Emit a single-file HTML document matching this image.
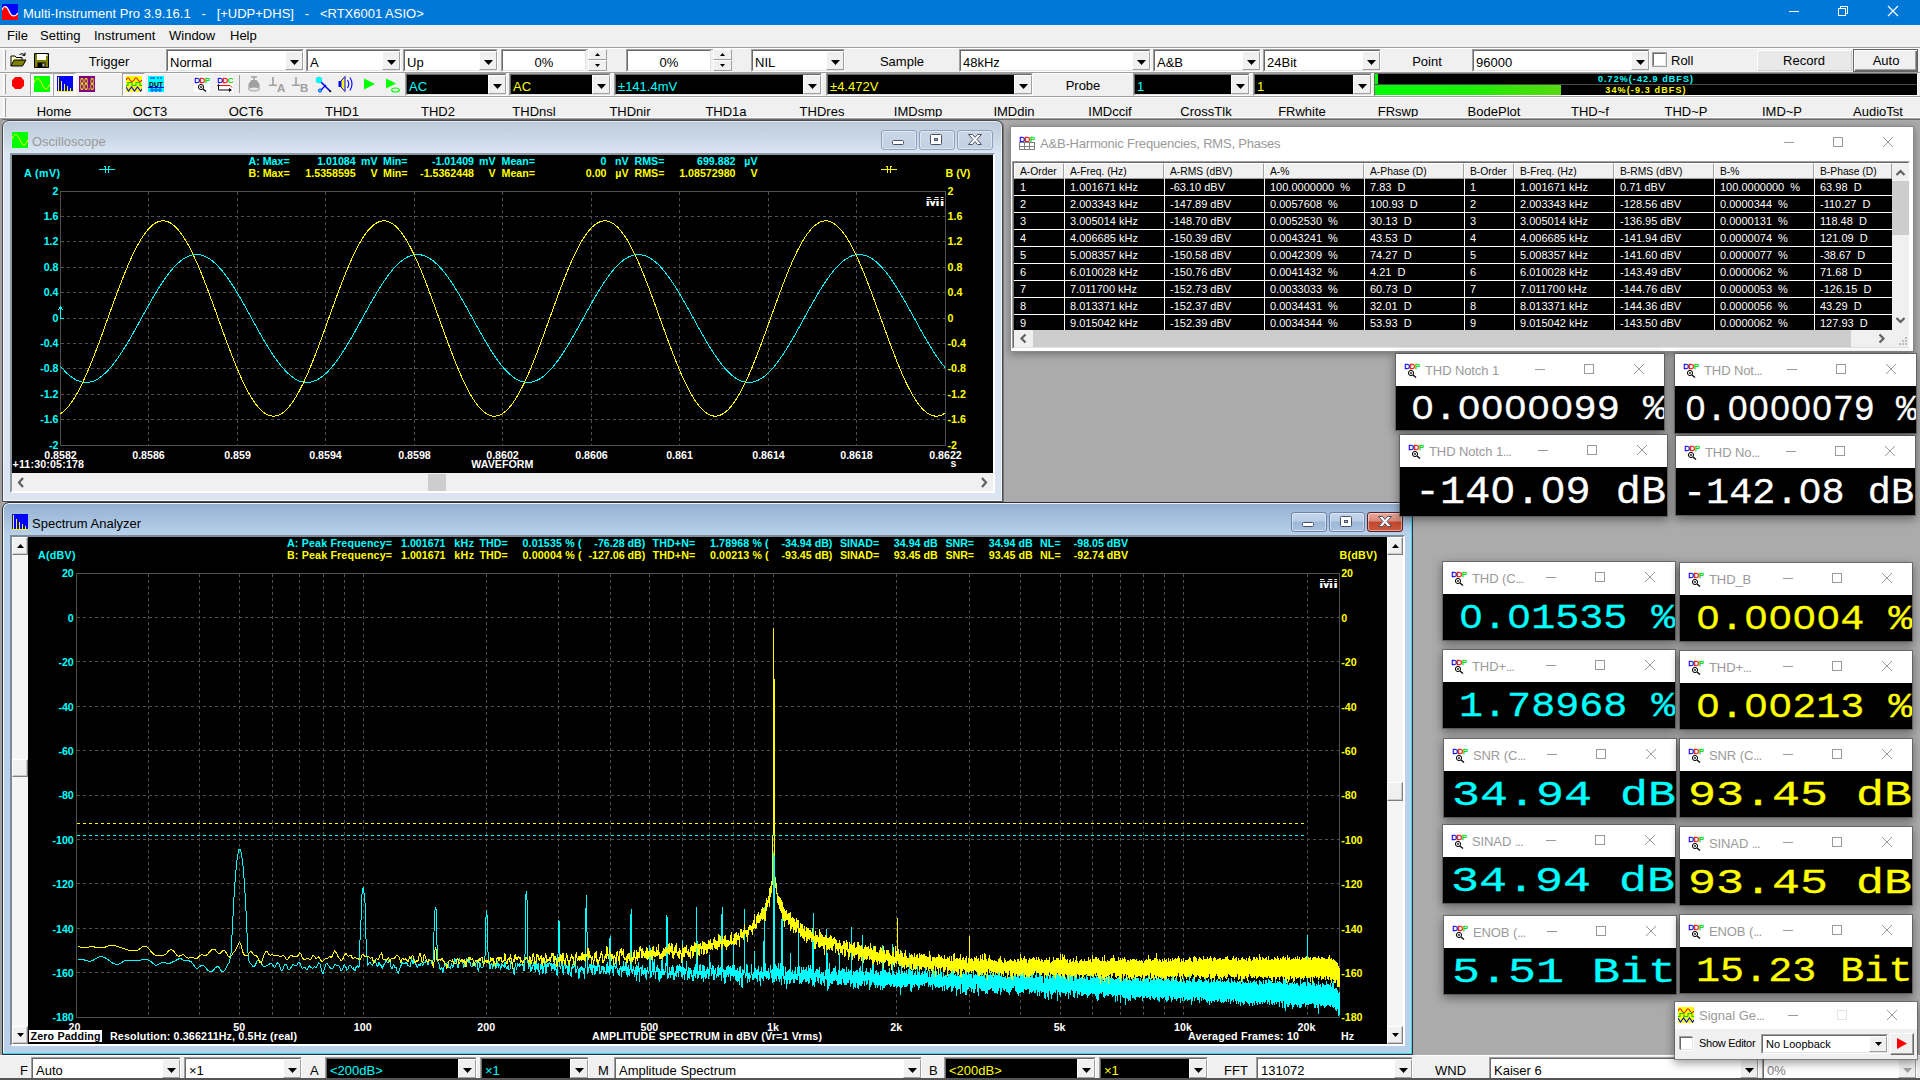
<!DOCTYPE html>
<html><head><meta charset="utf-8"><title>Multi-Instrument Pro</title><style>
html,body{margin:0;padding:0}
body{width:1920px;height:1080px;overflow:hidden;position:relative;background:#ababab;font-family:"Liberation Sans",sans-serif;font-size:13px}
.a{position:absolute}
.t{position:absolute;white-space:pre;line-height:16px}
.cb{box-sizing:border-box;border:1px solid;border-color:#a0a0a0 #fff #fff #a0a0a0}
.cbi{position:absolute;left:0;top:0;right:0;bottom:0;box-sizing:border-box;border:1px solid;border-color:#696969 #e3e3e3 #e3e3e3 #696969;background:#fff}
.sp .cbi{right:20px}
.cbt{position:absolute;top:4px;line-height:16px;white-space:pre;font-size:13px}
.cbb{position:absolute;right:-1px;top:0;bottom:0;width:18px;background:#f0f0f0;box-sizing:border-box;border:1px solid;border-color:#fff #a0a0a0 #a0a0a0 #fff}
</style></head><body>
<div class="a " style="left:0px;top:0px;width:1920px;height:25px;background:#0078d7"></div><svg class="a" style="left:2px;top:4px" width="16" height="16" viewBox="0 0 16 16"><rect width="16" height="16" fill="#00f"/><path d="M0 6C2 0.500,5 2,7 7S12 14,16 9V16H0z" fill="#f00"/><path d="M0 6C2 0.500,5 2,7 7S12 14,16 9" stroke="#fff" stroke-width="1.200" fill="none"/></svg><span class="t " style="left:23px;top:6px;font-size:13px;color:#fff;">Multi-Instrument Pro 3.9.16.1   -   [+UDP+DHS]   -   &lt;RTX6001 ASIO&gt;</span><svg class="a" style="left:1780px;top:0" width="140" height="25" viewBox="0 0 140 25" shape-rendering="crispEdges"><path d="M8.500 11.500h10" stroke="#fff" fill="none"/><path d="M58.5 8.5h7v7h-7z M60.5 8.5v-2h7v7h-2" stroke="#fff" fill="none"/><path d="M108 6l10 10M118 6l-10 10" stroke="#fff" fill="none" stroke-width="1.200" shape-rendering="auto"/></svg><div class="a " style="left:0px;top:25px;width:1920px;height:23px;background:#f0f0f0"></div><span class="t " style="left:7px;top:28px;font-size:13px;color:#000;">File</span><span class="t " style="left:40px;top:28px;font-size:13px;color:#000;">Setting</span><span class="t " style="left:94px;top:28px;font-size:13px;color:#000;">Instrument</span><span class="t " style="left:169px;top:28px;font-size:13px;color:#000;">Window</span><span class="t " style="left:230px;top:28px;font-size:13px;color:#000;">Help</span><div class="a " style="left:0px;top:47px;width:1920px;height:71px;background:#f0f0f0"></div><div class="a " style="left:0px;top:47px;width:1920px;height:1px;background:#a0a0a0"></div><div class="a " style="left:0px;top:48px;width:1920px;height:1px;background:#fff"></div><div class="a " style="left:0px;top:72px;width:1920px;height:1px;background:#a0a0a0"></div><div class="a " style="left:0px;top:73px;width:1920px;height:1px;background:#fff"></div><div class="a " style="left:0px;top:96px;width:1920px;height:1px;background:#a0a0a0"></div><div class="a " style="left:0px;top:97px;width:1920px;height:1px;background:#fff"></div><div class="a " style="left:3px;top:50px;width:2px;height:20px;border-left:1px solid #fff;border-right:1px solid #a0a0a0;box-sizing:border-box;width:3px"></div><div class="a " style="left:3px;top:74px;width:2px;height:20px;border-left:1px solid #fff;border-right:1px solid #a0a0a0;box-sizing:border-box;width:3px"></div><div class="a " style="left:3px;top:98px;width:2px;height:20px;border-left:1px solid #fff;border-right:1px solid #a0a0a0;box-sizing:border-box;width:3px"></div><svg class="a" style="left:10px;top:52px" width="17" height="15" viewBox="0 0 17 15"><path d="M1 14V4h4l1 1.500h6V8" fill="#ffffc0" stroke="#000" stroke-width="1"/><path d="M1 14l3-6h12l-3.500 6z" fill="#808000" stroke="#000" stroke-width="1"/><path d="M9.500 2.500q3-2 5.500 .5M15 0.500v2.800h-2.800" stroke="#000" fill="none" stroke-width="1"/></svg><svg class="a" style="left:34px;top:53px" width="15" height="15" viewBox="0 0 15 15"><path d="M.5 .5h14v14h-14z" fill="#808000" stroke="#000"/><rect x="3" y="1" width="9" height="6" fill="#fff"/><rect x="3.500" y="9.500" width="8" height="5" fill="#000"/><rect x="8.500" y="10.500" width="2" height="3" fill="#c0c0c0"/><rect x="12" y="1.500" width="1.500" height="1.500" fill="#fff"/></svg><span class="t" style="left:9px;width:200px;text-align:center;top:54px;font-size:13px;color:#000">Trigger</span><div class="a cb" style="left:166px;top:49px;width:138px;height:23px;"><div class="cbi" style="background:#fff"><span class="cbt" style="color:#000;font-size:13px;left:2px">Normal</span><div class="cbb"><svg class="a" style="right:3px;top:50%;margin-top:-1px" width="9" height="5" viewBox="0 0 9 5"><path d="M0 0h9l-4.5 5z" fill="#000"/></svg></div></div></div><div class="a cb" style="left:306px;top:49px;width:95px;height:23px;"><div class="cbi" style="background:#fff"><span class="cbt" style="color:#000;font-size:13px;left:2px">A</span><div class="cbb"><svg class="a" style="right:3px;top:50%;margin-top:-1px" width="9" height="5" viewBox="0 0 9 5"><path d="M0 0h9l-4.5 5z" fill="#000"/></svg></div></div></div><div class="a cb" style="left:403px;top:49px;width:95px;height:23px;"><div class="cbi" style="background:#fff"><span class="cbt" style="color:#000;font-size:13px;left:2px">Up</span><div class="cbb"><svg class="a" style="right:3px;top:50%;margin-top:-1px" width="9" height="5" viewBox="0 0 9 5"><path d="M0 0h9l-4.5 5z" fill="#000"/></svg></div></div></div><div class="a cb sp" style="left:501px;top:49px;width:106px;height:23px;"><div class="cbi" style="right:20px"><span class="cbt" style="left:0;right:0;text-align:center">0%</span></div></div><div class="a " style="left:588px;top:49px;width:19px;height:11px;background:#f0f0f0;border:1px solid;border-color:#fff #a0a0a0 #a0a0a0 #fff;box-sizing:border-box"><svg class="a" style="left:6px;top:3px" width="5" height="3" viewBox="0 0 5 3"><path d="M0 3h5L2.500 0z" fill="#000"/></svg></div><div class="a " style="left:588px;top:60px;width:19px;height:11px;background:#f0f0f0;border:1px solid;border-color:#fff #a0a0a0 #a0a0a0 #fff;box-sizing:border-box"><svg class="a" style="left:6px;top:3px" width="5" height="3" viewBox="0 0 5 3"><path d="M0 0h5L2.500 3z" fill="#000"/></svg></div><div class="a cb sp" style="left:626px;top:49px;width:106px;height:23px;"><div class="cbi" style="right:20px"><span class="cbt" style="left:0;right:0;text-align:center">0%</span></div></div><div class="a " style="left:713px;top:49px;width:19px;height:11px;background:#f0f0f0;border:1px solid;border-color:#fff #a0a0a0 #a0a0a0 #fff;box-sizing:border-box"><svg class="a" style="left:6px;top:3px" width="5" height="3" viewBox="0 0 5 3"><path d="M0 3h5L2.500 0z" fill="#000"/></svg></div><div class="a " style="left:713px;top:60px;width:19px;height:11px;background:#f0f0f0;border:1px solid;border-color:#fff #a0a0a0 #a0a0a0 #fff;box-sizing:border-box"><svg class="a" style="left:6px;top:3px" width="5" height="3" viewBox="0 0 5 3"><path d="M0 0h5L2.500 3z" fill="#000"/></svg></div><div class="a cb" style="left:751px;top:49px;width:94px;height:23px;"><div class="cbi" style="background:#fff"><span class="cbt" style="color:#000;font-size:13px;left:2px">NIL</span><div class="cbb"><svg class="a" style="right:3px;top:50%;margin-top:-1px" width="9" height="5" viewBox="0 0 9 5"><path d="M0 0h9l-4.5 5z" fill="#000"/></svg></div></div></div><span class="t" style="left:802px;width:200px;text-align:center;top:54px;font-size:13px;color:#000">Sample</span><div class="a cb" style="left:959px;top:49px;width:192px;height:23px;"><div class="cbi" style="background:#fff"><span class="cbt" style="color:#000;font-size:13px;left:2px">48kHz</span><div class="cbb"><svg class="a" style="right:3px;top:50%;margin-top:-1px" width="9" height="5" viewBox="0 0 9 5"><path d="M0 0h9l-4.5 5z" fill="#000"/></svg></div></div></div><div class="a cb" style="left:1153px;top:49px;width:108px;height:23px;"><div class="cbi" style="background:#fff"><span class="cbt" style="color:#000;font-size:13px;left:2px">A&amp;B</span><div class="cbb"><svg class="a" style="right:3px;top:50%;margin-top:-1px" width="9" height="5" viewBox="0 0 9 5"><path d="M0 0h9l-4.5 5z" fill="#000"/></svg></div></div></div><div class="a cb" style="left:1263px;top:49px;width:118px;height:23px;"><div class="cbi" style="background:#fff"><span class="cbt" style="color:#000;font-size:13px;left:2px">24Bit</span><div class="cbb"><svg class="a" style="right:3px;top:50%;margin-top:-1px" width="9" height="5" viewBox="0 0 9 5"><path d="M0 0h9l-4.5 5z" fill="#000"/></svg></div></div></div><span class="t" style="left:1327px;width:200px;text-align:center;top:54px;font-size:13px;color:#000">Point</span><div class="a cb" style="left:1472px;top:49px;width:178px;height:23px;"><div class="cbi" style="background:#fff"><span class="cbt" style="color:#000;font-size:13px;left:2px">96000</span><div class="cbb"><svg class="a" style="right:3px;top:50%;margin-top:-1px" width="9" height="5" viewBox="0 0 9 5"><path d="M0 0h9l-4.5 5z" fill="#000"/></svg></div></div></div><div class="a " style="left:1653px;top:53px;width:13px;height:13px;background:#fff;border:1px solid;border-color:#696969 #e3e3e3 #e3e3e3 #696969;box-sizing:border-box;outline:1px solid #a0a0a0;outline-offset:0"></div><span class="t " style="left:1671px;top:53px;font-size:13px;color:#000;">Roll</span><div class="a " style="left:1757px;top:50px;width:95px;height:21px;background:#e9e9e9;border:1px solid;border-color:#fff #d0d0d0 #d0d0d0 #fff;box-sizing:border-box"></div><span class="t" style="left:1704px;width:200px;text-align:center;top:53px;font-size:13px;color:#000">Record</span><div class="a " style="left:1853px;top:49px;width:65px;height:23px;background:#f0f0f0;border:1px solid #646464;box-sizing:border-box;box-shadow:inset 1px 1px 0 #fff,inset -1px -1px 0 #696969,inset -2px -2px 0 #a0a0a0"></div><span class="t" style="left:1786px;width:200px;text-align:center;top:53px;font-size:13px;color:#000">Auto</span><svg class="a" style="left:11px;top:76px" width="14" height="14" viewBox="0 0 14 14"><path d="M4.2 1h5.6L13 4.2v5.6L9.8 13H4.2L1 9.8V4.2z" fill="#f00"/></svg><div class="a " style="left:30px;top:73px;width:23px;height:23px;background:#f8f8f8;border:1px solid;border-color:#a0a0a0 #fff #fff #a0a0a0;box-sizing:border-box"></div><div class="a " style="left:122px;top:73px;width:23px;height:23px;background:#f8f8f8;border:1px solid;border-color:#a0a0a0 #fff #fff #a0a0a0;box-sizing:border-box"></div><div class="a " style="left:53px;top:73px;width:23px;height:23px;background:#f8f8f8;border:1px solid;border-color:#a0a0a0 #fff #fff #a0a0a0;box-sizing:border-box"></div><svg class="a" style="left:34px;top:76px" width="16" height="16" viewBox="0 0 16 16" shape-rendering="crispEdges"><rect width="16" height="16" fill="#0f0"/><path d="M0 7 C2 1,5 1,8 8 S13 14,16 8" stroke="#ff0" fill="none" stroke-width="1" shape-rendering="auto"/></svg><svg class="a" style="left:57px;top:76px" width="16" height="16" viewBox="0 0 16 16" shape-rendering="crispEdges"><rect width="16" height="16" fill="#00f"/><path d="M1.5 1v14M4.5 5v10M7.5 8v7M10.5 10v5M13.5 12v3M0 15.5h16" stroke="#ff0" fill="none"/></svg><svg class="a" style="left:79px;top:76px" width="16" height="16" viewBox="0 0 16 16"><rect width="16" height="16" fill="#800080"/><text x="8" y="14" font-size="16" font-family="Liberation Sans,sans-serif" fill="#ff0" text-anchor="middle" textLength="14.500" lengthAdjust="spacingAndGlyphs">88.8</text></svg><svg class="a" style="left:126px;top:76px" width="16" height="16" viewBox="0 0 16 16"><rect width="16" height="16" fill="#ff0"/><path d="M0 4q2-4.500 4 0q2 3 4 0q2-4.500 4 0q2 3 4 0" stroke="#f00" fill="none" stroke-width="1.100"/><path d="M0 9.500h2v-3h4v3h4v-3h4v3h2" stroke="#0c0" fill="none" stroke-width="1.100"/><path d="M0 11l2.500 4l3-4l3 4l3-4l3 4l1.500-2" stroke="#00f" fill="none" stroke-width="1.100"/></svg><svg class="a" style="left:148px;top:76px" width="16" height="16" viewBox="0 0 16 16"><rect width="16" height="16" fill="#0ff"/><text x="8" y="10.5" font-size="8" font-weight="bold" font-family="Liberation Sans,sans-serif" fill="#000" text-anchor="middle" textLength="14" lengthAdjust="spacingAndGlyphs">DUT</text><path d="M2 2h5M9 2h2M12 2h2M0 11.5h16" stroke="#00f" fill="none"/><circle cx="4" cy="14" r="1.3" fill="none" stroke="#00f" stroke-width=".8"/><circle cx="8" cy="14" r="1.3" fill="none" stroke="#00f" stroke-width=".8"/><circle cx="12" cy="14" r="1.3" fill="none" stroke="#00f" stroke-width=".8"/></svg><svg class="a" style="left:194px;top:76px" width="16" height="16" viewBox="0 0 16 16"><rect width="16" height="16" fill="#fff"/><text x="0.200" y="6.800" font-size="8" font-family="Liberation Sans,sans-serif" stroke-width=".35" fill="#00f" stroke="#00f">D</text><text x="5.400" y="6.800" font-size="8" font-family="Liberation Sans,sans-serif" stroke-width=".35" fill="#f00" stroke="#f00">D</text><text x="10.700" y="6.800" font-size="8" font-family="Liberation Sans,sans-serif" stroke-width=".35" fill="#0d0" stroke="#0d0">P</text><circle cx="7" cy="11" r="2.600" fill="none" stroke="#000" stroke-width="1"/><path d="M5.800 11h2.400M7 9.800v2.400" stroke="#000" stroke-width=".8"/><path d="M9 13l3 2.500" stroke="#000" stroke-width="1.300"/></svg><svg class="a" style="left:217px;top:76px" width="16" height="16" viewBox="0 0 16 16"><rect width="16" height="16" fill="#fff"/><text x="0.200" y="6.800" font-size="8" font-family="Liberation Sans,sans-serif" stroke-width=".35" fill="#00f" stroke="#00f">D</text><text x="5.400" y="6.800" font-size="8" font-family="Liberation Sans,sans-serif" stroke-width=".35" fill="#f00" stroke="#f00">D</text><text x="10.700" y="6.800" font-size="8" font-family="Liberation Sans,sans-serif" stroke-width=".35" fill="#0d0" stroke="#0d0">C</text><path d="M2 9.5h11l2 2" stroke="#f00" fill="none"/><path d="M1.5 9v5h12" stroke="#000" fill="none"/><path d="M12 12l3 2l-3 2zM0 10l1.5-2l1.5 2z" fill="#000"/></svg><div class="a " style="left:239px;top:75px;width:1px;height:18px;background:#a0a0a0"></div><svg class="a" style="left:247px;top:76px" width="14" height="16" viewBox="0 0 14 16"><path d="M4 1h6M7 1v3" stroke="#a0a0a0" stroke-width="1.4" fill="none"/><path d="M4.5 4h5l3 4v4.5h-11V8z" fill="#a0a0a0"/><ellipse cx="7" cy="13" rx="5.5" ry="2" fill="#e8e8e8" stroke="#a0a0a0"/></svg><svg class="a" style="left:268px;top:76px" width="18" height="17" viewBox="0 0 18 17"><path d="M5 1v8M1 9.2h8" stroke="#a0a0a0" stroke-width="1.6" fill="none"/><text x="9" y="16" font-size="11.5" font-weight="bold" font-family="Liberation Sans,sans-serif" fill="#a0a0a0">A</text></svg><svg class="a" style="left:291px;top:76px" width="18" height="17" viewBox="0 0 18 17"><path d="M5 1v8M1 9.2h8" stroke="#a0a0a0" stroke-width="1.6" fill="none"/><text x="9" y="16" font-size="11.5" font-weight="bold" font-family="Liberation Sans,sans-serif" fill="#a0a0a0">B</text></svg><svg class="a" style="left:315px;top:76px" width="17" height="17" viewBox="0 0 17 17"><path d="M5 5l10 10" stroke="#00f" stroke-width="1.6" fill="none"/><path d="M5 15l6-6" stroke="#00f" stroke-width="1.2" fill="none"/><circle cx="4" cy="4" r="3" fill="#0ff" stroke="#0cc" stroke-width=".5"/><circle cx="5" cy="14.5" r="1.6" fill="#0ff" stroke="#00f" stroke-width=".8"/><circle cx="15.3" cy="15.3" r="1" fill="#000"/></svg><svg class="a" style="left:337px;top:75px" width="18" height="18" viewBox="0 0 18 18"><path d="M1.5 6h2.5v6H1.5z" fill="#00f"/><path d="M4 6l4-4.5v15L4 12z" fill="#ff0" stroke="#00f" stroke-width="1"/><path d="M10.5 5q2.5 4 0 8M13 2.5q4 6.500 0 13" stroke="#00f" stroke-width="1.1" fill="none"/></svg><svg class="a" style="left:363px;top:78px" width="13" height="12" viewBox="0 0 13 12"><path d="M1 0.500L12 6L1 11.500z" fill="#0f0"/></svg><svg class="a" style="left:385px;top:78px" width="16" height="16" viewBox="0 0 16 16"><path d="M1 0.500L11 5.500L1 10.500z" fill="#0f0"/><ellipse cx="10.5" cy="12" rx="3.8" ry="2" fill="none" stroke="#0f0" stroke-width="1.2"/></svg><div class="a cb" style="left:405px;top:73px;width:102px;height:23px;"><div class="cbi" style="background:#000"><span class="cbt" style="color:#0ff;font-size:13px;left:2px">AC</span><div class="cbb"><svg class="a" style="right:3px;top:50%;margin-top:-1px" width="9" height="5" viewBox="0 0 9 5"><path d="M0 0h9l-4.5 5z" fill="#000"/></svg></div></div></div><div class="a cb" style="left:509px;top:73px;width:102px;height:23px;"><div class="cbi" style="background:#000"><span class="cbt" style="color:#ff0;font-size:13px;left:2px">AC</span><div class="cbb"><svg class="a" style="right:3px;top:50%;margin-top:-1px" width="9" height="5" viewBox="0 0 9 5"><path d="M0 0h9l-4.5 5z" fill="#000"/></svg></div></div></div><div class="a cb" style="left:614px;top:73px;width:208px;height:23px;"><div class="cbi" style="background:#000"><span class="cbt" style="color:#0ff;font-size:13px;left:2px">±141.4mV</span><div class="cbb"><svg class="a" style="right:3px;top:50%;margin-top:-1px" width="9" height="5" viewBox="0 0 9 5"><path d="M0 0h9l-4.5 5z" fill="#000"/></svg></div></div></div><div class="a cb" style="left:826px;top:73px;width:207px;height:23px;"><div class="cbi" style="background:#000"><span class="cbt" style="color:#ff0;font-size:13px;left:2px">±4.472V</span><div class="cbb"><svg class="a" style="right:3px;top:50%;margin-top:-1px" width="9" height="5" viewBox="0 0 9 5"><path d="M0 0h9l-4.5 5z" fill="#000"/></svg></div></div></div><span class="t" style="left:983px;width:200px;text-align:center;top:78px;font-size:13px;color:#000">Probe</span><div class="a cb" style="left:1133px;top:73px;width:117px;height:23px;"><div class="cbi" style="background:#000"><span class="cbt" style="color:#0ff;font-size:13px;left:2px">1</span><div class="cbb"><svg class="a" style="right:3px;top:50%;margin-top:-1px" width="9" height="5" viewBox="0 0 9 5"><path d="M0 0h9l-4.5 5z" fill="#000"/></svg></div></div></div><div class="a cb" style="left:1253px;top:73px;width:119px;height:23px;"><div class="cbi" style="background:#000"><span class="cbt" style="color:#ff0;font-size:13px;left:2px">1</span><div class="cbb"><svg class="a" style="right:3px;top:50%;margin-top:-1px" width="9" height="5" viewBox="0 0 9 5"><path d="M0 0h9l-4.5 5z" fill="#000"/></svg></div></div></div><div class="a " style="left:1374px;top:73px;width:544px;height:23px;background:#000;border:1px solid;border-color:#696969 #fff #fff #696969;box-sizing:border-box"></div><div class="a " style="left:1375px;top:84px;width:542px;height:1px;background:#4a4a4a"></div><div class="a " style="left:1375px;top:74px;width:3px;height:10px;background:#0f0"></div><div class="a " style="left:1375px;top:85px;width:186px;height:10px;background:linear-gradient(90deg,#0f0 0%,#18f000 50%,#58d810 100%)"></div><span class="t" style="left:1546px;width:200px;text-align:center;top:74px;font-size:9px;letter-spacing:1.06px;font-weight:bold;color:#0ff;line-height:11px">0.72%(-42.9 dBFS)</span><span class="t" style="left:1546px;width:200px;text-align:center;top:85px;font-size:9px;letter-spacing:1.14px;font-weight:bold;color:#ff0;line-height:11px">34%(-9.3 dBFS)</span><span class="t" style="left:-46px;width:200px;text-align:center;top:104px;font-size:13px;color:#000">Home</span><span class="t" style="left:50px;width:200px;text-align:center;top:104px;font-size:13px;color:#000">OCT3</span><span class="t" style="left:146px;width:200px;text-align:center;top:104px;font-size:13px;color:#000">OCT6</span><span class="t" style="left:242px;width:200px;text-align:center;top:104px;font-size:13px;color:#000">THD1</span><span class="t" style="left:338px;width:200px;text-align:center;top:104px;font-size:13px;color:#000">THD2</span><span class="t" style="left:434px;width:200px;text-align:center;top:104px;font-size:13px;color:#000">THDnsl</span><span class="t" style="left:530px;width:200px;text-align:center;top:104px;font-size:13px;color:#000">THDnir</span><span class="t" style="left:626px;width:200px;text-align:center;top:104px;font-size:13px;color:#000">THD1a</span><span class="t" style="left:722px;width:200px;text-align:center;top:104px;font-size:13px;color:#000">THDres</span><span class="t" style="left:818px;width:200px;text-align:center;top:104px;font-size:13px;color:#000">IMDsmp</span><span class="t" style="left:914px;width:200px;text-align:center;top:104px;font-size:13px;color:#000">IMDdin</span><span class="t" style="left:1010px;width:200px;text-align:center;top:104px;font-size:13px;color:#000">IMDccif</span><span class="t" style="left:1106px;width:200px;text-align:center;top:104px;font-size:13px;color:#000">CrossTlk</span><span class="t" style="left:1202px;width:200px;text-align:center;top:104px;font-size:13px;color:#000">FRwhite</span><span class="t" style="left:1298px;width:200px;text-align:center;top:104px;font-size:13px;color:#000">FRswp</span><span class="t" style="left:1394px;width:200px;text-align:center;top:104px;font-size:13px;color:#000">BodePlot</span><span class="t" style="left:1490px;width:200px;text-align:center;top:104px;font-size:13px;color:#000">THD~f</span><span class="t" style="left:1586px;width:200px;text-align:center;top:104px;font-size:13px;color:#000">THD~P</span><span class="t" style="left:1682px;width:200px;text-align:center;top:104px;font-size:13px;color:#000">IMD~P</span><span class="t" style="left:1778px;width:200px;text-align:center;top:104px;font-size:13px;color:#000">AudioTst</span><div class="a " style="left:0px;top:117px;width:1920px;height:1px;background:#fff"></div><div class="a " style="left:0px;top:118px;width:1920px;height:1px;background:#a0a0a0"></div><div class="a " style="left:0px;top:119px;width:1920px;height:1px;background:#696969"></div><div class="a " style="left:0px;top:119px;width:2px;height:937px;background:#a0a0a0"></div><div class="a " style="left:0px;top:1055px;width:1920px;height:25px;background:#f0f0f0"></div><div class="a " style="left:0px;top:1055px;width:1920px;height:1px;background:#fff"></div><span class="t " style="left:20px;top:1063px;font-size:13px;color:#000;">F</span><div class="a cb" style="left:31px;top:1057px;width:150px;height:23px;"><div class="cbi" style="background:#fff"><span class="cbt" style="color:#000;font-size:13px;left:3px">Auto</span><div class="cbb"><svg class="a" style="right:3px;top:50%;margin-top:-1px" width="9" height="5" viewBox="0 0 9 5"><path d="M0 0h9l-4.5 5z" fill="#000"/></svg></div></div></div><div class="a cb" style="left:184px;top:1057px;width:118px;height:23px;"><div class="cbi" style="background:#fff"><span class="cbt" style="color:#000;font-size:13px;left:3px">×1</span><div class="cbb"><svg class="a" style="right:3px;top:50%;margin-top:-1px" width="9" height="5" viewBox="0 0 9 5"><path d="M0 0h9l-4.5 5z" fill="#000"/></svg></div></div></div><span class="t " style="left:310px;top:1063px;font-size:13px;color:#000;">A</span><div class="a cb" style="left:325px;top:1057px;width:152px;height:23px;"><div class="cbi" style="background:#000"><span class="cbt" style="color:#0ff;font-size:13px;left:3px">&lt;200dB&gt;</span><div class="cbb"><svg class="a" style="right:3px;top:50%;margin-top:-1px" width="9" height="5" viewBox="0 0 9 5"><path d="M0 0h9l-4.5 5z" fill="#000"/></svg></div></div></div><div class="a cb" style="left:480px;top:1057px;width:109px;height:23px;"><div class="cbi" style="background:#000"><span class="cbt" style="color:#0ff;font-size:13px;left:3px">×1</span><div class="cbb"><svg class="a" style="right:3px;top:50%;margin-top:-1px" width="9" height="5" viewBox="0 0 9 5"><path d="M0 0h9l-4.5 5z" fill="#000"/></svg></div></div></div><span class="t " style="left:598px;top:1063px;font-size:13px;color:#000;">M</span><div class="a cb" style="left:614px;top:1057px;width:308px;height:23px;"><div class="cbi" style="background:#fff"><span class="cbt" style="color:#000;font-size:13px;left:3px">Amplitude Spectrum</span><div class="cbb"><svg class="a" style="right:3px;top:50%;margin-top:-1px" width="9" height="5" viewBox="0 0 9 5"><path d="M0 0h9l-4.5 5z" fill="#000"/></svg></div></div></div><span class="t " style="left:929px;top:1063px;font-size:13px;color:#000;">B</span><div class="a cb" style="left:944px;top:1057px;width:152px;height:23px;"><div class="cbi" style="background:#000"><span class="cbt" style="color:#ff0;font-size:13px;left:3px">&lt;200dB&gt;</span><div class="cbb"><svg class="a" style="right:3px;top:50%;margin-top:-1px" width="9" height="5" viewBox="0 0 9 5"><path d="M0 0h9l-4.5 5z" fill="#000"/></svg></div></div></div><div class="a cb" style="left:1099px;top:1057px;width:109px;height:23px;"><div class="cbi" style="background:#000"><span class="cbt" style="color:#ff0;font-size:13px;left:3px">×1</span><div class="cbb"><svg class="a" style="right:3px;top:50%;margin-top:-1px" width="9" height="5" viewBox="0 0 9 5"><path d="M0 0h9l-4.5 5z" fill="#000"/></svg></div></div></div><span class="t " style="left:1224px;top:1063px;font-size:13px;color:#000;">FFT</span><div class="a cb" style="left:1256px;top:1057px;width:157px;height:23px;"><div class="cbi" style="background:#fff"><span class="cbt" style="color:#000;font-size:13px;left:3px">131072</span><div class="cbb"><svg class="a" style="right:3px;top:50%;margin-top:-1px" width="9" height="5" viewBox="0 0 9 5"><path d="M0 0h9l-4.5 5z" fill="#000"/></svg></div></div></div><span class="t " style="left:1435px;top:1063px;font-size:13px;color:#000;">WND</span><div class="a cb" style="left:1489px;top:1057px;width:270px;height:23px;"><div class="cbi" style="background:#fff"><span class="cbt" style="color:#000;font-size:13px;left:3px">Kaiser 6</span><div class="cbb"><svg class="a" style="right:3px;top:50%;margin-top:-1px" width="9" height="5" viewBox="0 0 9 5"><path d="M0 0h9l-4.5 5z" fill="#000"/></svg></div></div></div><div class="a cb" style="left:1762px;top:1057px;width:155px;height:23px;"><div class="cbi" style="background:#fff"><span class="cbt" style="color:#808080;font-size:13px;left:3px">0%</span><div class="cbb"><svg class="a" style="right:3px;top:50%;margin-top:-1px" width="9" height="5" viewBox="0 0 9 5"><path d="M0 0h9l-4.5 5z" fill="#a0a0a0"/></svg></div></div></div>
<div class="a " style="left:2px;top:120px;width:1001px;height:382px;box-sizing:border-box;border:1px solid #4a4a4a;border-radius:7px 7px 0 0;background:linear-gradient(#bccbdb 1px,#c3d1e0 9px,#ccd9e7 19px,#d7e3f0 29px,#dae6f2 32px,#dae5f1 100%);box-shadow:inset 0 0 0 1px rgba(255,255,255,.6),1px 0 0 #777"></div><svg class="a" style="left:12px;top:132px" width="16" height="16" viewBox="0 0 16 16"><rect width="16" height="16" fill="#0f0"/><path d="M0 7 C2 1,5 1,8 8 S13 14,16 8" stroke="#ff0" fill="none" stroke-width="1"/></svg><span class="t " style="left:32px;top:134px;font-size:13px;color:#9a9a9a;">Oscilloscope</span><div class="a " style="left:881px;top:130px;width:36px;height:20px;background:linear-gradient(#c9d6e6,#c2d1e3);border:1px solid #8e9fc0;border-radius:3px;box-sizing:border-box;box-shadow:inset 0 0 0 1px rgba(255,255,255,.45)"></div><div class="a " style="left:919px;top:130px;width:36px;height:20px;background:linear-gradient(#c9d6e6,#c2d1e3);border:1px solid #8e9fc0;border-radius:3px;box-sizing:border-box;box-shadow:inset 0 0 0 1px rgba(255,255,255,.45)"></div><div class="a " style="left:957px;top:130px;width:36px;height:20px;background:linear-gradient(#c9d6e6,#c2d1e3);border:1px solid #8e9fc0;border-radius:3px;box-sizing:border-box;box-shadow:inset 0 0 0 1px rgba(255,255,255,.45)"></div><svg class="a" style="left:881px;top:130px" width="112" height="20" viewBox="0 0 112 20"><rect x="11.500" y="10.500" width="11" height="4" rx="1" fill="#fff" stroke="#4a5266" stroke-width="1"/><rect x="49.500" y="4.500" width="11" height="10" rx="1" fill="#fff" stroke="#4a5266" stroke-width="1"/><rect x="53.500" y="8.500" width="3" height="2" fill="#a9bbd6" stroke="#4a5266" stroke-width="1"/><path d="M87.500 4.500h4l2.500 3l2.500-3h4l-4.500 5l4.500 5h-4l-2.500-3l-2.500 3h-4l4.500-5z" fill="#fff" stroke="#4a5266" stroke-width="1" stroke-linejoin="round"/></svg><div class="a " style="left:10px;top:153px;width:985px;height:340px;box-sizing:border-box;border:2px solid;border-color:#8f99a6 #fff #fff #8f99a6;background:#000"></div><div class="a " style="left:12px;top:473px;width:981px;height:18px;background:#f0f0f0"></div><div class="a " style="left:428px;top:474px;width:18px;height:17px;background:#cdcdcd"></div><svg class="a" style="left:12px;top:473px" width="981" height="18" viewBox="0 0 981 18"><path d="M11 5l-4 4.500l4 4.500M970 5l4 4.500l-4 4.500" stroke="#606060" stroke-width="2.200" fill="none"/></svg><svg class="a" style="left:12px;top:155px" width="981" height="318" viewBox="12 155 981 318" font-family="Liberation Sans,sans-serif" font-weight="bold" font-size="10.67"><g shape-rendering="crispEdges" stroke="#505050" fill="none"><rect x="60.5" y="191.5" width="885" height="254"/><path d="M148.5 192V445M237.5 192V445M325.5 192V445M414.5 192V445M502.5 192V445M591.5 192V445M679.5 192V445M768.5 192V445M856.5 192V445M61 216.5H945M61 241.5H945M61 267.5H945M61 292.5H945M61 318.5H945M61 343.5H945M61 368.5H945M61 394.5H945M61 419.5H945" stroke-dasharray="3 3"/></g><polyline points="60,365.7 63,369.2 66,372.4 69,375.1 72,377.5 75,379.4 78,380.8 81,381.8 84,382.4 87,382.5 90,382.1 93,381.3 96,380.0 99,378.2 102,376.0 105,373.4 108,370.4 111,367.0 114,363.3 117,359.3 120,354.9 123,350.3 126,345.4 129,340.4 132,335.2 135,329.9 138,324.5 141,319.0 144,313.5 147,308.1 150,302.8 153,297.5 156,292.5 159,287.6 162,282.9 165,278.5 168,274.4 171,270.6 174,267.2 177,264.1 180,261.4 183,259.2 186,257.3 189,256.0 192,255.0 195,254.6 198,254.6 201,255.0 204,256.0 207,257.3 210,259.2 213,261.4 216,264.1 219,267.2 222,270.6 225,274.4 228,278.5 231,282.9 234,287.6 237,292.5 240,297.5 243,302.8 246,308.1 249,313.5 252,319.0 255,324.5 258,329.9 261,335.2 264,340.4 267,345.4 270,350.3 273,354.9 276,359.3 279,363.3 282,367.0 285,370.4 288,373.4 291,376.0 294,378.2 297,380.0 300,381.3 303,382.1 306,382.5 309,382.4 312,381.8 315,380.8 318,379.4 321,377.5 324,375.1 327,372.4 330,369.2 333,365.7 336,361.9 339,357.7 342,353.2 345,348.5 348,343.6 351,338.5 354,333.2 357,327.9 360,322.5 363,317.0 366,311.6 369,306.2 372,300.8 375,295.7 378,290.7 381,285.8 384,281.3 387,277.0 390,273.0 393,269.3 396,266.0 399,263.1 402,260.5 405,258.4 408,256.8 411,255.6 414,254.8 417,254.5 420,254.7 423,255.3 426,256.4 429,258.0 432,259.9 435,262.4 438,265.2 441,268.4 444,272.0 447,275.9 450,280.1 453,284.6 456,289.4 459,294.3 462,299.5 465,304.7 468,310.1 471,315.5 474,321.0 477,326.4 480,331.8 483,337.1 486,342.3 489,347.2 492,352.0 495,356.5 498,360.8 501,364.7 504,368.3 507,371.6 510,374.4 513,376.9 516,378.9 519,380.5 522,381.6 525,382.3 528,382.5 531,382.2 534,381.5 537,380.3 540,378.7 543,376.6 546,374.2 549,371.3 552,368.0 555,364.3 558,360.4 561,356.1 564,351.5 567,346.8 570,341.8 573,336.6 576,331.3 579,325.9 582,320.5 585,315.0 588,309.6 591,304.2 594,298.9 597,293.8 600,288.9 603,284.1 606,279.7 609,275.5 612,271.6 615,268.0 618,264.9 621,262.1 624,259.7 627,257.8 630,256.3 633,255.2 636,254.6 639,254.5 642,254.9 645,255.7 648,256.9 651,258.6 654,260.8 657,263.3 660,266.3 663,269.7 666,273.4 669,277.4 672,281.7 675,286.3 678,291.1 681,296.2 684,301.4 687,306.7 690,312.1 693,317.5 696,323.0 699,328.4 702,333.8 705,339.0 708,344.1 711,349.0 714,353.7 717,358.1 720,362.3 723,366.1 726,369.6 729,372.7 732,375.4 735,377.7 738,379.5 741,381.0 744,381.9 747,382.4 750,382.5 753,382.0 756,381.1 759,379.8 762,378.0 765,375.8 768,373.1 771,370.1 774,366.7 777,362.9 780,358.8 783,354.5 786,349.8 789,344.9 792,339.9 795,334.7 798,329.3 801,323.9 804,318.5 807,313.0 810,307.6 813,302.3 816,297.0 819,292.0 822,287.1 825,282.5 828,278.1 831,274.0 834,270.2 837,266.8 840,263.8 843,261.2 846,259.0 849,257.2 852,255.8 855,255.0 858,254.5 861,254.6 864,255.1 867,256.1 870,257.5 873,259.4 876,261.7 879,264.4 882,267.5 885,271.0 888,274.8 891,278.9 894,283.4 897,288.1 900,293.0 903,298.1 906,303.3 909,308.7 912,314.1 915,319.5 918,325.0 921,330.4 924,335.7 927,340.9 930,345.9 933,350.8 936,355.4 939,359.7 942,363.7 945,367.4 945,367.4" stroke="#0ff" fill="none" stroke-width="1" shape-rendering="crispEdges"/><polyline points="60,414.0 63,411.9 66,409.1 69,405.7 72,401.6 75,396.9 78,391.7 81,385.9 84,379.6 87,372.9 90,365.8 93,358.4 96,350.6 99,342.6 102,334.5 105,326.2 108,317.9 111,309.6 114,301.3 117,293.2 120,285.2 123,277.5 126,270.1 129,263.0 132,256.4 135,250.2 138,244.5 141,239.3 144,234.7 147,230.7 150,227.4 153,224.7 156,222.7 159,221.4 162,220.8 165,221.0 168,221.8 171,223.3 174,225.5 177,228.4 180,232.0 183,236.2 186,241.0 189,246.3 192,252.2 195,258.6 198,265.3 201,272.5 204,280.0 207,287.8 210,295.9 213,304.0 216,312.3 219,320.7 222,329.0 225,337.2 228,345.3 231,353.2 234,360.9 237,368.2 240,375.2 243,381.8 246,387.9 249,393.5 252,398.6 255,403.1 258,406.9 261,410.1 264,412.7 267,414.6 270,415.7 273,416.2 276,415.9 279,415.0 282,413.3 285,411.0 288,408.0 291,404.3 294,400.0 297,395.1 300,389.6 303,383.7 306,377.2 309,370.4 312,363.1 315,355.6 318,347.7 321,339.7 324,331.5 327,323.2 330,314.8 333,306.5 336,298.3 339,290.2 342,282.4 345,274.7 348,267.5 351,260.5 354,254.1 357,248.0 360,242.5 363,237.6 366,233.2 369,229.4 372,226.3 375,223.9 378,222.2 381,221.1 384,220.8 387,221.2 390,222.3 393,224.1 396,226.5 399,229.7 402,233.5 405,237.9 408,242.9 411,248.4 414,254.5 417,261.0 420,267.9 423,275.2 426,282.9 429,290.8 432,298.8 435,307.1 438,315.4 441,323.7 444,332.0 447,340.2 450,348.2 453,356.1 456,363.6 459,370.8 462,377.7 465,384.1 468,390.0 471,395.4 474,400.3 477,404.5 480,408.2 483,411.2 486,413.5 489,415.1 492,416.0 495,416.2 498,415.7 501,414.5 504,412.5 507,409.9 510,406.7 513,402.8 516,398.3 519,393.2 522,387.5 525,381.4 528,374.8 531,367.8 534,360.4 537,352.7 540,344.8 543,336.7 546,328.4 549,320.1 552,311.8 555,303.5 558,295.3 561,287.3 564,279.5 567,272.0 570,264.9 573,258.1 576,251.8 579,245.9 582,240.6 585,235.9 588,231.7 591,228.2 594,225.4 597,223.2 600,221.7 603,220.9 606,220.9 609,221.5 612,222.8 615,224.9 618,227.6 621,231.0 624,235.0 627,239.6 630,244.8 633,250.6 636,256.8 639,263.5 642,270.6 645,278.0 648,285.7 651,293.7 654,301.8 657,310.1 660,318.4 663,326.8 666,335.0 669,343.2 672,351.1 675,358.9 678,366.3 681,373.4 684,380.1 687,386.3 690,392.1 693,397.3 696,401.9 699,405.9 702,409.3 705,412.1 708,414.1 711,415.5 714,416.1 717,416.1 720,415.3 723,413.8 726,411.7 729,408.8 732,405.3 735,401.2 738,396.4 741,391.1 744,385.3 747,379.0 750,372.2 753,365.1 756,357.6 759,349.8 762,341.8 765,333.7 768,325.4 771,317.0 774,308.7 777,300.5 780,292.4 783,284.4 786,276.7 789,269.4 792,262.4 795,255.7 798,249.6 801,243.9 804,238.8 807,234.3 810,230.4 813,227.1 816,224.5 819,222.6 822,221.3 825,220.8 828,221.0 831,221.9 834,223.5 837,225.8 840,228.8 843,232.4 846,236.6 849,241.5 852,246.9 855,252.8 858,259.2 861,266.0 864,273.3 867,280.8 870,288.6 873,296.7 876,304.9 879,313.2 882,321.5 885,329.8 888,338.0 891,346.1 894,354.0 897,361.6 900,368.9 903,375.9 906,382.4 909,388.5 912,394.0 915,399.0 918,403.5 921,407.3 924,410.4 927,412.9 930,414.7 933,415.8 936,416.2 939,415.9 942,414.9 945,413.1 945,413.1" stroke="#ff0" fill="none" stroke-width="1" shape-rendering="crispEdges"/><text x="58.5" y="195.3" fill="#0ff" text-anchor="end" >2</text><text x="947.5" y="195.3" fill="#ff0" text-anchor="start" >2</text><text x="58.5" y="220.3" fill="#0ff" text-anchor="end" >1.6</text><text x="947.5" y="220.3" fill="#ff0" text-anchor="start" >1.6</text><text x="58.5" y="245.3" fill="#0ff" text-anchor="end" >1.2</text><text x="947.5" y="245.3" fill="#ff0" text-anchor="start" >1.2</text><text x="58.5" y="271.3" fill="#0ff" text-anchor="end" >0.8</text><text x="947.5" y="271.3" fill="#ff0" text-anchor="start" >0.8</text><text x="58.5" y="296.3" fill="#0ff" text-anchor="end" >0.4</text><text x="947.5" y="296.3" fill="#ff0" text-anchor="start" >0.4</text><text x="58.5" y="322.3" fill="#0ff" text-anchor="end" >0</text><text x="947.5" y="322.3" fill="#ff0" text-anchor="start" >0</text><text x="58.5" y="347.3" fill="#0ff" text-anchor="end" >-0.4</text><text x="947.5" y="347.3" fill="#ff0" text-anchor="start" >-0.4</text><text x="58.5" y="372.3" fill="#0ff" text-anchor="end" >-0.8</text><text x="947.5" y="372.3" fill="#ff0" text-anchor="start" >-0.8</text><text x="58.5" y="398.3" fill="#0ff" text-anchor="end" >-1.2</text><text x="947.5" y="398.3" fill="#ff0" text-anchor="start" >-1.2</text><text x="58.5" y="423.3" fill="#0ff" text-anchor="end" >-1.6</text><text x="947.5" y="423.3" fill="#ff0" text-anchor="start" >-1.6</text><text x="58.5" y="449.3" fill="#0ff" text-anchor="end" >-2</text><text x="947.5" y="449.3" fill="#ff0" text-anchor="start" >-2</text><text x="60.5" y="458.5" fill="#fff" text-anchor="middle" >0.8582</text><text x="148.5" y="458.5" fill="#fff" text-anchor="middle" >0.8586</text><text x="237.5" y="458.5" fill="#fff" text-anchor="middle" >0.859</text><text x="325.5" y="458.5" fill="#fff" text-anchor="middle" >0.8594</text><text x="414.5" y="458.5" fill="#fff" text-anchor="middle" >0.8598</text><text x="502.5" y="458.5" fill="#fff" text-anchor="middle" >0.8602</text><text x="591.5" y="458.5" fill="#fff" text-anchor="middle" >0.8606</text><text x="679.5" y="458.5" fill="#fff" text-anchor="middle" >0.861</text><text x="768.5" y="458.5" fill="#fff" text-anchor="middle" >0.8614</text><text x="856.5" y="458.5" fill="#fff" text-anchor="middle" >0.8618</text><text x="945.5" y="458.5" fill="#fff" text-anchor="middle" >0.8622</text><text x="12.5" y="468" fill="#fff" text-anchor="start" textLength="71.500">+11:30:05:178</text><text x="502.3" y="468" fill="#fff" text-anchor="middle" >WAVEFORM</text><text x="953.5" y="467" fill="#fff" text-anchor="middle" >s</text><text x="24" y="177" fill="#0ff" text-anchor="start" textLength="36">A (mV)</text><text x="945.5" y="177" fill="#ff0" text-anchor="start" >B (V)</text><text x="248.5" y="165" fill="#0ff" text-anchor="start" >A: Max=</text><text x="355.7" y="165" fill="#0ff" text-anchor="end" >1.01084</text><text x="377.5" y="165" fill="#0ff" text-anchor="end" >mV</text><text x="383" y="165" fill="#0ff" text-anchor="start" >Min=</text><text x="474" y="165" fill="#0ff" text-anchor="end" >-1.01409</text><text x="495.5" y="165" fill="#0ff" text-anchor="end" >mV</text><text x="501.5" y="165" fill="#0ff" text-anchor="start" >Mean=</text><text x="606.5" y="165" fill="#0ff" text-anchor="end" >0</text><text x="628.5" y="165" fill="#0ff" text-anchor="end" >nV</text><text x="634.5" y="165" fill="#0ff" text-anchor="start" >RMS=</text><text x="735.5" y="165" fill="#0ff" text-anchor="end" >699.882</text><text x="757.5" y="165" fill="#0ff" text-anchor="end" >µV</text><text x="248.5" y="177" fill="#ff0" text-anchor="start" >B: Max=</text><text x="355.7" y="177" fill="#ff0" text-anchor="end" >1.5358595</text><text x="377.5" y="177" fill="#ff0" text-anchor="end" >V</text><text x="383" y="177" fill="#ff0" text-anchor="start" >Min=</text><text x="474" y="177" fill="#ff0" text-anchor="end" >-1.5362448</text><text x="495.5" y="177" fill="#ff0" text-anchor="end" >V</text><text x="501.5" y="177" fill="#ff0" text-anchor="start" >Mean=</text><text x="606.5" y="177" fill="#ff0" text-anchor="end" >0.00</text><text x="628.5" y="177" fill="#ff0" text-anchor="end" >µV</text><text x="634.5" y="177" fill="#ff0" text-anchor="start" >RMS=</text><text x="735.5" y="177" fill="#ff0" text-anchor="end" >1.08572980</text><text x="757.5" y="177" fill="#ff0" text-anchor="end" >V</text><path d="M99 169.500H115M105.5 167V173M108.5 167V173M104.5 166l1 1M109.5 166l-1 1" stroke="#0ff" fill="none" shape-rendering="crispEdges"/><path d="M881 169.500H897M887.5 167V173M890.5 167V173M886.5 166l1 1M891.5 166l-1 1" stroke="#ff0" fill="none" shape-rendering="crispEdges"/><path d="M60.500 318V307M58 310l2.500-3l2.500 3M60 318.500h4" stroke="#0ff" fill="none" shape-rendering="crispEdges"/><text x="935" y="206" fill="#fff" text-anchor="middle" font-size="15" textLength="19" lengthAdjust="spacingAndGlyphs">MI</text><path d="M925 196.500h20M925 198.500h20M925 200.500h20" stroke="#000" shape-rendering="crispEdges"/></svg>
<div class="a " style="left:2px;top:502px;width:1411px;height:553px;box-sizing:border-box;border:1px solid #2a2f38;border-radius:7px 7px 0 0;background:linear-gradient(#93b0d0 1px,#9db8d7 7px,#a3bedb 14px,#adc7e3 22px,#b5ceea 29px,#b9d2ec 32px,#b9d1ea 100%);box-shadow:inset -1px -1px 0 #2fdcf2,inset 0 0 0 1px rgba(255,255,255,.85)"></div><svg class="a" style="left:12px;top:514px" width="16" height="16" viewBox="0 0 16 16" shape-rendering="crispEdges"><rect width="16" height="16" fill="#00f"/><path d="M1.500 1v14M4.500 5v10M7.500 8v7M10.500 10v5M13.500 12v3M0 15.500h16" stroke="#ff0" fill="none"/></svg><span class="t " style="left:32px;top:516px;font-size:13px;color:#000;">Spectrum Analyzer</span><div class="a " style="left:1291px;top:512px;width:36px;height:20px;background:linear-gradient(#c5d7ec 0%,#b9cde6 45%,#9db8d8 50%,#a9c2e0 100%);border:1px solid #6f83a8;border-radius:3px;box-sizing:border-box;box-shadow:inset 0 0 0 1px rgba(255,255,255,.45)"></div><div class="a " style="left:1329px;top:512px;width:36px;height:20px;background:linear-gradient(#c5d7ec 0%,#b9cde6 45%,#9db8d8 50%,#a9c2e0 100%);border:1px solid #6f83a8;border-radius:3px;box-sizing:border-box;box-shadow:inset 0 0 0 1px rgba(255,255,255,.45)"></div><div class="a " style="left:1367px;top:512px;width:36px;height:20px;background:linear-gradient(#e9a99b 0%,#d9897a 45%,#c4452c 50%,#c95a3e 100%);border:1px solid #5a1e28;border-radius:3px;box-sizing:border-box;box-shadow:inset 0 0 0 1px rgba(255,255,255,.45)"></div><svg class="a" style="left:1291px;top:512px" width="112" height="20" viewBox="0 0 112 20"><rect x="11.500" y="10.500" width="11" height="4" rx="1" fill="#fff" stroke="#4a5266" stroke-width="1"/><rect x="49.500" y="4.500" width="11" height="10" rx="1" fill="#fff" stroke="#4a5266" stroke-width="1"/><rect x="53.500" y="8.500" width="3" height="2" fill="#a9bbd6" stroke="#4a5266" stroke-width="1"/><path d="M87.500 4.500h4l2.500 3l2.500-3h4l-4.500 5l4.500 5h-4l-2.500-3l-2.500 3h-4l4.500-5z" fill="#fff" stroke="#4a5266" stroke-width="1" stroke-linejoin="round"/></svg><div class="a " style="left:10px;top:535px;width:1395px;height:511px;box-sizing:border-box;border:2px solid;border-color:#7f8a99 #fff #fff #7f8a99;background:#000"></div><div class="a " style="left:12px;top:537px;width:16px;height:507px;background:#f5f5f5"></div><div class="a " style="left:12px;top:537px;width:16px;height:18px;background:#f0f0f0;border:1px solid;border-color:#fff #808080 #808080 #fff;box-sizing:border-box;box-shadow:inset -1px -1px 0 #c8c8c8"><svg class="a" style="left:4px;top:6px" width="7" height="4" viewBox="0 0 7 4"><path d="M0 4h7L3.500 0z" fill="#000"/></svg></div><div class="a " style="left:12px;top:1026px;width:16px;height:18px;background:#f0f0f0;border:1px solid;border-color:#fff #808080 #808080 #fff;box-sizing:border-box;box-shadow:inset -1px -1px 0 #c8c8c8"><svg class="a" style="left:4px;top:6px" width="7" height="4" viewBox="0 0 7 4"><path d="M0 0h7L3.500 4z" fill="#000"/></svg></div><div class="a " style="left:12px;top:759px;width:16px;height:18px;background:#f0f0f0;border:1px solid;border-color:#fff #808080 #808080 #fff;box-sizing:border-box;box-shadow:inset -1px -1px 0 #c8c8c8"></div><div class="a " style="left:1387px;top:537px;width:16px;height:507px;background:#f5f5f5"></div><div class="a " style="left:1387px;top:537px;width:16px;height:18px;background:#f0f0f0;border:1px solid;border-color:#fff #808080 #808080 #fff;box-sizing:border-box;box-shadow:inset -1px -1px 0 #c8c8c8"><svg class="a" style="left:4px;top:6px" width="7" height="4" viewBox="0 0 7 4"><path d="M0 4h7L3.500 0z" fill="#000"/></svg></div><div class="a " style="left:1387px;top:1026px;width:16px;height:18px;background:#f0f0f0;border:1px solid;border-color:#fff #808080 #808080 #fff;box-sizing:border-box;box-shadow:inset -1px -1px 0 #c8c8c8"><svg class="a" style="left:4px;top:6px" width="7" height="4" viewBox="0 0 7 4"><path d="M0 0h7L3.500 4z" fill="#000"/></svg></div><div class="a " style="left:1387px;top:782px;width:16px;height:19px;background:#f0f0f0;border:1px solid;border-color:#fff #808080 #808080 #fff;box-sizing:border-box;box-shadow:inset -1px -1px 0 #c8c8c8"></div><svg class="a" style="left:28px;top:537px" width="1359" height="507" viewBox="28 537 1359 507" font-family="Liberation Sans,sans-serif" font-weight="bold" font-size="10.67"><g shape-rendering="crispEdges" stroke="#505050" fill="none"><rect x="76.5" y="573.5" width="1263" height="444"/><path d="M148.5 574V1017M199.5 574V1017M239.5 574V1017M272.5 574V1017M299.5 574V1017M323.5 574V1017M344.5 574V1017M363.5 574V1017M486.5 574V1017M558.5 574V1017M610.5 574V1017M649.5 574V1017M682.5 574V1017M709.5 574V1017M733.5 574V1017M754.5 574V1017M773.5 574V1017M896.5 574V1017M969.5 574V1017M1020.5 574V1017M1060.5 574V1017M1092.5 574V1017M1120.5 574V1017M1143.5 574V1017M1164.5 574V1017M1183.5 574V1017M1307.5 574V1017M77 617.5H1339M77 661.5H1339M77 706.5H1339M77 750.5H1339M77 795.5H1339M77 839.5H1339M77 883.5H1339M77 928.5H1339M77 972.5H1339" stroke-dasharray="3 3"/></g><path d="M77 823.5H1307" stroke="#ff0" stroke-dasharray="3 3" shape-rendering="crispEdges"/><path d="M77 835.5H1307" stroke="#0ff" stroke-dasharray="3 3" shape-rendering="crispEdges"/><path d="M77.8 959.3L81 959.1L84.1 959.9L87.2 960.9L90.3 961.2L93.3 960.1L96.2 958.3L99.1 957L101.9 956.7L104.8 957.5L107.5 959.2L110.2 961.2L112.9 963.2L115.6 964.4L118.2 964.4L120.7 963.2L123.2 961.5L125.7 960.4L128.2 960.4L130.6 960.6L133 960.5L135.4 960.2L137.7 960.1L140 960.1L142.3 959.9L144.5 959.5L146.7 959.6L148.9 960.2L151.1 961.6L153.2 963.7L155.3 965.1L157.4 965L159.4 963.9L161.5 962.9L163.5 962.6L165.5 962.8L167.5 963.4L169.4 963.5L171.3 962.7L173.2 961.7L175.1 960.8L177 959.8L178.8 958.8L180.7 958.5L182.5 959.5L184.3 960.6L186 960.9L187.8 960.9L189.5 961L191.2 961.9L192.9 964L194.6 966.5L196.3 968.3L198 968.2L199.6 966.7L201.2 965.3L202.8 965.1L204.4 966.2L206 968.2L207.6 970.1L209.1 971.3L210.7 971.6L212.2 971.3L213.7 970L215.2 968L216.7 966.7L218.2 966.8L219.7 968.4L221.1 970.6L222.6 971.9L224 971.2L225.4 969.1L226.8 966.4L228.2 963.9L229.6 961.9L231 953.6L232.4 927.8L233.7 902L235.1 881.1L236.4 865.4L237.7 854.9L239 849.5L240.3 849.3L241.6 854.4L242.9 864.5L244.2 879.9L245.5 900.4L246.7 926L248 953L249.2 962.4L250.4 963.2L251.7 964.6L252.9 966.3L254.1 966.8L255.3 965.2L256.5 962.3L257.7 960.1L258.8 959.9L260 961.3L261.2 963.1L262.3 965L263.5 966.5L264.6 967L265.7 966.4L266.9 965.5L268 964.8L269.1 964.3L270.2 963.5L271.3 963.3L272.4 964.4L273.5 966.3L274.5 967.4L275.6 966.2L276.7 963.9L277.7 962.6L278.8 963.5L279.8 966.4L280.9 969.6L281.9 970.8L282.9 969.2L283.9 966.3L285 964.2L286 964.3L287 966.3L288 968.8L289 969.8L289.9 969.1L290.9 967.7L291.9 966L292.9 964.8L293.8 964.7L294.8 965.5L295.8 966.1L296.7 965.3L297.7 963.4L298.6 962.1L299.5 962.4L300.5 964.5L301.4 967.1L302.3 968.4L303.2 968.1L304.1 967.4L305.5 967.7V968.9L306.8 969.6L307.7 968.6L308.6 966.9L309.5 966.1L310.4 966.7L311.3 967.8L312.5 968.4L313.9 967.1L314.7 966.9L315.6 967.4L316.4 967.3L317.3 965.6L318.5 963.5V962.6L319.8 963.5L320.6 966.3L321.4 970.2L322.3 973.4L323.5 973.9V971.6L324.7 968.2L325.5 965.3L326.3 963.7L327.5 963.6V964.6L328.7 965.9L329.5 967.1L330.3 967.9L331.5 968.7L332.6 968.6L333.4 967L334.5 965.2V964.4L335.7 964.9L336.5 965.6L337.5 965.6L338.7 965.4L339.5 967L340.5 969.2V970.8L341.7 970.9L342.4 969.5L343.5 967.2V965.3L344.6 964.9L345.3 966.2L346.5 968.5V970.2L347.5 970L348.5 968.2V966.4L349.6 965.3L350.3 965.3L351.5 966.6V967.9L352.4 968.1L353.5 967.8V968.6L354.5 970.1L355.5 970.3V968.6L356.5 966.4L357.5 965.6V966.4L358.5 967.4L359.5 965.7V951.4L360.5 929.6L361.5 911.3V898L362.5 889.9L363.5 887V889.2L364.5 896.6L365.5 909.2V926.9L366.4 948.5L367.5 964.1V965.3L368.5 964.2V963.3L369.6 962.9L370.5 963V963.5L371.4 964.4L372.5 965.1L373.5 963.6V961.9L374.5 960.8L375.5 960.9V962L376.5 963.6V965.3L377.6 966.2L378.5 964.8V962.7L379.5 962.3V963.8L380.5 965.2L381.5 966V967.4L382.5 968.6V967.7L383.5 965.3L384.5 963.7L385.5 962.3V960.8L386.5 960.5V961.7L387.5 962.5L388.5 962V960.9L389.5 960.5V961.3L390.5 963.3V965.7L391.5 967.9L392.5 968.7V967.4L393.5 965.2V964.4L394.5 965.7V967.5L395.5 967.8V967.2L396.5 967.7V969.8L397.5 972.2L398.5 973.1V972L399.5 970V968.5L400.5 967.4V966.2L401.5 964.6V962.9L402.5 962.4V963.3L403.5 963.8L404.5 963.6L405.5 963.4V962.6L406.5 962.4V962.9L407.5 963.9V965L408.5 965.7L409.5 966.4L410.5 966V963.9L411.5 960.8V959L412.5 960.5V963.4L413.5 963.4V961.1L414.5 960.1V961.6L415.5 964V964.7L416.5 964.8V965.9L417.5 967.2L418.5 965.4V964.6L419.5 965L420.5 965V963.9L421.5 963.3L422.5 964.4V965.1L423.5 964.4V962.5L424.5 962.9L425.5 962.8V961.2L426.5 960V960.8L427.5 962.6V964.1L428.5 964.8V961.6L429.5 959.8L430.5 960.3L431.5 960.8V962.5L432.5 964.7V965.4V963.7L433.5 955.8V939.4L434.5 923.9V913.1L435.5 907.4V906.9L436.5 911.6V936L437.5 953V961.6L438.5 962.1V962.9L439.5 965.2V969L440.5 969.1L441.5 967.9L442.5 969V972.5L443.5 971.3V968.4L444.5 966.1V965.2L445.5 965.3V964.7L446.5 963.9V963.1L447.5 962.7L448.5 963V966.9L449.5 967.9L450.5 968.4V966.9L451.5 964.8V964.2L452.5 965.4V967.3L453.5 966.9V965.1L454.5 962V958.5L455.5 959.7V961.2L456.5 962V963.1L457.5 964.8V967L458.5 967V960.5L459.5 958.9V960.3L460.5 961.3L461.5 961.4V960.6L462.5 961V962.8L463.5 965.1V967L464.5 966.5V963.1L465.5 964.3V966V964.7L466.5 961.5V958.7L467.5 959.3V961.2L468.5 963.1V960.8L469.5 959.4V961.2L470.5 963.6V965.9L471.5 966.3L472.5 966.1V964.1L473.5 965V965.9V964.9L474.5 963.5V965L475.5 966.4V963.8L476.5 961.9V960.9L477.5 961.5V968L478.5 971.3V972.3V970.1L479.5 966V962.8L480.5 963.7V966.8L481.5 967.3L482.5 967.5V968.3L483.5 966.1V961.4L484.5 961.9V963.7V961.8L485.5 950.9V921.7L486.5 913.3V910.1V911.9L487.5 918.9V946L488.5 957.9V962.7L489.5 964.3V968.3L490.5 968.4V965.6L491.5 963.6V962.6V963.2L492.5 965.4V967.7L493.5 965.9V961.9L494.5 962.7V964.6L495.5 966.3V968.1L496.5 966.9V962.8L497.5 961.5V965.2L498.5 966.7V963.8L499.5 964.8V965.8L500.5 966.7V969.2L501.5 967.5V963.7L502.5 964.3V965.9L503.5 965.3V966.1L504.5 967.4V962.3L505.5 962.3V966.1L506.5 967.4V968.2L507.5 968.6V967.1L508.5 966V969.8L509.5 969.3L510.5 968.6V961.7L511.5 962.1V962.9L512.5 963V967.8L513.5 968.8V972.5L514.5 974.6V969L515.5 964.7V962.9V964.9L516.5 968.3V970.3V968.4L517.5 965.5V963.4V963.9L518.5 964.5V965.9L519.5 966.3V964L520.5 965.2L521.5 964.3V964.9L522.5 965.5V962.8L523.5 964.8V970.6L524.5 970V962.9L525.5 945.8V897.5L526.5 891.4V890.6V894.9L527.5 904.4V958.7L528.5 967.3V969.2V968L529.5 966V962.4L530.5 964.3V971.5L531.5 970.6V967.7L532.5 968.1V966.3L533.5 964.9V962.3V963.1L534.5 964.4V968.4L535.5 971.8V964.8L536.5 962.3V967.6L537.5 969.3V964.5L538.5 963.3V970.9L539.5 973.3V972V975V972L540.5 968V963.8V965L541.5 967.3V968.8V964.6L542.5 966.3V973.3L543.5 972V966.8L544.5 966.6V960.5L545.5 962.2V973.3L546.5 972V964.4L547.5 963.3V966.6L548.5 965.9V964L549.5 963V962.3V963.4L550.5 965.2V965.9V963.8L551.5 964V971V969.1L552.5 967.7V964.5L553.5 963.4V968.3L554.5 970V963.1L555.5 965V969.6L556.5 969.9V974.8L557.5 975.6V961.5L558.5 946V920.5L559.5 922V965L560.5 968.4V969.4V967L561.5 965.1V964L562.5 963.3V972L563.5 973.6V967.9L564.5 965V962.3V962.9L565.5 963.4V968.4L566.5 966.9V964.7V965.7L567.5 967.3V972.5L568.5 974.3V965L569.5 962.7V971.2L570.5 972.3V975.6L571.5 976.2V969.2L572.5 966V964.2V968.6L573.5 967.7V966.5L574.5 966.6V961.4V962.1L575.5 965.8V973.4V971.4L576.5 970.2V969.1V971.6V969.1L577.5 969V965.9V967.4L578.5 971.1V978.3L579.5 976.7V969L580.5 968V970.7L581.5 969V965.7V967.9L582.5 970.2V970.8V967.5L583.5 969.4V973.7L584.5 973.8V970.5V978.5V970.5L585.5 965.4V913.6L586.5 902.1V894.5V921.9L587.5 941V972.9L588.5 971.3V967.7L589.5 967.8V964.4L590.5 964.6V969.7L591.5 967.3V971.3V961.8V971.3L592.5 974.6V975.4V965.8L593.5 967.4V968.1V964.5L594.5 965.7V974.9V967.7L595.5 965.8V974.3V972.6L596.5 968.9V966.2V969.1L597.5 970V965.3L598.5 962.2V961.6V966.6V965.9L599.5 965.8V973.4L600.5 973.1V970.8V973.1L601.5 969.9V971.2V966.2V970.8L602.5 969.1V969.9V966.6L603.5 966.1V974V971.4L604.5 968.1V966.9V970.8L605.5 972.2V973.7V973.1L606.5 971.5V974.3V965.1L607.5 962.2V972V971.1L608.5 971.6V973.4V966.3L609.5 970.3V974.8V939.7L610.5 935.9V969.8L611.5 968.7V965V966L612.5 966.1V971.6L613.5 975.1V975.9V962.5V965.5L614.5 966.7V963V965L615.5 968V969.2V966.1V967.2L616.5 967.8V958.9V967.3L617.5 968.3V972.5L618.5 973.7V975V970.5L619.5 969.5V968.5V976.1V968.5L620.5 968.9V970.4V965.7V966.4L621.5 968V977V969.1L622.5 965.8V972.3V968.7L623.5 963.8V960.5V970.7V969.1L624.5 968.8V970.2V965.8V970.2L625.5 970.4V961.9V962.4L626.5 964.4V974.8V969.6L627.5 968.1V977.4V971.4L628.5 967.1V964.9V973.7L629.5 975.9V969.1V971.9L630.5 968.7V917.1L631.5 910.3V908.8V969.6L632.5 973.8V968.8V970.3L633.5 970.1V965.9V969.5L634.5 970.2V969.6V976.8L635.5 972.9V966.8V967.6L636.5 966.1V980.5V976.3L637.5 973.3V967.3L638.5 965.6V967.7V962.3V967.7L639.5 976.6V982.3V968.2L640.5 968V967.4V969V968.4L641.5 967.3V976V973.8L642.5 973.6V964.6V971.2L643.5 972.3V970.4V974.6L644.5 973.5V967.5V972.5L645.5 970.1V968V976.8L646.5 978.7V980.4V969.5V970.1L647.5 970.3V970.9V967.1V970.9L648.5 973V973.7V971.9L649.5 969.4V944.5V945.5L650.5 951.2V978V975.8L651.5 976.6V971.2V972.8L652.5 971.5V958.6V962.9L653.5 962.9V974.5V968.6L654.5 965.8V971.5V959V971.5L655.5 972.2V971.4V978.9V973.3L656.5 970.3V966.5V968.4L657.5 967.3V965.3V972.2V966.8L658.5 968.9V980.3V971.7L659.5 969.4V982.2V977.5L660.5 977.8V979V970.6V977L661.5 975.1V977.8V961.2L662.5 959.4V974.6L663.5 973.9V974.8V968.5V971.5L664.5 971.3V970.5V974.5V973.6L665.5 970.8V963.2V964.1L666.5 965.4V915.4L667.5 918.7V978.6V973.3L668.5 973.8V978.4V975.9L669.5 973.2V966.7V969.6L670.5 971.8V978V973.3L671.5 974V966.8V973.6L672.5 974.3V964.5V970.6L673.5 972.1V966.5V979.6L674.5 979.1V973.5L675.5 974.1V976.1V971.8L676.5 970.7V967.2V977.2V967.2L677.5 966.1V973.2V968.3L678.5 968V966.5V977.2V966.5L679.5 966.1V963.6V970.6V964.8L680.5 967.2V972.1V970.9L681.5 968.1V966.8V977.4V974.7L682.5 966.2V977.8V940V973.9L683.5 968.3V966.5V974.9V971.2L684.5 968.3V967.5V980.2V974.9L685.5 972.5V968.7V970.7L686.5 969.8V961.2V969.9L687.5 971.6V980V979L688.5 976.1V966.6V971L689.5 971.7V968.1V978.5V968.1L690.5 968.7V973.8V970.1L691.5 971.2V977.1V973.9L692.5 976.2V975.6V980.8L693.5 980.3V969.9V972.3L694.5 971.1V966.7V975.9L695.5 976.5V977.7V963.6V970.9L696.5 973.8V907.4V931.6L697.5 949.4V979.2V978.5L698.5 976.9V977.4V971V972.3L699.5 974V965.5L700.5 964.7V974.6L701.5 975.5V978.9V971.3V977.6L702.5 974.8V976.8V965.4V976L703.5 979.4V982.1V964.8V967.1L704.5 966.2V976.7V973.1L705.5 972V971.3V979.4V974.7L706.5 974.2V977.6V969.1V970.4L707.5 970.4V973.5V967.1V969.4L708.5 969.7V978.6V976.1L709.5 975.3V954.8V959.1L710.5 964.2V963.7V967.8L711.5 969.1V976.1V973.1L712.5 973.7V974.3V964.7V966.2L713.5 966.1V979.7V976L714.5 975.5V972.2V980.2V972.2L715.5 968.5V973.4V972.8L716.5 974.9V977.9V976L717.5 975.1V967.4V972.7L718.5 970.5V964.9V976.6V972.3L719.5 970.5V967.7V975.2V971.8L720.5 968.5V967.4V974.7V968.3L721.5 970.6V981.3V917.7L722.5 910V907.4V971.1L723.5 969.5V968.8V978.4V969.6L724.5 970.1V984.2V980.2L725.5 981.9V971.1L726.5 972.3V967.6V977.2V967.6L727.5 966.9V974.6V971L728.5 971V976.6V964.6V969.4L729.5 967.2V972.9L730.5 971.2V966V981.3V978.4L731.5 971.6V968.2V975.6L732.5 975.3V964.7V968.9L733.5 973.5V977.3V945.3V968.2L734.5 967.4V965.3V975.4L735.5 977V980.4V969.7V974.8L736.5 975.1V971.8V981.1V971.8L737.5 969.2V968V981.8V970.3L738.5 973.2V972.1V981V972.1L739.5 971.1V967.3V985V979.8L740.5 975.4V966V973.4L741.5 975.1V972.9V985.7L742.5 987V969.8L743.5 970.3V975V972.5L744.5 968.1V972.6V908.7V972.3L745.5 973.8V973V978.1V974.8L746.5 974.4V976.1V964.5L747.5 965.8V983V975.3L748.5 976.2V978.9V973.2L749.5 974V972.5V982.4V979.7L750.5 975.9V974.6V977.9V975.7L751.5 973.9V964.2V972.1L752.5 978.5V980.3V973.9V977.1L753.5 976.2V980.3V971.6V975.3L754.5 974.9V977.5V950.5V977.5L755.5 977.9V968.2V974L756.5 975.3V978.5V969.8V975L757.5 977.2V982.2V968.7V969.7L758.5 973.4V974.9V966.2V971.2L759.5 974.6V972V980.9V979.4L760.5 982V985.8V970.9V974.3L761.5 968.4V966.5V978.2V971.7L762.5 972.4V978.7V972.9L763.5 971.1V981V949.8L764.5 931.8V906.5V975.8V965.5L765.5 962.8V977V974.5L766.5 977.5V978.7V971.4V976.3L767.5 975.1V978V970.6V974.8L768.5 974.6V979.8V967.9V975.4L769.5 974.9V972.9V979.2V975.5L770.5 970.9V973.3V965.3V972.6L771.5 973V970.1V977.9V971.8L772.5 970.3V969.4V982.9L773.5 980.4V853.4V912.2L774.5 939V982.1V978.9L775.5 978.1V963.6V974.2L776.5 972.1V966V980.7V967.2L777.5 969.8V967.6V975.9V969.6L778.5 972.8V978.8V963.2V966.4L779.5 971.6V969.7V981.7V972L780.5 975.7V978.1V963.1V977.4L781.5 980.4V985.3V920.4L782.5 916.8V976.3V974.7L783.5 973.3V978.6V966.4V978.6L784.5 977.8V976.4V984.4V980.6L785.5 976.7V980.1V966.7V970.8L786.5 973.2V988.6V976.2L787.5 977.8V984.1V970.6V974.8L788.5 973.2V970.4V979.5L789.5 981V984.3V968.5V972L790.5 973.5V982.5V953.2V975.7L791.5 973.2V972.2V980.1V977.2L792.5 976.2V978.5V970V976.9L793.5 977.2V974.2V982.9L794.5 982.8V971.2V976.5L795.5 976.1V979V967.1V976.4L796.5 978.1V979.7V974.5L797.5 975.7V980.4V967.1V974.7L798.5 971V975.7V931.1V966.8L799.5 966.8V983.5V975.6L800.5 973.8V982.6V978.5L801.5 975.8V984.1V966.5V982L802.5 980.7V969.9V976.3L803.5 976.7V980.1V966.6V969.8L804.5 973.8V970.1V979V970.1L805.5 969.6V982.2V971.5L806.5 971.9V966.6V981.2L807.5 980.7V972.4V973L808.5 968.9V964.6V983.8V974L809.5 974V968.4V982.8V975L810.5 969.2V964.9V978.1V968.7L811.5 970.3V979.6V977.9L812.5 977.3V985.7V941.7L813.5 927.2V913.4V983.1L814.5 986.1V986.6V973.4L815.5 973.7V970.6V981.5V971.3L816.5 971.9V969.1V977.3V970.8L817.5 969.8V980.3L818.5 979.8V982.8V970.2V971.4L819.5 968.3V967.4V978.2V974.2L820.5 974.9V983.5V979.4L821.5 981.6V985.4V972.3L822.5 973.4V979.4L823.5 982.9V972V977.6L824.5 977V986.2V979.7L825.5 977.5V978.3V970V975.9L826.5 974.9V980.2V929V945.7L827.5 960.4V990.4L828.5 988.3V969.3L829.5 970.5V963.4V985.7V974.2L830.5 974.2V983.1V982L831.5 984.4V972.8L832.5 971.9V983.5V974.2L833.5 974.4V968.4V980.5V977L834.5 978.6V980.6V970.2L835.5 966V980.1L836.5 978.1V979.8V971.9V979.3L837.5 982.2V985.1V975.2L838.5 975.1V970.1V985.4V979.5L839.5 978.9V984V952.5V974L840.5 972.3V971.2V982.3L841.5 984.9V970.5L842.5 973.8V979.3V967.7V978.1L843.5 979.9V982.5V969V978.2L844.5 979.2V984.5V968.5V978.8L845.5 976.7V972.1V984.1L846.5 984.5V966.8V975.9L847.5 976.7V972.1V982.8V979L848.5 980V983.4V968.6V974.2L849.5 974.8V971V980.3V971.2L850.5 971.9V970.1V986.5V984.7L851.5 983.7V927V974.9L852.5 976.1V983.4V976.9L853.5 974.8V970.8V988.5V970.8L854.5 973V985.6L855.5 987.3V971.4V978.7L856.5 977.5V983.4V970.2L857.5 970.2V987.6V978.7L858.5 981.5V989.1V972.3V978.7L859.5 973.7V968.3V985V974.3L860.5 973.1V966.3V985.6V983.3L861.5 982.4V986.4V970.9V974.8L862.5 980.2V983.8V935.2V972.1L863.5 972.7V980.9V978.5L864.5 983.4V985.7V974.5V982.2L865.5 979.7V971V976.8L866.5 975.3V968.1V985.1V973.8L867.5 975V972.4V984V979.1L868.5 979.8V971.9V977.8L869.5 975.9V972.6V989.7V978.3L870.5 977.6V985.7V968.2V985.7L871.5 984.3V970.1V980.5L872.5 980.7V982.3V952.8L873.5 947.2V946.3V983.4V979.9L874.5 979.6V984.5V974.2V978L875.5 979V971V988.1V972.3L876.5 972.4V969.6V984.5V973.8L877.5 976.5V973.4V987.6V976L878.5 975.3V972.2V985.9V975L879.5 975.1V984.7V977.9L880.5 977.7V971V990.2V971L881.5 971V985.8V983.4L882.5 980.8V989.5V945.3L883.5 949.1V987.1L884.5 987.4V970.1V976.5L885.5 975.6V970.3V986.3V979.6L886.5 976.5V972.3V985V974.5L887.5 973.6V984.6V975.6L888.5 971.9V984.4V983.7L889.5 981.2V984.5V968.2V982.3L890.5 983.1V986.5V973.4V984.4L891.5 981.8V985.6V975.4V979L892.5 978.8V984.3V944.1V971.6L893.5 971.9V987.3V976.4L894.5 973.9V986.7V983.5L895.5 983.3V986.3V974.6V983.1L896.5 980.1V987.5V972V976.1L897.5 978.6V973.4V987V975.6L898.5 976.5V985.6V967V977.9L899.5 979.8V987.3V969.9V972.2L900.5 975.4V994.7V986.4L901.5 984.7V987.7V950.6V979.8L902.5 976.6V971.3V987.3V981.1L903.5 978.1V973.4V985V973.8L904.5 975.7V970.9V986.6V974.2L905.5 978.4V972.8V986.5V978.2L906.5 977.9V970.3V987V983.2L907.5 982.3V985.6V975.7L908.5 973.5V969.4V984.1V981.7L909.5 982.8V983.5V952.6V972.1L910.5 971.7V970V989.4L911.5 992.3V971.1V985.4L912.5 986.7V969.4V980.4L913.5 980.4V983.3V975.4V982L914.5 987V973.1V982.1L915.5 982V983.8V970.5V977.2L916.5 979.1V974.6V985V984.3L917.5 985.4V954.6V976.8L918.5 977.3V971.6V989.6V981.2L919.5 977V968.8V987.8V981.7L920.5 983.7V985.4V974.8V977.7L921.5 980.4V985.2V974.4L922.5 971.5V986V979L923.5 978.5V974.1V984.2L924.5 982.3V986.4V971.1V983.7L925.5 982.5V957.2V976.4L926.5 977.9V973.1V983.2V981.8L927.5 980.8V982.2V970.8V979.5L928.5 978.8V976.9V986.6V983.1L929.5 983.5V984.7V969.8V978.3L930.5 982V977.1V987V981.9L931.5 983.7V974.3V979.9L932.5 983.7V990.4V958.9L933.5 960.1V983.8L934.5 982.8V986.1V971.2V983.7L935.5 981.5V987.8V969.8V986.4L936.5 985.8V986.7V971V980.8L937.5 981.5V987.4V974.5V981L938.5 982.6V987.8V975V976.1L939.5 977.7V973.8V988.4V980.6L940.5 980.8V986.6V960.6V979.7L941.5 975.2V972.3V986.8V982.5L942.5 979.3V976.6V991.4V980.4L943.5 980V986.1V973.4V976.7L944.5 976.7V991.1V976.4L945.5 976.4V975V985.1V980.2L946.5 981.4V975.2V989.2V978.1L947.5 978.4V976.6V990V976.6L948.5 980.4V973.5V988.1V981.8L949.5 980.5V986.8V973.9V978.4L950.5 975.9V972.6V986.2V973.6L951.5 973.8V970.7V992.1V970.7L952.5 969.5V990.5L953.5 986.2V960V982.7L954.5 977.6V975V985.3V984.5L955.5 986.6V988.1V973.6V986.1L956.5 989.5V995.6V976.2V990.7L957.5 988.7V989.3V972.6V982.2L958.5 982.3V975.7V989V976.6L959.5 976.1V974.8V988.5V976.4L960.5 978.4V975.9V994.1V986.4L961.5 981.5V983.4V970.7V977L962.5 975.6V973.6V992.9V974.3L963.5 974.7V971.5V991.9V976.2L964.5 975.9V973.8V992.4V980.3L965.5 978.4V971.9V995.3V981.1L966.5 978.4V963.2V994.7V983.1L967.5 981.9V974.5V989.5V981.9L968.5 982.9V989.4V973.3V987.1L969.5 986.2V973.5V980.5L970.5 980.5V974.1V987.6V978.7L971.5 981V973.9V991.6V981.1L972.5 982.2V977.9V989.2V984.5L973.5 980V969.3V992.6V989.7L974.5 991.5V974.7V987.2L975.5 985.4V988.8V974.4V977.8L976.5 975.2V984.1V976.3L977.5 979.5V992V964.4V983.6L978.5 981.3V973.5V995.6V978.8L979.5 973.7V973.1V988.1V987.1L980.5 988.4V976.1V978.7L981.5 977.7V971.4V991.4V985.4L982.5 985.2V991.2V976.2V978.6L983.5 980.3V975V991.3V981L984.5 982.7V991.4V971.3V986.3L985.5 984.1V977.8V994.2V982.4L986.5 983.5V992.6V973.5V980.4L987.5 979.4V970.2V993.6V982.1L988.5 980.2V974.9V990.2V984.9L989.5 988.5V989.7V975.3V984.4L990.5 983.6V989.4V972.1V985.9L991.5 985.4V987.8V975V983L992.5 982.2V991V973.2V985.7L993.5 985.4V990.6V977.1V981.3L994.5 978.6V974.7V993V981.9L995.5 983.1V974.3V993V986.9L996.5 986.7V993.1V974.7V981L997.5 980.6V974.9V994V978.5L998.5 983.1V991.1V971V980.8L999.5 983.1V988.2V974V983L1000.5 985.2V976.3V995.1V980.3L1001.5 979.4V972.8V991.7V982.3L1002.5 983.9V988V977V980.1L1003.5 981.2V978V990.3V978L1004.5 978.4V976.7V991.1V980.8L1005.5 979.1V975.6V989V979.8L1006.5 980V978.3V992.3V986.3L1007.5 988.5V992.2V971.7V979.2L1008.5 978.8V977.1V992.6V978.8L1009.5 977.6V994.7V983.4L1010.5 985V991.7V974.4V980.9L1011.5 979.3V977.2V990.2V987.4L1012.5 985.5V988.2V976.7V986.8L1013.5 984.2V988.1V975.6V981.5L1014.5 983.1V986.4V972.4V973.7L1015.5 976.6V990.6V980.7L1016.5 980.8V977V991.7V986.1L1017.5 986V993.5V974.3L1018.5 974.3V996.1V981.1L1019.5 982.6V977.9V992.5V988.3L1020.5 992.1V992.9V972V983L1021.5 983V991.5V974.2L1022.5 973.9V991.8L1023.5 988.5V992.9V971V987.9L1024.5 983.4V988.8V977.5L1025.5 977.5V976.6V990.3V981.6L1026.5 981.2V976.9V989.9V985.3L1027.5 983.3V989.4V975.4V984.7L1028.5 986.1V989.3V973.5V984.5L1029.5 985.7V993.8V976.8V981.2L1030.5 978.2V976.5V991.6V983.2L1031.5 981.6V974.6V992.6V977.3L1032.5 975.6V973.7V991.9V983.5L1033.5 984.6V990.7V978.1V980.9L1034.5 980.9V978.3V992.9V987.3L1035.5 986.5V993.4V975V983.2L1036.5 983V990.1V971.5V984L1037.5 983.1V977.5V996.4V978.1L1038.5 979.5V976.5V992.4V981.4L1039.5 981V974.4V995.9V981.2L1040.5 982.4V975V990.7V979.4L1041.5 980.7V975.5V993.2V981.3L1042.5 983.2V976.2V992V987.7L1043.5 988.2V992.2V982.5V986.6L1044.5 982.6V972.4V997.7L1045.5 998.1V977.8V986.8L1046.5 989V993.3V972.6L1047.5 974.5V996.8V985.2L1048.5 985.9V978.8V999.6V982.5L1049.5 985.3V990.6V975.3V981.8L1050.5 980.1V974.8V994.1V980.2L1051.5 982.8V978.4V999.2V983.5L1052.5 985.2V994.7V975.7V979.2L1053.5 979.6V975V992.5V984.6L1054.5 985.2V990.8V976.1V990.8L1055.5 991.9V974.8V984.6L1056.5 988.4V989.9V970.9V983.3L1057.5 980V974.4V1001V975.6L1058.5 973.3V991.9V985.5L1059.5 986V994.7V976V981.1L1060.5 984.9V977.6V997.4V986.2L1061.5 988.7V992.4V975.8V986.9L1062.5 986.4V993.2V974.4V981.7L1063.5 982.2V976V992.8V989.4L1064.5 990.5V993.1V971.9V983.8L1065.5 984.8V977.4V996.4V988.2L1066.5 987.8V993.8V979.4V986.7L1067.5 987.3V992.4V977.3V984.6L1068.5 983.5V979.8V998.9V981.2L1069.5 985.2V993V974.5V981.1L1070.5 981.8V976.7V995.4V980.7L1071.5 982.9V990.1V975.2V981.3L1072.5 982.2V975.3V991.2V982.8L1073.5 984.1V981.4V996.8V986L1074.5 984.2V975.2V998.2V982.1L1075.5 981.9V975.2V993.2V977.5L1076.5 978.3V973.1V991.3V982.5L1077.5 985.4V979.1V998.4V989.4L1078.5 985.8V979V993.6V985.3L1079.5 986.5V994.6V975V982L1080.5 985.9V992.3V978.3L1081.5 977.5V995.5V994.9L1082.5 993.5V995.6V972.6V978.9L1083.5 982.5V977.9V994.6V981.4L1084.5 981.1V977.1V993.6V987.3L1085.5 989.4V994V979.8V981L1086.5 977V974.8V995V985L1087.5 984.8V977.3V997.7V983.2L1088.5 984.3V980.1V995.6V987.5L1089.5 988.5V994.8V980.2V987.2L1090.5 984.4V994V974.4V987.9L1091.5 986.1V993.1V977.8V983.3L1092.5 982.5V979.2V993.9V979.2L1093.5 977.4V993.7V981.9L1094.5 985.2V977.1V994V990.4L1095.5 990V996V978.3V994.7L1096.5 994.1V998.7V974.9V990.1L1097.5 991.5V1001.3V976.6V1001.3L1098.5 999.4V975.9V994L1099.5 993.7V975.9V987L1100.5 987.8V993.3V976.3V977.1L1101.5 981.4V975.5V993.8V978.8L1102.5 981.5V976.5V992.3V990.4L1103.5 988.7V980.6V997V989.8L1104.5 990.1V997.7V978V984.5L1105.5 981.4V977.7V996.2V982.7L1106.5 985.4V994.5V974.5V983.5L1107.5 981.7V976.6V995.7V983.1L1108.5 981.6V976.6V996.3V989L1109.5 990.8V993.9V976.3V983.3L1110.5 987.8V993.5V977.5V984.9L1111.5 984.4V978V994.9V985.9L1112.5 987.4V977.9V997.3V984.6L1113.5 987.8V996.1V979.1V987.4L1114.5 988V994.7V980.3V987.6L1115.5 987.2V978.5V1002.4V981.5L1116.5 983.4V980V995.8V980L1117.5 979.4V978V1001.2V987.9L1118.5 988.2V995.2V976.7V980.8L1119.5 981.5V979.2V995.3V986.6L1120.5 985.6V979V1003.3V986.4L1121.5 986.4V995V976.8V980.1L1122.5 981.7V996.5V991.9L1123.5 991.5V997.6V977.5V983.5L1124.5 982.2V979V998.1V986.8L1125.5 988.1V977.6V1004.8V990.8L1126.5 990.1V998.3V977V990L1127.5 988.4V998.7V977V989.4L1128.5 988.1V980.1V1001.3V988.4L1129.5 990.9V1000.4V978.1V987.7L1130.5 987.6V979.8V1001.3V984.9L1131.5 983.4V981V995V981L1132.5 983.7V979.4V998V992.2L1133.5 991.1V997.9V979.2V982.3L1134.5 983.9V976.9V998.8V984.5L1135.5 984.5V977.3V999.9V983.2L1136.5 985.3V978.3V997V990.3L1137.5 989.6V997.2V978V983.9L1138.5 984.2V978V996.9V986.9L1139.5 987.1V981V997.5V986.9L1140.5 988.5V997.4V978.3V987.3L1141.5 988.8V996.4V980.8V985.4L1142.5 985V979.3V1000.6V983.3L1143.5 982.8V981.4V997L1144.5 996.8V997.9V977.1V993L1145.5 994.8V996.1V978.9V989.3L1146.5 988.6V997.9V977.5V993.5L1147.5 991.8V998V977.8V984.1L1148.5 983.6V976.1V997.4V985.2L1149.5 985.4V981.9V998.7L1150.5 999.1V978.2V997.4L1151.5 991.2V996.4V979.9V995.4L1152.5 995.2V997.8V980.1L1153.5 980.3V979.6V999V989.6L1154.5 986.8V976.7V1000.3V984.9L1155.5 988.2V979.7V998V987.1L1156.5 988.4V996.9V976V994.5L1157.5 993.7V999.5V977.6V989.5L1158.5 990.2V1000.8V977.9V993.4L1159.5 991V1001.8V979.3V992.7L1160.5 991.3V997.2V978.7V987.8L1161.5 988.3V998V977.3V995.8L1162.5 989.9V998.8V980V990.3L1163.5 989.9V997.7V981.4V991.2L1164.5 990V996.5V977.2L1165.5 977.4V974.2V999.7V991.2L1166.5 990.2V1001.9V976.4V992.1L1167.5 991.7V1001.3V979V985.7L1168.5 984.5V978.3V999.7V990.8L1169.5 988.8V996.4V979.8V985.8L1170.5 985.2V981.3V998.4V991.9L1171.5 993.7V1001.9V978.4V985.7L1172.5 986.6V975.8V1000.4V991.2L1173.5 989V996.9V975.1V989.4L1174.5 988.7V979.6V999.1V990.5L1175.5 992.3V998.8V977.8V985.4L1176.5 987.7V978V1001.3V987.7L1177.5 985.3V980.9V999.1V989.5L1178.5 987.8V982.2V998V992.1L1179.5 994V998.4V980.8V995.5L1180.5 998.6V1002.7V976.5V991.7L1181.5 990.7V997.9V979.2V988.9L1182.5 987.3V981.6V1000.5V993.5L1183.5 995.2V996.6V978.2V993L1184.5 993.5V1000.7V981V995.9L1185.5 999V1000.4V982.8V995.6L1186.5 997.9V999V979.5V993.1L1187.5 993.3V1000.5V980.3V992.1L1188.5 994.8V999.6V981.1V990.1L1189.5 985.7V974.5V1000V994.8L1190.5 995.1V999.1V981.4V994.3L1191.5 993.2V981.5V1005.1V994.6L1192.5 996.4V1000.6V979.2V987.1L1193.5 989.3V997V977.4V986.4L1194.5 987.4V978.3V1001.1V990.5L1195.5 993.9V997.8V982.2V989.4L1196.5 989.2V982.4V997.4V987.9L1197.5 987.3V980.9V999.7V995L1198.5 989.3V978.7V1000.1V992.2L1199.5 990.3V978.7V1003.3V996.7L1200.5 996.6V997.4V980.3V994.7L1201.5 994.3V1000.6V979.8V991.1L1202.5 990.3V998.1V981.5V995.5L1203.5 993V999.5V982.3V993.8L1204.5 996V999V980.9V990.7L1205.5 989.2V1000.3V977.8V991.7L1206.5 989.9V980.2V1002V996.1L1207.5 995V1003.1V981.1V987.3L1208.5 988.6V979.4V1001V986.9L1209.5 987.7V982.8V1004.7V988.5L1210.5 992.2V1000V981.6V1000L1211.5 1001.3V1002.6V979.2V987.6L1212.5 990.7V982V1001.1V983.6L1213.5 985.9V980V1001.4V990.2L1214.5 990.3V980.4V1002.1V989.8L1215.5 988.6V981.8V1000.4V994.5L1216.5 994.3V1000.2V979.9V987L1217.5 986.4V979.2V1001.5V997.4L1218.5 1000V1000.7V981.4V991.2L1219.5 988.5V980.6V999.4V988L1220.5 992.2V1002.3V978.2V988L1221.5 992.3V1002.5V981.9V989L1222.5 989.4V981.4V1001.6V988.1L1223.5 990.3V982V1002.7V985.8L1224.5 986.8V980.6V1002.3V995.3L1225.5 994.3V1001V981.5V988.6L1226.5 986.9V980.8V1002.1V997.6L1227.5 992.6V998.8V980.3V990.3L1228.5 995.2V1001.8V978.2V997.6L1229.5 995.6V998.8V981.8V992L1230.5 990.9V982.9V1004.4V983.2L1231.5 985.5V978.2V1000.9V984.6L1232.5 985V981.3V1000V987.1L1233.5 987.5V982.5V1001.9V983.2L1234.5 984.3V979.7V999.1V985.5L1235.5 986V981.9V1001.3V996.4L1236.5 994.6V1004.1V983.2V986.8L1237.5 986V981V1001.3V986.5L1238.5 989.7V981.7V1004V985.9L1239.5 985.7V981.4V1001.5V988.6L1240.5 987.6V981V1006.2V992.6L1241.5 993.6V1002.3V983.5V988.7L1242.5 987.3V979.1V1002.5V992.8L1243.5 990.7V981.7V1004.6V986.4L1244.5 989.7V983.1V1004V988.6L1245.5 987.6V981.5V1001V995L1246.5 993.5V1002.4V983.3V992.4L1247.5 992.5V983.4V1002.7V991.9L1248.5 993.2V1003.5V980.3V983.6L1249.5 988V982.7V1006.3V996.8L1250.5 996V1002.6V981.2V994.9L1251.5 996.2V1003.2V982.6V991.2L1252.5 989.3V982.2V1006.2V995.2L1253.5 994.7V1002.5V980.7V996.3L1254.5 992.9V1004.6V979.6V998.2L1255.5 996.7V1001V981.9V983L1256.5 981.1V1002.5V985.7L1257.5 989.3V984.2V1005.1V991.1L1258.5 988.9V985.3V1001.5V995L1259.5 993.5V1003.6V979.6V993.8L1260.5 994.9V1003.5V981.1V1001.7L1261.5 997.3V1002.3V982.3V999.9L1262.5 997.4V1004V983.9V991.7L1263.5 991.8V1001.5V980.3V1000.2L1264.5 1000.9V1003.1V984.4V993.5L1265.5 992.2V1001.6V980.1V999.1L1266.5 997.9V1000.2V979.7V997.6L1267.5 994.7V1003.9V983.1V988.1L1268.5 989.4V978.5V1001.5L1269.5 1001.5V1005.4V980V991.5L1270.5 991.8V999.8V980.5V996L1271.5 992.5V981.4V1004.3V985.9L1272.5 990V983.3V1004.5V997.8L1273.5 994.2V1002.5V982.7V998.1L1274.5 998.1V1005.3V982.7V990.8L1275.5 991.9V1002V977.8V990.6L1276.5 994.9V1004.3V983V991.1L1277.5 990.1V981.3V1002V990.7L1278.5 990V982.3V1002V990.7L1279.5 989.1V981.2V1007V991.3L1280.5 990.7V981.5V1001V989.7L1281.5 986.8V982.9V1002.9V989.9L1282.5 992.7V983.8V1007.8V993.1L1283.5 993.1V1001.2V980.2V990.9L1284.5 989.4V979V1008.4V995.8L1285.5 993.9V980.2V1010.8V992L1286.5 990.3V983.6V1003.9V985.9L1287.5 984.7V980.6V1007.3V992.7L1288.5 990.9V984.9V1006.6V991.9L1289.5 991.9V983.3V1005.1V993.2L1290.5 994.6V1002.9V983.4V999.8L1291.5 995.3V1004.9V983.2V990.6L1292.5 989.9V982.3V1008.8V995L1293.5 993V983.7V1006.8V991.8L1294.5 990.1V981.7V1005.1V991.9L1295.5 992.9V983.6V1004V1001.1L1296.5 998.6V1005V983.1V989.3L1297.5 989.5V982.5V1007.2V995.8L1298.5 993.1V985.4V1004.8V997.2L1299.5 995.4V985.5V1007.6V995.7L1300.5 991.1V979.2V1007.6V991.6L1301.5 993.5V984V1006.5V995.5L1302.5 995.5V1004.2V982.5V994.2L1303.5 995.8V1003.9V981.7V995L1304.5 992.2V982V1002.9V992.4L1305.5 992.8V982V1006.7V997.8L1306.5 996.2V1004.7V985.5V993.3L1307.5 996V1004.6V934.5V991.4L1308.5 993.8V1004.7V981.8V991.6L1309.5 992.2V982.8V1004.2V994.6L1310.5 997V1004.2V983.4V993.8L1311.5 994V985.1V1004.2V997.3L1312.5 996.2V1002.7V983.3V999.8L1313.5 998.7V1003.5V981.3V986.3L1314.5 989.1V982.5V1008.4V996.6L1315.5 997.2V1007.8V985.9V989.9L1316.5 989.4V983.8V1005.3V985L1317.5 985.8V1008V993L1318.5 993.3V980.7V1013.8V994.7L1319.5 995.2V1004.3V984.7V995.1L1320.5 993.1V984.1V1005.8V994L1321.5 993.1V986.8V1006.4V1000.2L1322.5 999.6V1005.3V982.8V995.6L1323.5 996.5V1005.7V983.6V996.3L1324.5 998.7V1007.8V985.1V995.3L1325.5 994.8V985V1006.8V990.6L1326.5 987.4V981.2V1005.8V988.6L1327.5 990.2V983.8V1005.3V989.4L1328.5 991.5V984V1004.7V996.9L1329.5 996V1006.2V985V991.6L1330.5 993.5V983.2V1007.1V991L1331.5 993.1V986.6V1005.4V994.2L1332.5 994.1V982.9V1007V999.2L1333.5 999.2V1008.3V980.8V1001.7L1334.5 1000.8V1006.9V988.6V990L1335.5 991.7V987.8V1010.3V996.3L1336.5 997.8V988.2V1010.8V997.6L1337.5 993.3V990V1008.8V997L1338.5 997.7V992.6V1016V1008.2L1339.5 1006.8V1015.3V992.4V1004.7" stroke="#0ff" fill="none" stroke-width="1" shape-rendering="crispEdges"/><path d="M77.8 946.1L81 947.3L84.1 947.7L87.2 947.3L90.3 946.8L93.3 946.8L96.2 947.3L99.1 947.9L101.9 948L104.8 947.3L107.5 946.1L110.2 945.4L112.9 945.4L115.6 945.9L118.2 946.7L120.7 947.6L123.2 948.5L125.7 949.3L128.2 950L130.6 950.5L133 950.5L135.4 950.7L137.7 950.2L140 948.6L142.3 946.8L144.5 946.1L146.7 946.9L148.9 948.7L151.1 951.6L153.2 953.8L155.3 955L157.4 955.7L159.4 955.9L161.5 955.8L163.5 955.4L165.5 954.3L167.5 952.2L169.4 950.3L171.3 949.7L173.2 950.6L175.1 952.9L177 955.3L178.8 956.3L180.7 955.5L182.5 954.6L184.3 955.1L186 956.9L187.8 958.1L189.5 958L191.2 957.4L192.9 957.5L194.6 958.4L196.3 958.8L198 957.6L199.6 955.8L201.2 954.8L202.8 955L204.4 955.5L206 955.3L207.6 954.2L209.1 952.6L210.7 950.9L212.2 949.5L213.7 949L215.2 949.8L216.7 951.7L218.2 953.4L219.7 953.7L221.1 952.4L222.6 950.9L224 950.3L225.4 951.4L226.8 953.7L228.2 956L229.6 957L231 956.2L232.4 954.3L233.7 952.3L235.1 950.7L236.4 948.6L237.7 945.3L239 942.7L240.3 943.2L241.6 947L242.9 952.2L244.2 955L245.5 955.7L246.7 955.8L248 954.8L249.2 953L250.4 951.7L251.7 952L252.9 953.7L254.1 955.3L255.3 955.7L256.5 955.9L257.7 957.3L258.8 960L260 962.6L261.2 963.1L262.3 960.7L263.5 956.8L264.6 953.4L265.7 951.6L266.9 951.5L268 952.9L269.1 954.6L270.2 955.3L271.3 954.9L272.4 954.7L273.5 955.3L274.5 955.8L275.6 955.7L276.7 955.1L277.7 955.1L278.8 956.1L279.8 956.9L280.9 956.8L281.9 955.9L282.9 955.3L283.9 955.6L285 957.3L286 959.3L287 960.1L288 959.3L289 957.6L289.9 956L290.9 955.3L291.9 955.6L292.9 956.3L293.8 956.5L294.8 956.5L295.8 956.6L296.7 956.8L297.7 956L298.6 954.3L299.5 952.9L300.5 953.2L301.4 955L302.3 957.3L303.2 958.9L304.1 959.4L305.5 959.4L306.8 958.3L307.7 958L308.6 958.6L309.5 959.7L310.4 959.9L311.3 958.4L312.5 956.4V955.4L313.9 955.6L314.7 956.7L315.6 958L316.4 958.5L317.3 957.8L318.5 957L319.8 958.2L320.6 959.9L321.4 961L322.3 961.3L323.5 960.9V960.4L324.7 959.6L325.5 958.7L326.3 958.2L327.5 958.2L328.7 957.3L329.5 956.5L330.3 956.8L331.5 957.7L332.6 955.1L333.4 952.5L334.5 951.1L335.7 952.1L336.5 953.2L337.5 954.6V956.1L338.7 957.3L339.5 958.4L340.5 959.8V960.7L341.7 960.4L342.4 959.1L343.5 957.9V956.7L344.6 955.3L345.3 954L346.5 953.5V954.1L347.5 955.3L348.5 956.3L349.6 955.7L350.3 955L351.5 955.3V956.7L352.4 958.3L353.5 958.8L354.5 957.6L355.5 957.2V957.7L356.5 958.5L357.5 958.8L358.5 959L359.5 959.9L360.5 959.3L361.5 957.2V955.5L362.5 954.6L363.5 954.6V955.3L364.5 956L365.5 956.3L366.4 956.1L367.5 956.1L368.5 956.5L369.6 957.6L370.5 958.2L371.4 957.5L372.5 957.7V959.2L373.5 961.6V962.9L374.5 962.1L375.5 960.4V959.2L376.5 958.6L377.6 959.5L378.5 959.8V959L379.5 957.3V955.9L380.5 954.5L381.5 953.2L382.5 955.6V958.3L383.5 959.3L384.5 959.2L385.5 959.3L386.5 960L387.5 959L388.5 958.1L389.5 959.7V961.4L390.5 961.7V960.1L391.5 958.5L392.5 958.3V958.8L393.5 958.8L394.5 958L395.5 957.5V956.7L396.5 955.7V955.2L397.5 955.7L398.5 956.5L399.5 957.4V959L400.5 961.1V962L401.5 961.1V959.4L402.5 958.2L403.5 958.7V959.2L404.5 959.4L405.5 959L406.5 960.2V960.7L407.5 961L408.5 961.2V960.1L409.5 958.2V956.8L410.5 957.3V958.4L411.5 957.9V956.2L412.5 955.3L413.5 956.8V958.7L414.5 961V962.3L415.5 962.2V961.6L416.5 961L417.5 960.6V961.2L418.5 960.5V957.6L419.5 954.6V953.3L420.5 953.7V955.5L421.5 958.1V960.9L422.5 962.3V961.6L423.5 960.1V956.4L424.5 954.8L425.5 956.5V958.2L426.5 959.8V961.2L427.5 961.9L428.5 961V960L429.5 960.1L430.5 960.8L431.5 961.3L432.5 961.6V965.5L433.5 967.2V965.2L434.5 959.2V952.6L435.5 948.3V947.6L436.5 950.2V958.4L437.5 960.5L438.5 960.3V959.6L439.5 959.1L440.5 960L441.5 959.1V958.2L442.5 958.8V960.9L443.5 960.4L444.5 962.5V964.4L445.5 963.4L446.5 964.6V968.3L447.5 967.4V964.9L448.5 963V961.5L449.5 960.8L450.5 960.8L451.5 961.6L452.5 961V960.3L453.5 961.9V963.2L454.5 963.6L455.5 963.5L456.5 962V960.3L457.5 958.6V958.1L458.5 960V963.9L459.5 963.8V962.9L460.5 961.7V960.3L461.5 959.6V961L462.5 961.8V959.6L463.5 960.1V962.2L464.5 963.1V960.3L465.5 961.6V966.3L466.5 966V961.3L467.5 959.8L468.5 960.6V957.1L469.5 957.1V958.3L470.5 958V959.1L471.5 959.3L472.5 958.5V957.6V958.3L473.5 961.2V965.8L474.5 965V962.6L475.5 961.1V960.2L476.5 960.9L477.5 960.4V961.4L478.5 962.6V959.4L479.5 958.3V960.2L480.5 960.6V958.9L481.5 957.5L482.5 957.9V961.5L483.5 964.4V966.3V965.4L484.5 962.7V958.7L485.5 960.6V961.9L486.5 962.2V960.5L487.5 960.5V962L488.5 960.9V960L489.5 961.4V963.6L490.5 960.9V957.7L491.5 958.5V960.1L492.5 960.5V958.7L493.5 958.1V964.5L494.5 962.7V961.1V962.1L495.5 965V967V965.7L496.5 962.1V958.7L497.5 958.3V957.2L498.5 957.3V960.9L499.5 960.2V957.4L500.5 957.9V958.5L501.5 957.6V961L502.5 961.6V962.6L503.5 961.8V961.1L504.5 960V954L505.5 954.6V960.2L506.5 961.4V963.7L507.5 963.1V959.9L508.5 959.4V957.7L509.5 960.4V959.3V962V959.3L510.5 955.2V953.6V957.7L511.5 959.4V962.4L512.5 965.7V964.1V968.8V964.1L513.5 960.1V958.6V959.5L514.5 961.3V955.1L515.5 954.6V958.7L516.5 959V956.7V957.5L517.5 959.4V960V957.9L518.5 957.9V956.8L519.5 957.2V958.9V958.2L520.5 957.9V962.3L521.5 960.8V959.7V960.3L522.5 961.6V964.6V964L523.5 962.1V960.8L524.5 959.8V958.9V959.9L525.5 959.3V957.4L526.5 957.1V958.5L527.5 958.5V957.5V958.7L528.5 961.4V965.4V963.7L529.5 960.5V955.6L530.5 958.3V963.3L531.5 963.6V961L532.5 960.7V954.1L533.5 953.6V956.4L534.5 957.2V962.9L535.5 961.7V961.2V963.5L536.5 960.8V954.7L537.5 954.1V956L538.5 955.8V959.2L539.5 959.7V958.9V960.6V958.9L540.5 956.4V958.2L541.5 956.9V955.4V963.5L542.5 965V958.3L543.5 957.4V961.5L544.5 963.3V959.6L545.5 956.2V952.8V954.1L546.5 956.6V963.2V962.6L547.5 961.8V959.7L548.5 959.6V961.1V960.2L549.5 958.2V956.6V959.9L550.5 961.2V958L551.5 957.4V953.2L552.5 953.6V955.3L553.5 953.9V959.5L554.5 963.9V965.2V956.1L555.5 956.2V959.7L556.5 958.9V966.6L557.5 965.5V961.8L558.5 961.2V957.4L559.5 957.4V961.2L560.5 960.7V954.7L561.5 955.1V962.1L562.5 963V954L563.5 953.7V960L564.5 960.3V963.8L565.5 964V958.9L566.5 956.8V953V954.2L567.5 956.2V960.9L568.5 960.4V963.5L569.5 965V959.5V960.3L570.5 960.1V957.1V958.1L571.5 955.8V954V957.9L572.5 958.4V956.5L573.5 957.5V964.6L574.5 965.4L575.5 962.1V954.6L576.5 953.3V957.3L577.5 959.4V960.5V959.1L578.5 958.3V958.9V956.3V958.9L579.5 960.8V956.8L580.5 956.8V960.3V959.5L581.5 959V960.9V953.6L582.5 952.7V959.3L583.5 959.8V954.4L584.5 954.4V960.7L585.5 961.4V954.9L586.5 955.2V954.2V956.9V954.2L587.5 954.8V955.8V948.6L588.5 949V960.4V959.9L589.5 955.3V956.8V951.2V956.8L590.5 956.8V954.6V956.6L591.5 959.6V957.6V964.2V957.6L592.5 957.6V958.7V956.4V958.7L593.5 961.9V963.8V961.4L594.5 960.6V952.7V953.5L595.5 956.1V957.5V952.6L596.5 951.6V961.4L597.5 960.5V959V964V962.9L598.5 960.3V959.6V963.8V962.1L599.5 959.2V957.1V958.7L600.5 957.2V952.5V954.8L601.5 954.3V951V953.4L602.5 954.3V963V961.5L603.5 962.7V961V961.8L604.5 959.2V959.9V957.7L605.5 955.2V953.9V957L606.5 959.4V946.6L607.5 948.1V955.8L608.5 956.3V954.9V959.3V954.9L609.5 952.6V949.1V951.8L610.5 952.4V957L611.5 954.4V960.5V959.8L612.5 958V954.1V956.2L613.5 958.1V957.5V964.7V957.5L614.5 955.3V957.1L615.5 957.8V964.2V962L616.5 961V953.2L617.5 951V955L618.5 956.8V959.9L619.5 960.7V964.5V951.4L620.5 952.6V950L621.5 949V954.8L622.5 953.8V951.9L623.5 951.5V948.5V957.4L624.5 957.8V956.5V960.1V959.4L625.5 959.5V958.4L626.5 957.1V956.4V962.7L627.5 962.5V955.6L628.5 953.7V953V959.1V955.2L629.5 955.1V953.4V959.9L630.5 961.8V964.1V959L631.5 958.5V960V951V960L632.5 962V957.7L633.5 958.8V953.2L634.5 951.2V950V956.6L635.5 958.6V957.8V964.3V957.8L636.5 955.5V957.4V949.5V957.4L637.5 961.2V952.8L638.5 952.2V957.9V955.4L639.5 958V947.8L640.5 949V950.6V945.7V947L641.5 950.5V958.2V956.7L642.5 952.7V948.2V958.3V955.8L643.5 953V951.6V955.9V952.3L644.5 953.6V957.3L645.5 957.4V951.2L646.5 951.5V946.8V958.2L647.5 960.3V948.2V949.3L648.5 952.6V957.8L649.5 956.6V951.1V952.1L650.5 954.9V956.5V950.6L651.5 950.5V959.5L652.5 959.7V947.5L653.5 946.5V956V954.3L654.5 951.7V950.6V955.5L655.5 953.7V952.4V956.3L656.5 955.6V946.7V953.3L657.5 955.5V951.8L658.5 948.9V944.1V955.1V954.1L659.5 952.2V951.6V958.7L660.5 958.8V953.6V957.6L661.5 958.4V959.3V952.9V955.2L662.5 952.7V951.7V958.9V951.7L663.5 951.4V947.8V956.2L664.5 955.9V949V949.7L665.5 948.1V955.7V950.4L666.5 951.8V947.6L667.5 948.6V952.8L668.5 950.9V954V945.5L669.5 943.8V954.8V951.8L670.5 947.9V945.5V952.3V946.8L671.5 950.3V952.7V943.4L672.5 944.6V956L673.5 959.3V951.1V953.3L674.5 955.3V947.5L675.5 946.7V945.6V952.6V945.6L676.5 944.2V951.1L677.5 953.9V953.1V955.5V953.2L678.5 953.8V956.8V950.5V956.8L679.5 958.3V948.2V949.4L680.5 950.6V949.9V953L681.5 953.8V962.5V960.6L682.5 955.7V959.9V945.1V958L683.5 954.4V956.1V948.4V956.1L684.5 956.8V946.9V952.5L685.5 952.9V947.8L686.5 945.6V951.8L687.5 954.8V950.5V953.6L688.5 954.7V956V949V956L689.5 955.3V956.7V952.2V955.3L690.5 955.8V958.9V947.9L691.5 945.8V945V950.6V946.1L692.5 946.3V958.1V956.8L693.5 954.2V947.1L694.5 945.4V941.9V951L695.5 951.6V944.1L696.5 943.3V948.2V947.2L697.5 946.7V944.7V959.3V953.4L698.5 949.1V953.7V944.1V953.7L699.5 955.6V945.4L700.5 943.6V948.8V944.6L701.5 947.7V946.4V953.6V949.1L702.5 947.9V948.5V941.3V943.9L703.5 944.3V942.1V954.1L704.5 953.9V954.4V942.3L705.5 944.7V949.9V946.7L706.5 946.8V943.7V953.5L707.5 952.5V944.1V949.7L708.5 948.3V949.4V940.2V946.2L709.5 943V942.1V949.4V942.1L710.5 943.6V939.4V949.7V944.5L711.5 946.9V948V943.1V948L712.5 949.2V942.8V946L713.5 944.3V945.1V938.6V944.3L714.5 944.5V948.3V937.1V940.1L715.5 941.2V939.8V948.9V943.5L716.5 945.6V948.8V941.4L717.5 941.4V949.8V944.7L718.5 944V946.8V933.7V934.6L719.5 935.4V947.1V944.3L720.5 939.6V936.3V944.1V940.9L721.5 943.4V941.1V950.2V946.3L722.5 946.4V936V936.8L723.5 940.4V939.6V943.6L724.5 944.2V945.5V936.8L725.5 937.3V934.6V947.1L726.5 945.1V950.2V939.6V944.3L727.5 941.3V939.8V947.4V944L728.5 945.4V940.4V942.1L729.5 941.2V944.9V941.1L730.5 941.2V943.6V935.6L731.5 936.6V931.7V944.9V941.4L732.5 942.3V940.8V943.9V943.2L733.5 944.3V938.2V942.7L734.5 944.1V934.3L735.5 934.7V932.9V942.5L736.5 944.5V932.3V933L737.5 936.5V935.6V939.9V936.6L738.5 935.9V932.7V940.3V935.6L739.5 936.1V946.7V937.7L740.5 933.9V936.8V928.5V934.6L741.5 933.6V929.3V938.4V932.7L742.5 934.5V931.8V938.4V935.1L743.5 937.6V939.9V929.6V934.7L744.5 931.5V934.6V924V934.2L745.5 933.6V930.1V931.4L746.5 931.1V937.3V930.9L747.5 930.2V941.5V931.9L748.5 929.5V927.3V934.5V929.1L749.5 929.1V925V927L750.5 928.1V930.2V924.7V926.7L751.5 929.6V932.3V925.5V930.9L752.5 928.1V922.9V934.8V929.6L753.5 928.1V929.3V919.6V925.2L754.5 923.4V927.6V913.5V925.6L755.5 927.4V928.8V924.2L756.5 924.3V928.2V916.4V919.8L757.5 918V914V922.5V918.9L758.5 915V911.9V923.2V921.4L759.5 921.6V923.2V915L760.5 917.4V921.1V913.4V919.3L761.5 917.6V918.5V909.4V910.2L762.5 911.4V906.5V920.3V913.4L763.5 912.8V907.9V918.6L764.5 917.3V920.5V909.2V920.5L765.5 920.4V903.4V907.5L766.5 905.9V910.5V898.4V901.1L767.5 902.3V899.8V906.5V903L768.5 901V903V895.8V899.6L769.5 905.1V907V888V891.1L770.5 890.5V886.1V896.7V888.5L771.5 888.4V893.1V882.2L772.5 880.8V885.1V854.2L773.5 817.3V627.5V668.8L774.5 688V883.3V878.1L775.5 877.8V887.5L776.5 887.2V883.1V893.9V890.9L777.5 895V894.2V902.2L778.5 903.3V904.7V895.9V899.5L779.5 898.7V897.3V908.8V900.7L780.5 901.8V897.6V911V908L781.5 909.6V912.5V901.1L782.5 902.6V919.1L783.5 914.5V920.7V907.4V910.7L784.5 909.8V926.9V915.2L785.5 914.1V911.2V920.7V916.1L786.5 913.6V909.7V919L787.5 919.4V915L788.5 913.9V925L789.5 922.8V914L790.5 913.5V912.1V931.3V928.4L791.5 928.4V928.9V917.9V919.1L792.5 918.3V926.6V917.9L793.5 918.6V933.3V927.7L794.5 927.8V930.3V918.8V929.6L795.5 926.6V922.4V932.6L796.5 931.5V917.6V921L797.5 924.2V920.4V928.3V920.7L798.5 920.6V933.4V932.4L799.5 932.2V928.1L800.5 927.6V922.6V937.1V924.4L801.5 927.8V924.2V935.8V934.3L802.5 933V938.3V923.9V930.3L803.5 930.1V929.2V939.4V938.6L804.5 938.1V940.7V925.7V934.5L805.5 936.6V932.3L806.5 930.1V927.3V943V941.6L807.5 939.7V928.6L808.5 929.1V928.1V938.5V930.1L809.5 931.1V930.4V939.6V936.3L810.5 934.7V938V929.6V934L811.5 934.4V931.6V941.7V935L812.5 933.6V928.4V939.7V936.3L813.5 937.6V935.3V942.4V935.3L814.5 936.7V949.1V937.9L815.5 938V930.6V948.8V937.1L816.5 940.3V943.5V936L817.5 936.1V934.7V942.2V936.8L818.5 940.3V936.5V947.1V940.2L819.5 942.1V948.1V929.4V941.1L820.5 944.8V946.6V932.3V936L821.5 934.9V945.6V942.5L822.5 942.7V945.7V935.2V937.2L823.5 942.4V936.6V949.1V942.3L824.5 944.5V936.7V954.7V943.1L825.5 944.4V935.1L826.5 937.8V937.2V949.6V943.5L827.5 941.5V937.8V949.5V938.6L828.5 939.8V938V947.9L829.5 949.4V936.9V941.3L830.5 942.8V947.7V935.4V947.7L831.5 948.2V949.9V935.6V941.9L832.5 939.7V939.2V951.4V939.2L833.5 938.8V946.4V941.5L834.5 942.1V943.9V936.8V938.2L835.5 940.8V939.9V953V939.9L836.5 941.2V948.7V947L837.5 947.5V951.1V943V945.2L838.5 945.5V942.6V954.8V949.2L839.5 947.5V949.3V939.9V945.8L840.5 944.1V943.3V952L841.5 952.5V946.3V952.2L842.5 953.3V954.7V945.8L843.5 945V940.7V949.3V946.4L844.5 951.2V957.2V940.6V942.7L845.5 944.4V955.9V952L846.5 947.4V949.8V939.7V948.2L847.5 947.6V951.9V942.3V950.6L848.5 952.1V949V959.5V953.1L849.5 949.5V942.4V956.6V948.2L850.5 948.4V944.3V952.5V949.7L851.5 951.4V952.6V943.3V951.5L852.5 948.4V945.2V959.8V945.4L853.5 946V943.2V956.1V945.3L854.5 948V942.2V957.8V951.3L855.5 951.2V948.4V955.1V952L856.5 952V954.6V946.9V952.2L857.5 951.3V954V941.8V951.8L858.5 952V960.7V942.3V955.9L859.5 957.7V944.6V946.8L860.5 946.6V957V953.6L861.5 953.1V961V944.8V949.9L862.5 948V946.5V957.4V952.3L863.5 953.8V948.8V963.4V949.3L864.5 950.1V946.8V960.3V955.3L865.5 954.1V957.7V945.1V957.7L866.5 959.2V960.4V948.1L867.5 949.1V947.4V959V956.5L868.5 954.6V946.2V952.2L869.5 953.5V948.6V959.7V958.8L870.5 958.3V959.2V942.7V950.3L871.5 951.2V947.6V960.2V959.1L872.5 957.5V950.1V965.2V950.1L873.5 950.1V947.7V963.7V956.3L874.5 952.6V946.3V962.3V953.7L875.5 952.5V946V960.4V958.5L876.5 954.8V952.1V960.9L877.5 959.5V965.1V951.5V957.5L878.5 956.4V952.5V961V958.2L879.5 962.4V964.3V950.1V956.7L880.5 957.7V962.3V947.1V953.3L881.5 958.4V963.1V947.6V959L882.5 958.8V961.5V950.5V951.9L883.5 953.4V946.4V967.7V964.9L884.5 961.9V949.8V957.1L885.5 956.7V953.7V962.3V956.3L886.5 954.7V950.3V960.4V957.6L887.5 957.8V960.5V950.3V952L888.5 950.8V950.2V966V963.5L889.5 964.8V965.7V953.2V957.9L890.5 954.6V964.1V956.1L891.5 956.9V955.5V969.8V957.2L892.5 958.8V963.2V952.6L893.5 955.2V947.3V965V956.6L894.5 957.5V956.8V966.5V957.3L895.5 956.5V963.4V945.7V960.4L896.5 961V964.3V950.6V956.3L897.5 954.2V961V917.7V953.8L898.5 953.3V949.4V963.9V961.6L899.5 962V965.8V953.5V954.2L900.5 954.5V949.5V965.6V953.5L901.5 953.5V965.1V957.4L902.5 961.7V968.4V952.9V959.8L903.5 961.3V956.6V966.8V965.4L904.5 966.8V969V952.7V959.1L905.5 957.5V964.9V950.2V964.3L906.5 965.9V967.7V955.7V961.6L907.5 961.3V957.7V967.2V961.1L908.5 960.8V957.7V966.6V964.7L909.5 963.3V964.7V955.9V960.8L910.5 960.4V955.2V968.5V961.2L911.5 963.3V969.9V954.1V959.1L912.5 957V955.2V964.3V958.8L913.5 959.9V956.6V970.2V964.7L914.5 965.5V968.9V952.9V963.1L915.5 962.5V956.6V969.8V960.8L916.5 963.4V969.3V955V959.1L917.5 960.6V965.5V953.9V957.3L918.5 958.8V957.5V966.2V958.3L919.5 958.2V954.3V969.8V954.3L920.5 955.9V968.7V963L921.5 961.4V954.4V970.1V957.5L922.5 959.5V954.5V967.1V960.8L923.5 963.7V966.8V954.5L924.5 954.1V967.6V964.2L925.5 964.1V967.9V957L926.5 957.4V956.4V969.7V960.7L927.5 960.8V956.8V967.2V963.3L928.5 960.4V956.5V971.4V969.8L929.5 968.1V968.7V951.4V968.7L930.5 968.7V954.6V963.4L931.5 964.5V961.4V970.6V962L932.5 961V957.4V974.1V962.1L933.5 961.8V956.6V969.3V967.3L934.5 963.1V966.4V956.6V964.5L935.5 963.1V958.3V977.1V963L936.5 963.5V967.4V957.1V961.9L937.5 960.1V956.9V969.4V964.3L938.5 964.5V974.6V954.3L939.5 956.3V968.2V962.4L940.5 964.2V969.7V956.6V965.6L941.5 963V967.7V955.9V960L942.5 960.9V958.4V967.4V961.3L943.5 960.2V959V971.7V965.2L944.5 963.3V971.8V954.6V961.1L945.5 962.1V958.5V969.7V963.2L946.5 963.1V966.9V958.5V963.6L947.5 962.1V956.5V975.6V967.3L948.5 965.2V970.9V958.2V963.3L949.5 964.3V969.7V955.5V966.7L950.5 968.7V971.3V961V969.4L951.5 969.1V973.3V955.5V959.1L952.5 964.4V961V969.5V961.7L953.5 960.4V955.3V972.8V955.3L954.5 953.8V973.2V961.7L955.5 960.3V970.6V964.7L956.5 966.4V972.3V957.6V967.7L957.5 970.9V973.1V957.7V968.5L958.5 968.5V974.5V959.1V964.1L959.5 964.4V968.7V957.5V963.9L960.5 963.3V954V976.9V962.7L961.5 964.7V960V976.6V961.8L962.5 963.6V958.1V970.6V962.4L963.5 961.1V957.1V969.3V961.6L964.5 964.3V960.4V969.9V965.6L965.5 964.2V958V973.9V968.2L966.5 967.9V972.4V955.9V966.6L967.5 966.9V962.5V972.3V964.1L968.5 967V973V958V967.1L969.5 968.1V971.8V936V968.7L970.5 969.2V970.8V958.7V968.7L971.5 969.9V973V957.5V968L972.5 966.8V971.2V959.2L973.5 962.2V960.9V972V966.6L974.5 968V969.9V956.5V958.4L975.5 958.2V970.8V967.3L976.5 969V972.3V956.1V969.9L977.5 970.3V972.5V958.6V965.1L978.5 961.6V958V976.4V973L979.5 967.7V960.9V975.6V963.3L980.5 964.4V954.9V975.2V963.1L981.5 961.1V959.4V972.8V967L982.5 967.8V974.6V954.4V959.7L983.5 962.4V960.2V973.2V966.2L984.5 965V975.4V952.9L985.5 955.2V975V959.5L986.5 960.2V959.1V972V969.4L987.5 973.1V980.2V960.8V965.5L988.5 964.1V969V958.3V960.1L989.5 962V954.9V973.3V966.9L990.5 968.4V970.5V959.1V965.8L991.5 962.2V959.7V972.8V971.3L992.5 970V972.1V959.9V966.5L993.5 964.5V960.9V975.6V965.9L994.5 963.9V959.5V971.9V970.4L995.5 969.1V974.4V961.2V965.2L996.5 965.6V960.6V972.9V966.1L997.5 968.5V974.1V961.9V963.4L998.5 964.4V959.2V972.3V968.7L999.5 970.5V975.3V957.6V960.8L1000.5 964.7V972.9V956.3V967.2L1001.5 968.9V974.3V959.7V974.1L1002.5 973.3V962.1V963.9L1003.5 965.6V962.7V975.6V966.3L1004.5 969.1V971.1V957.8V964.8L1005.5 967.2V972.8V960.1V970.3L1006.5 972.5V961.7V965.2L1007.5 964.4V960.8V978.6V967.7L1008.5 967V960.9V975.1V965.4L1009.5 967V970.6V961L1010.5 960V959V975.5V969.7L1011.5 967.5V959.9V977.1L1012.5 979.8V961.2V970.1L1013.5 969.8V973.3V961.2V969.5L1014.5 972.4V976.1V959.4V965.8L1015.5 965.7V959.7V974.7V968.1L1016.5 972.5V973.7V962.2V964.7L1017.5 965.5V959.3V976.3V971.7L1018.5 969V974.9V958.8V971.2L1019.5 972.7V975.5V961.4V963.2L1020.5 963.7V973.5V953.9V965.3L1021.5 965.5V957.6V975.8V964L1022.5 962V959.5V976.3V965.7L1023.5 965.4V958.2V973.3V961.8L1024.5 963.7V956.4V977.6V960.6L1025.5 960.9V959.4V974.5V966.4L1026.5 966.3V959.3V978.1V976L1027.5 975.8V962.5V966.8L1028.5 964.8V960.4V976.7V964L1029.5 965.2V958.4V977.2V965.7L1030.5 964.1V959.3V975.6V966.6L1031.5 965.9V959.3V975.3V966L1032.5 966.7V973.9V958.4V968L1033.5 971.1V974.8V956.6V968.6L1034.5 971V973.3V958.1V970.8L1035.5 966.9V970.5V959.6V963.7L1036.5 964.4V956.6V972.7V965.4L1037.5 965.4V960V973.4V963.2L1038.5 964.3V957.2V973.2V960.5L1039.5 964.3V959.4V974.1V965.5L1040.5 964.8V960.7V974.8V964.4L1041.5 963.9V958.6V974.9V967.2L1042.5 968.3V973.4V959.7V966.2L1043.5 964.8V961.6V971.8L1044.5 970.2V978.3V960.4V962.5L1045.5 960.5V974.5V962.8L1046.5 965.5V958V975.5V963.8L1047.5 964.3V960.3V975V969L1048.5 969.1V975.6V960.1V969.5L1049.5 969.8V972.2V956.6V965.6L1050.5 968.7V974.7V962.7V965.1L1051.5 968V974.2V961.5V968.7L1052.5 967.4V960.9V975.3V971.4L1053.5 969.2V975.3V957.2V973.2L1054.5 972.5V977.2V960.2V968.8L1055.5 967.6V959.7V979.4V967L1056.5 969.1V975.1V958.2V968.4L1057.5 970.6V973.3V957.9V967.3L1058.5 967.2V974.5V958.3V967.7L1059.5 970.5V975.6V960.1V970.2L1060.5 967.2V977.8V954.4V963.1L1061.5 964.4V960.4V974.2V967.3L1062.5 969.5V975.9V954.1V975.5L1063.5 976.3V957.4V971.8L1064.5 971.8V979.2V955.3V965.4L1065.5 967.9V974V958.7V971.4L1066.5 970.9V975.3V959.8V965.6L1067.5 968V976.9V958.7V970.1L1068.5 969.2V962.5V981.1V968.8L1069.5 971V973.9V960V973.9L1070.5 975.6V959.1V971.4L1071.5 970.4V976.2V961.9V968.7L1072.5 967.9V961V976.4V961.9L1073.5 962.6V958.1V976.4V968.1L1074.5 967.9V962.3V975V967L1075.5 966.5V960.4V978V967.5L1076.5 967.2V977V955.9V967.5L1077.5 966.7V960.7V973.6V967.6L1078.5 966.5V962.6V975.3V964.2L1079.5 965.1V960.9V976.1V970.8L1080.5 971.2V975.1V959.6V965.5L1081.5 965.6V959.3V975.2V966.2L1082.5 966.3V961.3V978.9V971.6L1083.5 968V960.9V976.9V963.5L1084.5 964.3V958.5V975.2V964.7L1085.5 964.6V961.4V975.4V966.1L1086.5 966.6V960.8V974.1V968.1L1087.5 968.8V975.6V960.9V967.2L1088.5 968.3V976.3V957.1V968.7L1089.5 971.8V976.3V960.2V967.4L1090.5 967.6V974.7V959V967.1L1091.5 965.5V961.8V975.5V966.1L1092.5 968V977V955.2V967.8L1093.5 966.4V958.8V976.3V974.5L1094.5 971.5V974.2V959.1V963.1L1095.5 959.8V957.1V975.8V964.4L1096.5 965.4V973.1V957.2V963.6L1097.5 962V958.8V975.5L1098.5 977V957.8V972.1L1099.5 971.1V978.6V959.8V965.5L1100.5 969.1V961.3V984.1V971.3L1101.5 972V974.7V960.5V971.4L1102.5 970.3V978.1V957V970.6L1103.5 970.4V961.4V979.8V973.8L1104.5 970.3V981.7V955.4V965.9L1105.5 964.3V961.2V977.4V970.3L1106.5 969.9V962.1V978.8V973.5L1107.5 972.3V976V959.5V969.5L1108.5 969.2V961.3V983.8V969.1L1109.5 968.1V975.1V960.6V962.1L1110.5 965.5V958.6V974.1V962.7L1111.5 966.9V957.7V977.9V965.1L1112.5 967.6V975.5V958.4V964.5L1113.5 963.9V972.8V954.5V964.9L1114.5 964.7V958.3V973.1V969.9L1115.5 971.6V977.3V960.6V971.1L1116.5 971.7V977.5V961.2V971.5L1117.5 967.7V960.6V976V970.1L1118.5 971.2V976.2V956.5V968.8L1119.5 969.4V978.8V959.6V961.5L1120.5 960.5V958.2V981.9V972.2L1121.5 971.4V977.8V960.1V969.6L1122.5 968.4V974.2V957.5V966.8L1123.5 967.9V958.8V979.2V968.4L1124.5 970.3V975.6V956.5V961.3L1125.5 963.6V959.3V974.3V970.3L1126.5 970.8V962V981.3V966.2L1127.5 963.7V960V974.9V966.8L1128.5 963.6V960V977.6V967.5L1129.5 968.9V960.9V978.5V964.2L1130.5 963.2V959.4V977.4V971.7L1131.5 970.4V979V959.9V972L1132.5 973.4V978.8V958.6V964.2L1133.5 967.8V958.5V977.5V966.1L1134.5 966.9V958.9V975L1135.5 975.1V979.9V959.5V970L1136.5 969.7V976.7V958.7V971.6L1137.5 969.1V961.4V977V965.5L1138.5 967.4V961.1V975.5V970.9L1139.5 974.7V975.7V960.3V970.8L1140.5 970.2V977.2V960.6V962.1L1141.5 963.7V959.6V977.6V969.8L1142.5 971.8V975V961.1V971.5L1143.5 970.9V962.7V980.8V973.5L1144.5 971V978.4V960.9V963.7L1145.5 965.4V960.1V976.2V969L1146.5 968.8V975.9V958.6V972.1L1147.5 972.1V974.8V960.3V966.8L1148.5 969.7V976.2V954.9V963.5L1149.5 962.8V958.7V979.1V969.3L1150.5 969.5V973.3V959V969L1151.5 968.5V961V979.4V964.7L1152.5 963.4V959.8V977.6V965.2L1153.5 962.6V959.6V980.3V964.7L1154.5 965.6V957.8V974.8V968.3L1155.5 970.2V978.1V958.3V966.3L1156.5 964.5V953.3V979.2V963.7L1157.5 967.3V958.8V976.3V971.8L1158.5 968.5V960.8V979V962.8L1159.5 962.8V959.3V976.9V965.9L1160.5 962.2V959.9V977.5V966.5L1161.5 968.1V961.6V977.4V971.1L1162.5 970.7V978.8V959.1V969.6L1163.5 968.6V961.3V977.8V967.8L1164.5 967.9V958.4V978.7V965.4L1165.5 965.3V960V979.7V969.2L1166.5 965.7V958.5V978.8V966.3L1167.5 966.4V961.5V976.3V966.3L1168.5 966.1V958.2V976.5V968.7L1169.5 970V976.7V961.1V965.4L1170.5 965.5V959.4V975.9V967.7L1171.5 967V961V977.4V965.9L1172.5 967.8V975.9V958.2V967.6L1173.5 969.2V959.7V980.9V967.7L1174.5 967.4V959.1V976.7V964L1175.5 960.3V957.7V975.5V967.9L1176.5 965.7V958.5V977.5V973.9L1177.5 972.6V975.9V957.9V961.7L1178.5 957.2V955.9V972.7V962.9L1179.5 961.8V958.4V976.5V966.2L1180.5 965.9V961.7V981.8V966.8L1181.5 965.9V959.4V976.3V968.5L1182.5 967.7V960.5V978.8V965.4L1183.5 965.7V957.9V974.3V963.6L1184.5 965.1V961.6V975.5V968.9L1185.5 972.1V977.2V959.8V965.6L1186.5 964.6V960.1V979.1V969.6L1187.5 967.6V960.1V977.3V968.2L1188.5 968.6V977.1V959.1V966.8L1189.5 969.5V975.3V957V969.2L1190.5 966.4V957.6V978.1V961.2L1191.5 966.9V960.5V976.4V968L1192.5 969.6V974.4V961.7V970.6L1193.5 970.1V974.9V956.7V965.1L1194.5 964.4V956V978.6V967.8L1195.5 968.5V976.5V956.5V966.4L1196.5 971V977.2V957.9V972.1L1197.5 973.7V975.1V960.8V964.7L1198.5 967.4V975.7V958.5V967.7L1199.5 964.3V957.4V978.4V963.6L1200.5 965V957.9V978.5V968.5L1201.5 969.7V975.8V958.5V967.7L1202.5 968.1V976.5V959.5V967.8L1203.5 969.4V976.9V955.9V969.4L1204.5 967.8V959.1V979.2V965.6L1205.5 964.2V958.7V977.7V963.6L1206.5 965.9V958.6V978.1L1207.5 974.7V977.6V957.2V974.3L1208.5 973.8V976.9V958.6V966.1L1209.5 966.6V973.8V957.6V966.6L1210.5 968.4V978.6V956.1V967.5L1211.5 966.3V957.6V978.7V966.9L1212.5 965.9V961.2V978.4V963.7L1213.5 965.2V958.2V978.1V973.3L1214.5 970.4V979.9V957.2V969L1215.5 967.6V975.7V957.9V962.3L1216.5 967V974.1V959.5V964.7L1217.5 963.5V959.1V976V970.5L1218.5 969.4V978.7V958.5V961.9L1219.5 963.6V958V979V962.4L1220.5 963.3V957.5V977V967.9L1221.5 970.3V978.4V959.8V969.9L1222.5 969.7V979.8V958.8V964.2L1223.5 966.3V959.3V976.8V960.8L1224.5 963.9V958.5V976.3V964.4L1225.5 965.3V957.4V978V965L1226.5 963V957V978.8V964.7L1227.5 968.2V976.6V955.7V966.1L1228.5 967.1V973.8V958.5V961.7L1229.5 962.5V960.4V975.4V971.8L1230.5 972V975.6V960.2V964L1231.5 966.7V960.2V977V965.2L1232.5 967.7V977.4V957.6V966.2L1233.5 962.9V956.3V976.9V969.6L1234.5 969.7V979.1V958.7V969.4L1235.5 968V976.9V957.9V962.9L1236.5 964.8V956.7V976.6V963L1237.5 969.4V973.8V960.5V967.3L1238.5 967V957.9V979.5L1239.5 978.9V959.6V962.8L1240.5 965.1V959.5V975.6V964.7L1241.5 966V958.4V981.8V965.6L1242.5 968.1V979.1V956.9V971.3L1243.5 969.1V959.2V979.3V964.5L1244.5 965.2V958.6V978.6V965.2L1245.5 962.6V959.7V975.7V971.1L1246.5 973.5V978.3V957.7V966.5L1247.5 965.2V960.9V981V964L1248.5 962.3V958.3V977.2V968.2L1249.5 969.7V974.4V955.8V970.9L1250.5 972.8V975.7V958.6V965.1L1251.5 968.4V960.9V977.6V963.5L1252.5 962.6V959.7V977.6V965.5L1253.5 965.5V956.5V976.7V965.2L1254.5 966.8V956.6V977.6V967.7L1255.5 966.2V959.2V976.3V966L1256.5 969.8V978.5V957.5L1257.5 958.5V977.8V969.9L1258.5 971.9V977V959.7V972.7L1259.5 969.7V975.7V954.4V970.3L1260.5 967.8V977.4V956.9V965.9L1261.5 964.5V960.2V976.8V965.5L1262.5 964.7V956.8V978V968.6L1263.5 967.7V958.1V978.6V975L1264.5 972.6V977V959.3V972.6L1265.5 971.7V976.6V958.1V970.6L1266.5 970.4V977.8V956.8V965.9L1267.5 967.1V960.3V978.4V963.6L1268.5 967V975.5V956.3V967.7L1269.5 968.1V960V978.2V971.3L1270.5 970.5V978.2V959.5V967.8L1271.5 968.2V959.1V980.1L1272.5 976.1V982.2V959.3V966L1273.5 964V959.8V977V961.4L1274.5 959.7V957.4V977V966.8L1275.5 969.1V979.5V958V966.5L1276.5 964.4V959.3V979.4V969.9L1277.5 970.4V977.2V955.7V970.1L1278.5 971.7V977.1V958.2V965.5L1279.5 963.7V959.6V979.7V966.4L1280.5 966V957.8V977.4V966.5L1281.5 967.6V976V959.2V965.1L1282.5 963.6V957.2V977.2V965.5L1283.5 966.1V956.1V979.6V970.3L1284.5 971.2V976.6V957.8V969L1285.5 972.8V980.1V956.9V964.4L1286.5 965.7V960.3V982.7V973.8L1287.5 974.1V978.6V954.8V965.5L1288.5 964.8V958.1V982.2V968.5L1289.5 968.5V957.2V980V962.8L1290.5 966V960.4V975.7V970.4L1291.5 970V978.8V958.8V967L1292.5 964.4V959.3V978.3V966.1L1293.5 967.4V957.5V981.5V965.3L1294.5 965.2V959.1V981V965.9L1295.5 965.1V956.9V976.9V964.7L1296.5 966.1V959.1V978.5V976.3L1297.5 973.9V978.4V956.4V971.6L1298.5 968.7V977.8V959.1V967.5L1299.5 966.1V956.9V977.4V964.6L1300.5 964.1V959.5V979.4V970.2L1301.5 969.7V979.3V958.9V968.7L1302.5 970.4V977.6V956.8V967.5L1303.5 965.5V957.5V980.1V962L1304.5 962.5V957.8V977.9V963.4L1305.5 964V957.1V975.9V964.5L1306.5 963.8V956.1V977.9V972.4L1307.5 971.9V977.6V958.7V966.1L1308.5 967.1V957.2V978V962.1L1309.5 962.9V957.7V978.3V971.3L1310.5 970.7V981.8V957.4V968.4L1311.5 971V977.2V960V964.4L1312.5 962.5V957.5V982.8V965.9L1313.5 968.5V976.5V956.7V968.3L1314.5 970.5V977.6V957.2V962.3L1315.5 966.1V957.1V975.5V968.8L1316.5 966.9V957.5V978V969.3L1317.5 969.8V977V958.2V966.7L1318.5 967.5V956.3V979.7V967.3L1319.5 967.2V957.7V977.9V965.4L1320.5 965.1V959.3V975.6V968.6L1321.5 967.3V957.1V980.1V973.7L1322.5 971V979.3V956.6V960.7L1323.5 961.7V958.4V979.2V966.3L1324.5 966V957.7V977.3V965.8L1325.5 967.9V958.5V980.4V972.4L1326.5 968.4V975.6V959.3V968.6L1327.5 968.7V978.8V958.5V967.7L1328.5 967.9V957.2V979.5V964.3L1329.5 965.2V955.2V977.4V975.6L1330.5 974.4V979.6V959.4V969L1331.5 966.3V958.2V983.4V969.9L1332.5 970.8V979.4V959.8V967.7L1333.5 967.1V959.3V980.3V977.3L1334.5 974.9V983.2V960V968.8L1335.5 968.7V961V983.4V971.3L1336.5 974.7V980.1V962.4V975.2L1337.5 975.6V986.9V963V972.8L1338.5 972.5V966V987.4V979.2L1339.5 976.4V968.2V987.3V981.4" stroke="#ff0" fill="none" stroke-width="1" shape-rendering="crispEdges"/><path d="M773.500 853V966M774.500 856V966" stroke="#0ff" fill="none" shape-rendering="crispEdges"/><text x="73.8" y="577.3" fill="#0ff" text-anchor="end" >20</text><text x="1341.2" y="577.3" fill="#ff0" text-anchor="start" >20</text><text x="73.8" y="621.7" fill="#0ff" text-anchor="end" >0</text><text x="1341.2" y="621.7" fill="#ff0" text-anchor="start" >0</text><text x="73.8" y="666.1" fill="#0ff" text-anchor="end" >-20</text><text x="1341.2" y="666.1" fill="#ff0" text-anchor="start" >-20</text><text x="73.8" y="710.5" fill="#0ff" text-anchor="end" >-40</text><text x="1341.2" y="710.5" fill="#ff0" text-anchor="start" >-40</text><text x="73.8" y="754.9" fill="#0ff" text-anchor="end" >-60</text><text x="1341.2" y="754.9" fill="#ff0" text-anchor="start" >-60</text><text x="73.8" y="799.3" fill="#0ff" text-anchor="end" >-80</text><text x="1341.2" y="799.3" fill="#ff0" text-anchor="start" >-80</text><text x="73.8" y="843.7" fill="#0ff" text-anchor="end" >-100</text><text x="1341.2" y="843.7" fill="#ff0" text-anchor="start" >-100</text><text x="73.8" y="888.1" fill="#0ff" text-anchor="end" >-120</text><text x="1341.2" y="888.1" fill="#ff0" text-anchor="start" >-120</text><text x="73.8" y="932.5" fill="#0ff" text-anchor="end" >-140</text><text x="1341.2" y="932.5" fill="#ff0" text-anchor="start" >-140</text><text x="73.8" y="976.9" fill="#0ff" text-anchor="end" >-160</text><text x="1341.2" y="976.9" fill="#ff0" text-anchor="start" >-160</text><text x="73.8" y="1021.3" fill="#0ff" text-anchor="end" >-180</text><text x="1341.2" y="1021.3" fill="#ff0" text-anchor="start" >-180</text><text x="74.5" y="1031" fill="#fff" text-anchor="middle" >20</text><text x="239.2" y="1031" fill="#fff" text-anchor="middle" >50</text><text x="362.7" y="1031" fill="#fff" text-anchor="middle" >100</text><text x="486.2" y="1031" fill="#fff" text-anchor="middle" >200</text><text x="649.4" y="1031" fill="#fff" text-anchor="middle" >500</text><text x="772.9" y="1031" fill="#fff" text-anchor="middle" >1k</text><text x="896.3" y="1031" fill="#fff" text-anchor="middle" >2k</text><text x="1059.6" y="1031" fill="#fff" text-anchor="middle" >5k</text><text x="1183.0" y="1031" fill="#fff" text-anchor="middle" >10k</text><text x="1306.5" y="1031" fill="#fff" text-anchor="middle" >20k</text><rect x="29" y="1030" width="73" height="12" fill="#fff"/><text x="30.5" y="1040" fill="#000" text-anchor="start" textLength="70">Zero Padding</text><text x="110" y="1040" fill="#fff" text-anchor="start" textLength="187">Resolution: 0.366211Hz, 0.5Hz (real)</text><text x="592" y="1040" fill="#fff" text-anchor="start" textLength="230">AMPLITUDE SPECTRUM in dBV (Vr=1 Vrms)</text><text x="1188" y="1040" fill="#fff" text-anchor="start" textLength="111">Averaged Frames: 10</text><text x="1341" y="1040" fill="#fff" text-anchor="start" >Hz</text><text x="38" y="559" fill="#0ff" text-anchor="start" textLength="37.500">A(dBV)</text><text x="1339.5" y="559" fill="#ff0" text-anchor="start" textLength="37.500">B(dBV)</text><text x="287" y="547" fill="#0ff" text-anchor="start" textLength="105">A: Peak Frequency=</text><text x="445.5" y="547" fill="#0ff" text-anchor="end" >1.001671</text><text x="454.3" y="547" fill="#0ff" text-anchor="start" textLength="19.700">kHz</text><text x="479.4" y="547" fill="#0ff" text-anchor="start" textLength="28.400">THD=</text><text x="581.5" y="547" fill="#0ff" text-anchor="end" textLength="59">0.01535 % (</text><text x="645.3" y="547" fill="#0ff" text-anchor="end" >-76.28 dB)</text><text x="652.6" y="547" fill="#0ff" text-anchor="start" textLength="42.600">THD+N=</text><text x="768.6" y="547" fill="#0ff" text-anchor="end" textLength="58.600">1.78968 % (</text><text x="832.4" y="547" fill="#0ff" text-anchor="end" >-34.94 dB)</text><text x="839.9" y="547" fill="#0ff" text-anchor="start" textLength="39.300">SINAD=</text><text x="937.7" y="547" fill="#0ff" text-anchor="end" >34.94 dB</text><text x="945.6" y="547" fill="#0ff" text-anchor="start" textLength="28.400">SNR=</text><text x="1032.6" y="547" fill="#0ff" text-anchor="end" >34.94 dB</text><text x="1040" y="547" fill="#0ff" text-anchor="start" textLength="20.700">NL=</text><text x="1128.2" y="547" fill="#0ff" text-anchor="end" >-98.05 dBV</text><text x="287" y="559" fill="#ff0" text-anchor="start" textLength="105">B: Peak Frequency=</text><text x="445.5" y="559" fill="#ff0" text-anchor="end" >1.001671</text><text x="454.3" y="559" fill="#ff0" text-anchor="start" textLength="19.700">kHz</text><text x="479.4" y="559" fill="#ff0" text-anchor="start" textLength="28.400">THD=</text><text x="581.5" y="559" fill="#ff0" text-anchor="end" textLength="59">0.00004 % (</text><text x="645.3" y="559" fill="#ff0" text-anchor="end" >-127.06 dB)</text><text x="652.6" y="559" fill="#ff0" text-anchor="start" textLength="42.600">THD+N=</text><text x="768.6" y="559" fill="#ff0" text-anchor="end" textLength="58.600">0.00213 % (</text><text x="832.4" y="559" fill="#ff0" text-anchor="end" >-93.45 dB)</text><text x="839.9" y="559" fill="#ff0" text-anchor="start" textLength="39.300">SINAD=</text><text x="937.7" y="559" fill="#ff0" text-anchor="end" >93.45 dB</text><text x="945.6" y="559" fill="#ff0" text-anchor="start" textLength="28.400">SNR=</text><text x="1032.6" y="559" fill="#ff0" text-anchor="end" >93.45 dB</text><text x="1040" y="559" fill="#ff0" text-anchor="start" textLength="20.700">NL=</text><text x="1128.2" y="559" fill="#ff0" text-anchor="end" >-92.74 dBV</text><text x="1328.500" y="588" fill="#fff" text-anchor="middle" font-size="15" textLength="19" lengthAdjust="spacingAndGlyphs">MI</text><path d="M1318 578.500h21M1318 580.500h21M1318 582.500h21" stroke="#000" shape-rendering="crispEdges"/></svg>
<div class="a " style="left:1010px;top:126px;width:904px;height:226px;background:#fff;border:1px solid #8a8a8a;box-sizing:border-box;box-shadow:0 2px 8px rgba(0,0,0,.35)"></div><svg class="a" style="left:1019px;top:135px" width="16" height="16" viewBox="0 0 16 16"><text x="0.200" y="6.800" font-size="8" font-family="Liberation Sans,sans-serif" stroke-width=".35" fill="#00f" stroke="#00f">D</text><text x="5.400" y="6.800" font-size="8" font-family="Liberation Sans,sans-serif" stroke-width=".35" fill="#f00" stroke="#f00">D</text><text x="10.700" y="6.800" font-size="8" font-family="Liberation Sans,sans-serif" stroke-width=".35" fill="#0d0" stroke="#0d0">P</text><path d="M.500 7.500h15v7h-15zM.500 11h15M5.500 7.500v7M10.500 7.500v7" stroke="#808080" fill="none" shape-rendering="crispEdges"/></svg><span class="t " style="left:1040px;top:136px;font-size:13px;color:#9a9a9a;letter-spacing:-0.2px">A&amp;B-Harmonic Frequencies, RMS, Phases</span><svg class="a" style="left:1770px;top:127px" width="140" height="32" viewBox="1770 127 140 32"><path d="M1784 142.5h10" stroke="#9a9a9a" fill="none" shape-rendering="crispEdges"/><rect x="1833.5" y="137.5" width="9" height="9" stroke="#9a9a9a" fill="none" shape-rendering="crispEdges"/><path d="M1883 137l10 10M1893 137l-10 10" stroke="#9a9a9a" stroke-width="1" fill="none"/></svg><div class="a " style="left:1012px;top:161px;width:898px;height:188px;background:#f0f0f0;border:1px solid;border-color:#a0a0a0 #fff #fff #a0a0a0;box-sizing:border-box"></div><div class="a " style="left:1013px;top:162px;width:896px;height:186px;background:#000;border:1px solid;border-color:#696969 #e3e3e3 #e3e3e3 #696969;box-sizing:border-box"></div><div class="a " style="left:1014px;top:163px;width:50px;height:16px;background:#f0f0f0;border:1px solid;border-color:#fff #a0a0a0 #a0a0a0 #fff;box-sizing:border-box"></div><span class="t " style="left:1020px;top:165px;font-size:10.3px;color:#000;line-height:14px">A-Order</span><div class="a " style="left:1064px;top:163px;width:100px;height:16px;background:#f0f0f0;border:1px solid;border-color:#fff #a0a0a0 #a0a0a0 #fff;box-sizing:border-box"></div><span class="t " style="left:1070px;top:165px;font-size:10.3px;color:#000;line-height:14px">A-Freq. (Hz)</span><div class="a " style="left:1164px;top:163px;width:100px;height:16px;background:#f0f0f0;border:1px solid;border-color:#fff #a0a0a0 #a0a0a0 #fff;box-sizing:border-box"></div><span class="t " style="left:1170px;top:165px;font-size:10.3px;color:#000;line-height:14px">A-RMS (dBV)</span><div class="a " style="left:1264px;top:163px;width:100px;height:16px;background:#f0f0f0;border:1px solid;border-color:#fff #a0a0a0 #a0a0a0 #fff;box-sizing:border-box"></div><span class="t " style="left:1270px;top:165px;font-size:10.3px;color:#000;line-height:14px">A-%</span><div class="a " style="left:1364px;top:163px;width:100px;height:16px;background:#f0f0f0;border:1px solid;border-color:#fff #a0a0a0 #a0a0a0 #fff;box-sizing:border-box"></div><span class="t " style="left:1370px;top:165px;font-size:10.3px;color:#000;line-height:14px">A-Phase (D)</span><div class="a " style="left:1464px;top:163px;width:50px;height:16px;background:#f0f0f0;border:1px solid;border-color:#fff #a0a0a0 #a0a0a0 #fff;box-sizing:border-box"></div><span class="t " style="left:1470px;top:165px;font-size:10.3px;color:#000;line-height:14px">B-Order</span><div class="a " style="left:1514px;top:163px;width:100px;height:16px;background:#f0f0f0;border:1px solid;border-color:#fff #a0a0a0 #a0a0a0 #fff;box-sizing:border-box"></div><span class="t " style="left:1520px;top:165px;font-size:10.3px;color:#000;line-height:14px">B-Freq. (Hz)</span><div class="a " style="left:1614px;top:163px;width:100px;height:16px;background:#f0f0f0;border:1px solid;border-color:#fff #a0a0a0 #a0a0a0 #fff;box-sizing:border-box"></div><span class="t " style="left:1620px;top:165px;font-size:10.3px;color:#000;line-height:14px">B-RMS (dBV)</span><div class="a " style="left:1714px;top:163px;width:100px;height:16px;background:#f0f0f0;border:1px solid;border-color:#fff #a0a0a0 #a0a0a0 #fff;box-sizing:border-box"></div><span class="t " style="left:1720px;top:165px;font-size:10.3px;color:#000;line-height:14px">B-%</span><div class="a " style="left:1814px;top:163px;width:78px;height:16px;background:#f0f0f0;border:1px solid;border-color:#fff #a0a0a0 #a0a0a0 #fff;box-sizing:border-box"></div><span class="t " style="left:1820px;top:165px;font-size:10.3px;color:#000;line-height:14px">B-Phase (D)</span><div class="a " style="left:1892px;top:163px;width:17px;height:16px;background:#f0f0f0"></div><svg class="a" style="left:1014px;top:179px" width="878" height="151" viewBox="1014 179 878 151" shape-rendering="crispEdges"><path d="M1014 195.5H1892M1014 212.5H1892M1014 229.5H1892M1014 246.5H1892M1014 263.5H1892M1014 280.5H1892M1014 297.5H1892M1014 314.5H1892M1014 331.5H1892M1064.5 179V330M1164.5 179V330M1264.5 179V330M1364.5 179V330M1464.5 179V330M1514.5 179V330M1614.5 179V330M1714.5 179V330M1814.5 179V330" stroke="#fff" fill="none"/></svg><span class="t " style="left:1020px;top:180px;font-size:11px;color:#fff;line-height:14px">1</span><span class="t " style="left:1070px;top:180px;font-size:11px;color:#fff;line-height:14px">1.001671 kHz</span><span class="t " style="left:1170px;top:180px;font-size:11px;color:#fff;line-height:14px">-63.10 dBV</span><span class="t " style="left:1270px;top:180px;font-size:11px;color:#fff;line-height:14px">100.0000000  %</span><span class="t " style="left:1370px;top:180px;font-size:11px;color:#fff;line-height:14px">7.83  D</span><span class="t " style="left:1470px;top:180px;font-size:11px;color:#fff;line-height:14px">1</span><span class="t " style="left:1520px;top:180px;font-size:11px;color:#fff;line-height:14px">1.001671 kHz</span><span class="t " style="left:1620px;top:180px;font-size:11px;color:#fff;line-height:14px">0.71 dBV</span><span class="t " style="left:1720px;top:180px;font-size:11px;color:#fff;line-height:14px">100.0000000  %</span><span class="t " style="left:1820px;top:180px;font-size:11px;color:#fff;line-height:14px">63.98  D</span><span class="t " style="left:1020px;top:197px;font-size:11px;color:#fff;line-height:14px">2</span><span class="t " style="left:1070px;top:197px;font-size:11px;color:#fff;line-height:14px">2.003343 kHz</span><span class="t " style="left:1170px;top:197px;font-size:11px;color:#fff;line-height:14px">-147.89 dBV</span><span class="t " style="left:1270px;top:197px;font-size:11px;color:#fff;line-height:14px">0.0057608  %</span><span class="t " style="left:1370px;top:197px;font-size:11px;color:#fff;line-height:14px">100.93  D</span><span class="t " style="left:1470px;top:197px;font-size:11px;color:#fff;line-height:14px">2</span><span class="t " style="left:1520px;top:197px;font-size:11px;color:#fff;line-height:14px">2.003343 kHz</span><span class="t " style="left:1620px;top:197px;font-size:11px;color:#fff;line-height:14px">-128.56 dBV</span><span class="t " style="left:1720px;top:197px;font-size:11px;color:#fff;line-height:14px">0.0000344  %</span><span class="t " style="left:1820px;top:197px;font-size:11px;color:#fff;line-height:14px">-110.27  D</span><span class="t " style="left:1020px;top:214px;font-size:11px;color:#fff;line-height:14px">3</span><span class="t " style="left:1070px;top:214px;font-size:11px;color:#fff;line-height:14px">3.005014 kHz</span><span class="t " style="left:1170px;top:214px;font-size:11px;color:#fff;line-height:14px">-148.70 dBV</span><span class="t " style="left:1270px;top:214px;font-size:11px;color:#fff;line-height:14px">0.0052530  %</span><span class="t " style="left:1370px;top:214px;font-size:11px;color:#fff;line-height:14px">30.13  D</span><span class="t " style="left:1470px;top:214px;font-size:11px;color:#fff;line-height:14px">3</span><span class="t " style="left:1520px;top:214px;font-size:11px;color:#fff;line-height:14px">3.005014 kHz</span><span class="t " style="left:1620px;top:214px;font-size:11px;color:#fff;line-height:14px">-136.95 dBV</span><span class="t " style="left:1720px;top:214px;font-size:11px;color:#fff;line-height:14px">0.0000131  %</span><span class="t " style="left:1820px;top:214px;font-size:11px;color:#fff;line-height:14px">118.48  D</span><span class="t " style="left:1020px;top:231px;font-size:11px;color:#fff;line-height:14px">4</span><span class="t " style="left:1070px;top:231px;font-size:11px;color:#fff;line-height:14px">4.006685 kHz</span><span class="t " style="left:1170px;top:231px;font-size:11px;color:#fff;line-height:14px">-150.39 dBV</span><span class="t " style="left:1270px;top:231px;font-size:11px;color:#fff;line-height:14px">0.0043241  %</span><span class="t " style="left:1370px;top:231px;font-size:11px;color:#fff;line-height:14px">43.53  D</span><span class="t " style="left:1470px;top:231px;font-size:11px;color:#fff;line-height:14px">4</span><span class="t " style="left:1520px;top:231px;font-size:11px;color:#fff;line-height:14px">4.006685 kHz</span><span class="t " style="left:1620px;top:231px;font-size:11px;color:#fff;line-height:14px">-141.94 dBV</span><span class="t " style="left:1720px;top:231px;font-size:11px;color:#fff;line-height:14px">0.0000074  %</span><span class="t " style="left:1820px;top:231px;font-size:11px;color:#fff;line-height:14px">121.09  D</span><span class="t " style="left:1020px;top:248px;font-size:11px;color:#fff;line-height:14px">5</span><span class="t " style="left:1070px;top:248px;font-size:11px;color:#fff;line-height:14px">5.008357 kHz</span><span class="t " style="left:1170px;top:248px;font-size:11px;color:#fff;line-height:14px">-150.58 dBV</span><span class="t " style="left:1270px;top:248px;font-size:11px;color:#fff;line-height:14px">0.0042309  %</span><span class="t " style="left:1370px;top:248px;font-size:11px;color:#fff;line-height:14px">74.27  D</span><span class="t " style="left:1470px;top:248px;font-size:11px;color:#fff;line-height:14px">5</span><span class="t " style="left:1520px;top:248px;font-size:11px;color:#fff;line-height:14px">5.008357 kHz</span><span class="t " style="left:1620px;top:248px;font-size:11px;color:#fff;line-height:14px">-141.60 dBV</span><span class="t " style="left:1720px;top:248px;font-size:11px;color:#fff;line-height:14px">0.0000077  %</span><span class="t " style="left:1820px;top:248px;font-size:11px;color:#fff;line-height:14px">-38.67  D</span><span class="t " style="left:1020px;top:265px;font-size:11px;color:#fff;line-height:14px">6</span><span class="t " style="left:1070px;top:265px;font-size:11px;color:#fff;line-height:14px">6.010028 kHz</span><span class="t " style="left:1170px;top:265px;font-size:11px;color:#fff;line-height:14px">-150.76 dBV</span><span class="t " style="left:1270px;top:265px;font-size:11px;color:#fff;line-height:14px">0.0041432  %</span><span class="t " style="left:1370px;top:265px;font-size:11px;color:#fff;line-height:14px">4.21  D</span><span class="t " style="left:1470px;top:265px;font-size:11px;color:#fff;line-height:14px">6</span><span class="t " style="left:1520px;top:265px;font-size:11px;color:#fff;line-height:14px">6.010028 kHz</span><span class="t " style="left:1620px;top:265px;font-size:11px;color:#fff;line-height:14px">-143.49 dBV</span><span class="t " style="left:1720px;top:265px;font-size:11px;color:#fff;line-height:14px">0.0000062  %</span><span class="t " style="left:1820px;top:265px;font-size:11px;color:#fff;line-height:14px">71.68  D</span><span class="t " style="left:1020px;top:282px;font-size:11px;color:#fff;line-height:14px">7</span><span class="t " style="left:1070px;top:282px;font-size:11px;color:#fff;line-height:14px">7.011700 kHz</span><span class="t " style="left:1170px;top:282px;font-size:11px;color:#fff;line-height:14px">-152.73 dBV</span><span class="t " style="left:1270px;top:282px;font-size:11px;color:#fff;line-height:14px">0.0033033  %</span><span class="t " style="left:1370px;top:282px;font-size:11px;color:#fff;line-height:14px">60.73  D</span><span class="t " style="left:1470px;top:282px;font-size:11px;color:#fff;line-height:14px">7</span><span class="t " style="left:1520px;top:282px;font-size:11px;color:#fff;line-height:14px">7.011700 kHz</span><span class="t " style="left:1620px;top:282px;font-size:11px;color:#fff;line-height:14px">-144.76 dBV</span><span class="t " style="left:1720px;top:282px;font-size:11px;color:#fff;line-height:14px">0.0000053  %</span><span class="t " style="left:1820px;top:282px;font-size:11px;color:#fff;line-height:14px">-126.15  D</span><span class="t " style="left:1020px;top:299px;font-size:11px;color:#fff;line-height:14px">8</span><span class="t " style="left:1070px;top:299px;font-size:11px;color:#fff;line-height:14px">8.013371 kHz</span><span class="t " style="left:1170px;top:299px;font-size:11px;color:#fff;line-height:14px">-152.37 dBV</span><span class="t " style="left:1270px;top:299px;font-size:11px;color:#fff;line-height:14px">0.0034431  %</span><span class="t " style="left:1370px;top:299px;font-size:11px;color:#fff;line-height:14px">32.01  D</span><span class="t " style="left:1470px;top:299px;font-size:11px;color:#fff;line-height:14px">8</span><span class="t " style="left:1520px;top:299px;font-size:11px;color:#fff;line-height:14px">8.013371 kHz</span><span class="t " style="left:1620px;top:299px;font-size:11px;color:#fff;line-height:14px">-144.36 dBV</span><span class="t " style="left:1720px;top:299px;font-size:11px;color:#fff;line-height:14px">0.0000056  %</span><span class="t " style="left:1820px;top:299px;font-size:11px;color:#fff;line-height:14px">43.29  D</span><span class="t " style="left:1020px;top:316px;font-size:11px;color:#fff;line-height:14px">9</span><span class="t " style="left:1070px;top:316px;font-size:11px;color:#fff;line-height:14px">9.015042 kHz</span><span class="t " style="left:1170px;top:316px;font-size:11px;color:#fff;line-height:14px">-152.39 dBV</span><span class="t " style="left:1270px;top:316px;font-size:11px;color:#fff;line-height:14px">0.0034344  %</span><span class="t " style="left:1370px;top:316px;font-size:11px;color:#fff;line-height:14px">53.93  D</span><span class="t " style="left:1470px;top:316px;font-size:11px;color:#fff;line-height:14px">9</span><span class="t " style="left:1520px;top:316px;font-size:11px;color:#fff;line-height:14px">9.015042 kHz</span><span class="t " style="left:1620px;top:316px;font-size:11px;color:#fff;line-height:14px">-143.50 dBV</span><span class="t " style="left:1720px;top:316px;font-size:11px;color:#fff;line-height:14px">0.0000062  %</span><span class="t " style="left:1820px;top:316px;font-size:11px;color:#fff;line-height:14px">127.93  D</span><div class="a " style="left:1892px;top:163px;width:17px;height:167px;background:#f0f0f0"></div><div class="a " style="left:1892px;top:181px;width:17px;height:54px;background:#cdcdcd"></div><svg class="a" style="left:1892px;top:163px" width="17" height="167" viewBox="0 0 17 167"><path d="M4.5 12l4-4l4 4M4.5 155l4 4l4-4" stroke="#606060" stroke-width="2.2" fill="none"/></svg><div class="a " style="left:1014px;top:330px;width:895px;height:17px;background:#f0f0f0"></div><div class="a " style="left:1033px;top:330px;width:818px;height:17px;background:#cdcdcd"></div><svg class="a" style="left:1014px;top:330px" width="895" height="17" viewBox="1014 330 895 17"><path d="M1025.5 334.5l-4 4l4 4M1879.5 334.5l4 4l-4 4" stroke="#606060" stroke-width="2.2" fill="none"/><path d="M1905 343h2v2h-2zM1902 343h2v2h-2zM1899 343h2v2h-2zM1905 340h2v2h-2zM1902 340h2v2h-2zM1905 337h2v2h-2z" fill="#bdbdbd"/></svg>
<div class="a " style="left:1396px;top:354px;width:268px;height:76px;background:#000;box-shadow:0 0 0 1px rgba(70,70,70,.55),0 3px 9px 1px rgba(0,0,0,.42)"></div><div class="a " style="left:1396px;top:354px;width:268px;height:76px;overflow:hidden"><span class="t" style="left:14.5px;top:39.1px;font:34.5px/34.5px 'Liberation Mono',monospace;-webkit-text-stroke:.3px #fff;color:#fff;transform-origin:0 0;transform:scaleX(1.1208)">0.0000099 %</span><div class="a" style="left:22.2px;top:48.5px;width:7.7px;height:11.0px;background:#000"></div><div class="a" style="left:68.6px;top:48.5px;width:7.7px;height:11.0px;background:#000"></div><div class="a" style="left:91.8px;top:48.5px;width:7.7px;height:11.0px;background:#000"></div><div class="a" style="left:115.0px;top:48.5px;width:7.7px;height:11.0px;background:#000"></div><div class="a" style="left:138.2px;top:48.5px;width:7.7px;height:11.0px;background:#000"></div><div class="a" style="left:161.4px;top:48.5px;width:7.7px;height:11.0px;background:#000"></div></div><div class="a " style="left:1396px;top:354px;width:268px;height:32px;background:#fff"></div><svg class="a" style="left:1404px;top:362px" width="16" height="16" viewBox="0 0 16 16"><rect width="16" height="16" fill="#fff"/><text x="0.200" y="6.800" font-size="8" font-family="Liberation Sans,sans-serif" stroke-width=".35" fill="#00f" stroke="#00f">D</text><text x="5.400" y="6.800" font-size="8" font-family="Liberation Sans,sans-serif" stroke-width=".35" fill="#f00" stroke="#f00">D</text><text x="10.700" y="6.800" font-size="8" font-family="Liberation Sans,sans-serif" stroke-width=".35" fill="#0d0" stroke="#0d0">P</text><circle cx="7" cy="11" r="2.600" fill="none" stroke="#000" stroke-width="1"/><path d="M5.800 11h2.400M7 9.800v2.400" stroke="#000" stroke-width=".8"/><path d="M9 13l3 2.500" stroke="#000" stroke-width="1.300"/></svg><span class="t" style="left:1425px;top:363px;font-size:13px;color:#9a9a9a;letter-spacing:-0.1px">THD Notch 1</span><svg class="a" style="left:1524px;top:354px" width="140" height="32" viewBox="1524 354 140 32"><path d="M1535 369.5h10" stroke="#9a9a9a" fill="none" shape-rendering="crispEdges"/><rect x="1584.5" y="364.5" width="9" height="9" stroke="#9a9a9a" fill="none" shape-rendering="crispEdges"/><path d="M1634 364l10 10M1644 364l-10 10" stroke="#9a9a9a" stroke-width="1" fill="none"/></svg><div class="a " style="left:1675px;top:354px;width:241px;height:79px;background:#000;box-shadow:0 0 0 1px rgba(70,70,70,.55),0 3px 9px 1px rgba(0,0,0,.42)"></div><div class="a " style="left:1675px;top:354px;width:241px;height:79px;overflow:hidden"><span class="t" style="left:9.9px;top:39.2px;font:36.2px/36.2px 'Liberation Mono',monospace;-webkit-text-stroke:.3px #fff;color:#fff;transform-origin:0 0;transform:scaleX(0.9715)">0.0000079 %</span><div class="a" style="left:17.0px;top:49.1px;width:7.0px;height:11.6px;background:#000"></div><div class="a" style="left:59.2px;top:49.1px;width:7.0px;height:11.6px;background:#000"></div><div class="a" style="left:80.3px;top:49.1px;width:7.0px;height:11.6px;background:#000"></div><div class="a" style="left:101.4px;top:49.1px;width:7.0px;height:11.6px;background:#000"></div><div class="a" style="left:122.5px;top:49.1px;width:7.0px;height:11.6px;background:#000"></div><div class="a" style="left:143.6px;top:49.1px;width:7.0px;height:11.6px;background:#000"></div></div><div class="a " style="left:1675px;top:354px;width:241px;height:32px;background:#fff"></div><svg class="a" style="left:1683px;top:362px" width="16" height="16" viewBox="0 0 16 16"><rect width="16" height="16" fill="#fff"/><text x="0.200" y="6.800" font-size="8" font-family="Liberation Sans,sans-serif" stroke-width=".35" fill="#00f" stroke="#00f">D</text><text x="5.400" y="6.800" font-size="8" font-family="Liberation Sans,sans-serif" stroke-width=".35" fill="#f00" stroke="#f00">D</text><text x="10.700" y="6.800" font-size="8" font-family="Liberation Sans,sans-serif" stroke-width=".35" fill="#0d0" stroke="#0d0">P</text><circle cx="7" cy="11" r="2.600" fill="none" stroke="#000" stroke-width="1"/><path d="M5.800 11h2.400M7 9.800v2.400" stroke="#000" stroke-width=".8"/><path d="M9 13l3 2.500" stroke="#000" stroke-width="1.300"/></svg><span class="t" style="left:1704px;top:363px;font-size:13px;color:#9a9a9a;letter-spacing:-0.1px">THD Not<span style="letter-spacing:-1px">...</span></span><svg class="a" style="left:1776px;top:354px" width="140" height="32" viewBox="1776 354 140 32"><path d="M1787 369.5h10" stroke="#9a9a9a" fill="none" shape-rendering="crispEdges"/><rect x="1836.5" y="364.5" width="9" height="9" stroke="#9a9a9a" fill="none" shape-rendering="crispEdges"/><path d="M1886 364l10 10M1896 364l-10 10" stroke="#9a9a9a" stroke-width="1" fill="none"/></svg><div class="a " style="left:1400px;top:435px;width:267px;height:81px;background:#000;box-shadow:0 0 0 1px rgba(70,70,70,.55),0 3px 9px 1px rgba(0,0,0,.42)"></div><div class="a " style="left:1400px;top:435px;width:267px;height:81px;overflow:hidden"><span class="t" style="left:15.0px;top:38.4px;font:39.3px/39.3px 'Liberation Mono',monospace;-webkit-text-stroke:.3px #fff;color:#fff;transform-origin:0 0;transform:scaleX(1.0645)">-140.09 dB</span><div class="a" style="left:98.7px;top:49.2px;width:8.4px;height:12.6px;background:#000"></div><div class="a" style="left:148.9px;top:49.2px;width:8.4px;height:12.6px;background:#000"></div></div><div class="a " style="left:1400px;top:435px;width:267px;height:32px;background:#fff"></div><svg class="a" style="left:1408px;top:443px" width="16" height="16" viewBox="0 0 16 16"><rect width="16" height="16" fill="#fff"/><text x="0.200" y="6.800" font-size="8" font-family="Liberation Sans,sans-serif" stroke-width=".35" fill="#00f" stroke="#00f">D</text><text x="5.400" y="6.800" font-size="8" font-family="Liberation Sans,sans-serif" stroke-width=".35" fill="#f00" stroke="#f00">D</text><text x="10.700" y="6.800" font-size="8" font-family="Liberation Sans,sans-serif" stroke-width=".35" fill="#0d0" stroke="#0d0">P</text><circle cx="7" cy="11" r="2.600" fill="none" stroke="#000" stroke-width="1"/><path d="M5.800 11h2.400M7 9.800v2.400" stroke="#000" stroke-width=".8"/><path d="M9 13l3 2.500" stroke="#000" stroke-width="1.300"/></svg><span class="t" style="left:1429px;top:444px;font-size:13px;color:#9a9a9a;letter-spacing:-0.1px">THD Notch 1<span style="letter-spacing:-1px">...</span></span><svg class="a" style="left:1527px;top:435px" width="140" height="32" viewBox="1527 435 140 32"><path d="M1538 450.5h10" stroke="#9a9a9a" fill="none" shape-rendering="crispEdges"/><rect x="1587.5" y="445.5" width="9" height="9" stroke="#9a9a9a" fill="none" shape-rendering="crispEdges"/><path d="M1637 445l10 10M1647 445l-10 10" stroke="#9a9a9a" stroke-width="1" fill="none"/></svg><div class="a " style="left:1676px;top:436px;width:239px;height:79px;background:#000;box-shadow:0 0 0 1px rgba(70,70,70,.55),0 3px 9px 1px rgba(0,0,0,.42)"></div><div class="a " style="left:1676px;top:436px;width:239px;height:79px;overflow:hidden"><span class="t" style="left:7.2px;top:40.0px;font:36.0px/36.0px 'Liberation Mono',monospace;-webkit-text-stroke:.3px #fff;color:#fff;transform-origin:0 0;transform:scaleX(1.0694)">-142.08 dB</span><div class="a" style="left:130.4px;top:49.9px;width:7.7px;height:11.5px;background:#000"></div></div><div class="a " style="left:1676px;top:436px;width:239px;height:32px;background:#fff"></div><svg class="a" style="left:1684px;top:444px" width="16" height="16" viewBox="0 0 16 16"><rect width="16" height="16" fill="#fff"/><text x="0.200" y="6.800" font-size="8" font-family="Liberation Sans,sans-serif" stroke-width=".35" fill="#00f" stroke="#00f">D</text><text x="5.400" y="6.800" font-size="8" font-family="Liberation Sans,sans-serif" stroke-width=".35" fill="#f00" stroke="#f00">D</text><text x="10.700" y="6.800" font-size="8" font-family="Liberation Sans,sans-serif" stroke-width=".35" fill="#0d0" stroke="#0d0">P</text><circle cx="7" cy="11" r="2.600" fill="none" stroke="#000" stroke-width="1"/><path d="M5.800 11h2.400M7 9.800v2.400" stroke="#000" stroke-width=".8"/><path d="M9 13l3 2.500" stroke="#000" stroke-width="1.300"/></svg><span class="t" style="left:1705px;top:445px;font-size:13px;color:#9a9a9a;letter-spacing:-0.1px">THD No<span style="letter-spacing:-1px">...</span></span><svg class="a" style="left:1775px;top:436px" width="140" height="32" viewBox="1775 436 140 32"><path d="M1786 451.5h10" stroke="#9a9a9a" fill="none" shape-rendering="crispEdges"/><rect x="1835.5" y="446.5" width="9" height="9" stroke="#9a9a9a" fill="none" shape-rendering="crispEdges"/><path d="M1885 446l10 10M1895 446l-10 10" stroke="#9a9a9a" stroke-width="1" fill="none"/></svg><div class="a " style="left:1443px;top:562px;width:232px;height:78px;background:#000;box-shadow:0 0 0 1px rgba(70,70,70,.55),0 3px 9px 1px rgba(0,0,0,.42)"></div><div class="a " style="left:1443px;top:562px;width:232px;height:78px;overflow:hidden"><span class="t" style="left:15.6px;top:40.1px;font:35.0px/35.0px 'Liberation Mono',monospace;-webkit-text-stroke:.3px #0ff;color:#0ff;transform-origin:0 0;transform:scaleX(1.1452)">0.01535 %</span><div class="a" style="left:23.6px;top:49.7px;width:8.0px;height:11.2px;background:#000"></div><div class="a" style="left:71.7px;top:49.7px;width:8.0px;height:11.2px;background:#000"></div></div><div class="a " style="left:1443px;top:562px;width:232px;height:32px;background:#fff"></div><svg class="a" style="left:1451px;top:570px" width="16" height="16" viewBox="0 0 16 16"><rect width="16" height="16" fill="#fff"/><text x="0.200" y="6.800" font-size="8" font-family="Liberation Sans,sans-serif" stroke-width=".35" fill="#00f" stroke="#00f">D</text><text x="5.400" y="6.800" font-size="8" font-family="Liberation Sans,sans-serif" stroke-width=".35" fill="#f00" stroke="#f00">D</text><text x="10.700" y="6.800" font-size="8" font-family="Liberation Sans,sans-serif" stroke-width=".35" fill="#0d0" stroke="#0d0">P</text><circle cx="7" cy="11" r="2.600" fill="none" stroke="#000" stroke-width="1"/><path d="M5.800 11h2.400M7 9.800v2.400" stroke="#000" stroke-width=".8"/><path d="M9 13l3 2.500" stroke="#000" stroke-width="1.300"/></svg><span class="t" style="left:1472px;top:571px;font-size:13px;color:#9a9a9a;letter-spacing:-0.1px">THD (C<span style="letter-spacing:-1px">...</span></span><svg class="a" style="left:1535px;top:562px" width="140" height="32" viewBox="1535 562 140 32"><path d="M1546 577.5h10" stroke="#9a9a9a" fill="none" shape-rendering="crispEdges"/><rect x="1595.5" y="572.5" width="9" height="9" stroke="#9a9a9a" fill="none" shape-rendering="crispEdges"/><path d="M1645 572l10 10M1655 572l-10 10" stroke="#9a9a9a" stroke-width="1" fill="none"/></svg><div class="a " style="left:1680px;top:563px;width:232px;height:78px;background:#000;box-shadow:0 0 0 1px rgba(70,70,70,.55),0 3px 9px 1px rgba(0,0,0,.42)"></div><div class="a " style="left:1680px;top:563px;width:232px;height:78px;overflow:hidden"><span class="t" style="left:15.6px;top:40.1px;font:35.0px/35.0px 'Liberation Mono',monospace;-webkit-text-stroke:.3px #ff0;color:#ff0;transform-origin:0 0;transform:scaleX(1.1452)">0.00004 %</span><div class="a" style="left:23.6px;top:49.7px;width:8.0px;height:11.2px;background:#000"></div><div class="a" style="left:71.7px;top:49.7px;width:8.0px;height:11.2px;background:#000"></div><div class="a" style="left:95.8px;top:49.7px;width:8.0px;height:11.2px;background:#000"></div><div class="a" style="left:119.8px;top:49.7px;width:8.0px;height:11.2px;background:#000"></div><div class="a" style="left:143.9px;top:49.7px;width:8.0px;height:11.2px;background:#000"></div></div><div class="a " style="left:1680px;top:563px;width:232px;height:32px;background:#fff"></div><svg class="a" style="left:1688px;top:571px" width="16" height="16" viewBox="0 0 16 16"><rect width="16" height="16" fill="#fff"/><text x="0.200" y="6.800" font-size="8" font-family="Liberation Sans,sans-serif" stroke-width=".35" fill="#00f" stroke="#00f">D</text><text x="5.400" y="6.800" font-size="8" font-family="Liberation Sans,sans-serif" stroke-width=".35" fill="#f00" stroke="#f00">D</text><text x="10.700" y="6.800" font-size="8" font-family="Liberation Sans,sans-serif" stroke-width=".35" fill="#0d0" stroke="#0d0">P</text><circle cx="7" cy="11" r="2.600" fill="none" stroke="#000" stroke-width="1"/><path d="M5.800 11h2.400M7 9.800v2.400" stroke="#000" stroke-width=".8"/><path d="M9 13l3 2.500" stroke="#000" stroke-width="1.300"/></svg><span class="t" style="left:1709px;top:572px;font-size:13px;color:#9a9a9a;letter-spacing:-0.1px">THD_B</span><svg class="a" style="left:1772px;top:563px" width="140" height="32" viewBox="1772 563 140 32"><path d="M1783 578.5h10" stroke="#9a9a9a" fill="none" shape-rendering="crispEdges"/><rect x="1832.5" y="573.5" width="9" height="9" stroke="#9a9a9a" fill="none" shape-rendering="crispEdges"/><path d="M1882 573l10 10M1892 573l-10 10" stroke="#9a9a9a" stroke-width="1" fill="none"/></svg><div class="a " style="left:1443px;top:650px;width:232px;height:78px;background:#000;box-shadow:0 0 0 1px rgba(70,70,70,.55),0 3px 9px 1px rgba(0,0,0,.42)"></div><div class="a " style="left:1443px;top:650px;width:232px;height:78px;overflow:hidden"><span class="t" style="left:15.6px;top:40.1px;font:35.0px/35.0px 'Liberation Mono',monospace;-webkit-text-stroke:.3px #0ff;color:#0ff;transform-origin:0 0;transform:scaleX(1.1452)">1.78968 %</span></div><div class="a " style="left:1443px;top:650px;width:232px;height:32px;background:#fff"></div><svg class="a" style="left:1451px;top:658px" width="16" height="16" viewBox="0 0 16 16"><rect width="16" height="16" fill="#fff"/><text x="0.200" y="6.800" font-size="8" font-family="Liberation Sans,sans-serif" stroke-width=".35" fill="#00f" stroke="#00f">D</text><text x="5.400" y="6.800" font-size="8" font-family="Liberation Sans,sans-serif" stroke-width=".35" fill="#f00" stroke="#f00">D</text><text x="10.700" y="6.800" font-size="8" font-family="Liberation Sans,sans-serif" stroke-width=".35" fill="#0d0" stroke="#0d0">P</text><circle cx="7" cy="11" r="2.600" fill="none" stroke="#000" stroke-width="1"/><path d="M5.800 11h2.400M7 9.800v2.400" stroke="#000" stroke-width=".8"/><path d="M9 13l3 2.500" stroke="#000" stroke-width="1.300"/></svg><span class="t" style="left:1472px;top:659px;font-size:13px;color:#9a9a9a;letter-spacing:-0.1px">THD+<span style="letter-spacing:-1px">...</span></span><svg class="a" style="left:1535px;top:650px" width="140" height="32" viewBox="1535 650 140 32"><path d="M1546 665.5h10" stroke="#9a9a9a" fill="none" shape-rendering="crispEdges"/><rect x="1595.5" y="660.5" width="9" height="9" stroke="#9a9a9a" fill="none" shape-rendering="crispEdges"/><path d="M1645 660l10 10M1655 660l-10 10" stroke="#9a9a9a" stroke-width="1" fill="none"/></svg><div class="a " style="left:1680px;top:651px;width:232px;height:78px;background:#000;box-shadow:0 0 0 1px rgba(70,70,70,.55),0 3px 9px 1px rgba(0,0,0,.42)"></div><div class="a " style="left:1680px;top:651px;width:232px;height:78px;overflow:hidden"><span class="t" style="left:15.6px;top:40.1px;font:35.0px/35.0px 'Liberation Mono',monospace;-webkit-text-stroke:.3px #ff0;color:#ff0;transform-origin:0 0;transform:scaleX(1.1452)">0.00213 %</span><div class="a" style="left:23.6px;top:49.7px;width:8.0px;height:11.2px;background:#000"></div><div class="a" style="left:71.7px;top:49.7px;width:8.0px;height:11.2px;background:#000"></div><div class="a" style="left:95.8px;top:49.7px;width:8.0px;height:11.2px;background:#000"></div></div><div class="a " style="left:1680px;top:651px;width:232px;height:32px;background:#fff"></div><svg class="a" style="left:1688px;top:659px" width="16" height="16" viewBox="0 0 16 16"><rect width="16" height="16" fill="#fff"/><text x="0.200" y="6.800" font-size="8" font-family="Liberation Sans,sans-serif" stroke-width=".35" fill="#00f" stroke="#00f">D</text><text x="5.400" y="6.800" font-size="8" font-family="Liberation Sans,sans-serif" stroke-width=".35" fill="#f00" stroke="#f00">D</text><text x="10.700" y="6.800" font-size="8" font-family="Liberation Sans,sans-serif" stroke-width=".35" fill="#0d0" stroke="#0d0">P</text><circle cx="7" cy="11" r="2.600" fill="none" stroke="#000" stroke-width="1"/><path d="M5.800 11h2.400M7 9.800v2.400" stroke="#000" stroke-width=".8"/><path d="M9 13l3 2.500" stroke="#000" stroke-width="1.300"/></svg><span class="t" style="left:1709px;top:660px;font-size:13px;color:#9a9a9a;letter-spacing:-0.1px">THD+<span style="letter-spacing:-1px">...</span></span><svg class="a" style="left:1772px;top:651px" width="140" height="32" viewBox="1772 651 140 32"><path d="M1783 666.5h10" stroke="#9a9a9a" fill="none" shape-rendering="crispEdges"/><rect x="1832.5" y="661.5" width="9" height="9" stroke="#9a9a9a" fill="none" shape-rendering="crispEdges"/><path d="M1882 661l10 10M1892 661l-10 10" stroke="#9a9a9a" stroke-width="1" fill="none"/></svg><div class="a " style="left:1444px;top:739px;width:232px;height:78px;background:#000;box-shadow:0 0 0 1px rgba(70,70,70,.55),0 3px 9px 1px rgba(0,0,0,.42)"></div><div class="a " style="left:1444px;top:739px;width:232px;height:78px;overflow:hidden"><span class="t" style="left:7.9px;top:39.9px;font:35.0px/35.0px 'Liberation Mono',monospace;-webkit-text-stroke:.3px #0ff;color:#0ff;transform-origin:0 0;transform:scaleX(1.3333)">34.94 dB</span></div><div class="a " style="left:1444px;top:739px;width:232px;height:32px;background:#fff"></div><svg class="a" style="left:1452px;top:747px" width="16" height="16" viewBox="0 0 16 16"><rect width="16" height="16" fill="#fff"/><text x="0.200" y="6.800" font-size="8" font-family="Liberation Sans,sans-serif" stroke-width=".35" fill="#00f" stroke="#00f">D</text><text x="5.400" y="6.800" font-size="8" font-family="Liberation Sans,sans-serif" stroke-width=".35" fill="#f00" stroke="#f00">D</text><text x="10.700" y="6.800" font-size="8" font-family="Liberation Sans,sans-serif" stroke-width=".35" fill="#0d0" stroke="#0d0">P</text><circle cx="7" cy="11" r="2.600" fill="none" stroke="#000" stroke-width="1"/><path d="M5.800 11h2.400M7 9.800v2.400" stroke="#000" stroke-width=".8"/><path d="M9 13l3 2.500" stroke="#000" stroke-width="1.300"/></svg><span class="t" style="left:1473px;top:748px;font-size:13px;color:#9a9a9a;letter-spacing:-0.1px">SNR (C<span style="letter-spacing:-1px">...</span></span><svg class="a" style="left:1536px;top:739px" width="140" height="32" viewBox="1536 739 140 32"><path d="M1547 754.5h10" stroke="#9a9a9a" fill="none" shape-rendering="crispEdges"/><rect x="1596.5" y="749.5" width="9" height="9" stroke="#9a9a9a" fill="none" shape-rendering="crispEdges"/><path d="M1646 749l10 10M1656 749l-10 10" stroke="#9a9a9a" stroke-width="1" fill="none"/></svg><div class="a " style="left:1680px;top:739px;width:232px;height:78px;background:#000;box-shadow:0 0 0 1px rgba(70,70,70,.55),0 3px 9px 1px rgba(0,0,0,.42)"></div><div class="a " style="left:1680px;top:739px;width:232px;height:78px;overflow:hidden"><span class="t" style="left:7.9px;top:39.9px;font:35.0px/35.0px 'Liberation Mono',monospace;-webkit-text-stroke:.3px #ff0;color:#ff0;transform-origin:0 0;transform:scaleX(1.3333)">93.45 dB</span></div><div class="a " style="left:1680px;top:739px;width:232px;height:32px;background:#fff"></div><svg class="a" style="left:1688px;top:747px" width="16" height="16" viewBox="0 0 16 16"><rect width="16" height="16" fill="#fff"/><text x="0.200" y="6.800" font-size="8" font-family="Liberation Sans,sans-serif" stroke-width=".35" fill="#00f" stroke="#00f">D</text><text x="5.400" y="6.800" font-size="8" font-family="Liberation Sans,sans-serif" stroke-width=".35" fill="#f00" stroke="#f00">D</text><text x="10.700" y="6.800" font-size="8" font-family="Liberation Sans,sans-serif" stroke-width=".35" fill="#0d0" stroke="#0d0">P</text><circle cx="7" cy="11" r="2.600" fill="none" stroke="#000" stroke-width="1"/><path d="M5.800 11h2.400M7 9.800v2.400" stroke="#000" stroke-width=".8"/><path d="M9 13l3 2.500" stroke="#000" stroke-width="1.300"/></svg><span class="t" style="left:1709px;top:748px;font-size:13px;color:#9a9a9a;letter-spacing:-0.1px">SNR (C<span style="letter-spacing:-1px">...</span></span><svg class="a" style="left:1772px;top:739px" width="140" height="32" viewBox="1772 739 140 32"><path d="M1783 754.5h10" stroke="#9a9a9a" fill="none" shape-rendering="crispEdges"/><rect x="1832.5" y="749.5" width="9" height="9" stroke="#9a9a9a" fill="none" shape-rendering="crispEdges"/><path d="M1882 749l10 10M1892 749l-10 10" stroke="#9a9a9a" stroke-width="1" fill="none"/></svg><div class="a " style="left:1443px;top:825px;width:232px;height:78px;background:#000;box-shadow:0 0 0 1px rgba(70,70,70,.55),0 3px 9px 1px rgba(0,0,0,.42)"></div><div class="a " style="left:1443px;top:825px;width:232px;height:78px;overflow:hidden"><span class="t" style="left:7.9px;top:39.9px;font:35.0px/35.0px 'Liberation Mono',monospace;-webkit-text-stroke:.3px #0ff;color:#0ff;transform-origin:0 0;transform:scaleX(1.3333)">34.94 dB</span></div><div class="a " style="left:1443px;top:825px;width:232px;height:32px;background:#fff"></div><svg class="a" style="left:1451px;top:833px" width="16" height="16" viewBox="0 0 16 16"><rect width="16" height="16" fill="#fff"/><text x="0.200" y="6.800" font-size="8" font-family="Liberation Sans,sans-serif" stroke-width=".35" fill="#00f" stroke="#00f">D</text><text x="5.400" y="6.800" font-size="8" font-family="Liberation Sans,sans-serif" stroke-width=".35" fill="#f00" stroke="#f00">D</text><text x="10.700" y="6.800" font-size="8" font-family="Liberation Sans,sans-serif" stroke-width=".35" fill="#0d0" stroke="#0d0">P</text><circle cx="7" cy="11" r="2.600" fill="none" stroke="#000" stroke-width="1"/><path d="M5.800 11h2.400M7 9.800v2.400" stroke="#000" stroke-width=".8"/><path d="M9 13l3 2.500" stroke="#000" stroke-width="1.300"/></svg><span class="t" style="left:1472px;top:834px;font-size:13px;color:#9a9a9a;letter-spacing:-0.1px">SINAD <span style="letter-spacing:-1px">...</span></span><svg class="a" style="left:1535px;top:825px" width="140" height="32" viewBox="1535 825 140 32"><path d="M1546 840.5h10" stroke="#9a9a9a" fill="none" shape-rendering="crispEdges"/><rect x="1595.5" y="835.5" width="9" height="9" stroke="#9a9a9a" fill="none" shape-rendering="crispEdges"/><path d="M1645 835l10 10M1655 835l-10 10" stroke="#9a9a9a" stroke-width="1" fill="none"/></svg><div class="a " style="left:1680px;top:827px;width:232px;height:78px;background:#000;box-shadow:0 0 0 1px rgba(70,70,70,.55),0 3px 9px 1px rgba(0,0,0,.42)"></div><div class="a " style="left:1680px;top:827px;width:232px;height:78px;overflow:hidden"><span class="t" style="left:7.9px;top:39.9px;font:35.0px/35.0px 'Liberation Mono',monospace;-webkit-text-stroke:.3px #ff0;color:#ff0;transform-origin:0 0;transform:scaleX(1.3333)">93.45 dB</span></div><div class="a " style="left:1680px;top:827px;width:232px;height:32px;background:#fff"></div><svg class="a" style="left:1688px;top:835px" width="16" height="16" viewBox="0 0 16 16"><rect width="16" height="16" fill="#fff"/><text x="0.200" y="6.800" font-size="8" font-family="Liberation Sans,sans-serif" stroke-width=".35" fill="#00f" stroke="#00f">D</text><text x="5.400" y="6.800" font-size="8" font-family="Liberation Sans,sans-serif" stroke-width=".35" fill="#f00" stroke="#f00">D</text><text x="10.700" y="6.800" font-size="8" font-family="Liberation Sans,sans-serif" stroke-width=".35" fill="#0d0" stroke="#0d0">P</text><circle cx="7" cy="11" r="2.600" fill="none" stroke="#000" stroke-width="1"/><path d="M5.800 11h2.400M7 9.800v2.400" stroke="#000" stroke-width=".8"/><path d="M9 13l3 2.500" stroke="#000" stroke-width="1.300"/></svg><span class="t" style="left:1709px;top:836px;font-size:13px;color:#9a9a9a;letter-spacing:-0.1px">SINAD <span style="letter-spacing:-1px">...</span></span><svg class="a" style="left:1772px;top:827px" width="140" height="32" viewBox="1772 827 140 32"><path d="M1783 842.5h10" stroke="#9a9a9a" fill="none" shape-rendering="crispEdges"/><rect x="1832.5" y="837.5" width="9" height="9" stroke="#9a9a9a" fill="none" shape-rendering="crispEdges"/><path d="M1882 837l10 10M1892 837l-10 10" stroke="#9a9a9a" stroke-width="1" fill="none"/></svg><div class="a " style="left:1444px;top:916px;width:232px;height:78px;background:#000;box-shadow:0 0 0 1px rgba(70,70,70,.55),0 3px 9px 1px rgba(0,0,0,.42)"></div><div class="a " style="left:1444px;top:916px;width:232px;height:78px;overflow:hidden"><span class="t" style="left:7.9px;top:39.9px;font:35.0px/35.0px 'Liberation Mono',monospace;-webkit-text-stroke:.3px #0ff;color:#0ff;transform-origin:0 0;transform:scaleX(1.3333)">5.51 Bit</span></div><div class="a " style="left:1444px;top:916px;width:232px;height:32px;background:#fff"></div><svg class="a" style="left:1452px;top:924px" width="16" height="16" viewBox="0 0 16 16"><rect width="16" height="16" fill="#fff"/><text x="0.200" y="6.800" font-size="8" font-family="Liberation Sans,sans-serif" stroke-width=".35" fill="#00f" stroke="#00f">D</text><text x="5.400" y="6.800" font-size="8" font-family="Liberation Sans,sans-serif" stroke-width=".35" fill="#f00" stroke="#f00">D</text><text x="10.700" y="6.800" font-size="8" font-family="Liberation Sans,sans-serif" stroke-width=".35" fill="#0d0" stroke="#0d0">P</text><circle cx="7" cy="11" r="2.600" fill="none" stroke="#000" stroke-width="1"/><path d="M5.800 11h2.400M7 9.800v2.400" stroke="#000" stroke-width=".8"/><path d="M9 13l3 2.500" stroke="#000" stroke-width="1.300"/></svg><span class="t" style="left:1473px;top:925px;font-size:13px;color:#9a9a9a;letter-spacing:-0.1px">ENOB (<span style="letter-spacing:-1px">...</span></span><svg class="a" style="left:1536px;top:916px" width="140" height="32" viewBox="1536 916 140 32"><path d="M1547 931.5h10" stroke="#9a9a9a" fill="none" shape-rendering="crispEdges"/><rect x="1596.5" y="926.5" width="9" height="9" stroke="#9a9a9a" fill="none" shape-rendering="crispEdges"/><path d="M1646 926l10 10M1656 926l-10 10" stroke="#9a9a9a" stroke-width="1" fill="none"/></svg><div class="a " style="left:1680px;top:915px;width:232px;height:78px;background:#000;box-shadow:0 0 0 1px rgba(70,70,70,.55),0 3px 9px 1px rgba(0,0,0,.42)"></div><div class="a " style="left:1680px;top:915px;width:232px;height:78px;overflow:hidden"><span class="t" style="left:15.6px;top:40.1px;font:35.0px/35.0px 'Liberation Mono',monospace;-webkit-text-stroke:.3px #ff0;color:#ff0;transform-origin:0 0;transform:scaleX(1.1452)">15.23 Bit</span></div><div class="a " style="left:1680px;top:915px;width:232px;height:32px;background:#fff"></div><svg class="a" style="left:1688px;top:923px" width="16" height="16" viewBox="0 0 16 16"><rect width="16" height="16" fill="#fff"/><text x="0.200" y="6.800" font-size="8" font-family="Liberation Sans,sans-serif" stroke-width=".35" fill="#00f" stroke="#00f">D</text><text x="5.400" y="6.800" font-size="8" font-family="Liberation Sans,sans-serif" stroke-width=".35" fill="#f00" stroke="#f00">D</text><text x="10.700" y="6.800" font-size="8" font-family="Liberation Sans,sans-serif" stroke-width=".35" fill="#0d0" stroke="#0d0">P</text><circle cx="7" cy="11" r="2.600" fill="none" stroke="#000" stroke-width="1"/><path d="M5.800 11h2.400M7 9.800v2.400" stroke="#000" stroke-width=".8"/><path d="M9 13l3 2.500" stroke="#000" stroke-width="1.300"/></svg><span class="t" style="left:1709px;top:924px;font-size:13px;color:#9a9a9a;letter-spacing:-0.1px">ENOB (<span style="letter-spacing:-1px">...</span></span><svg class="a" style="left:1772px;top:915px" width="140" height="32" viewBox="1772 915 140 32"><path d="M1783 930.5h10" stroke="#9a9a9a" fill="none" shape-rendering="crispEdges"/><rect x="1832.5" y="925.5" width="9" height="9" stroke="#9a9a9a" fill="none" shape-rendering="crispEdges"/><path d="M1882 925l10 10M1892 925l-10 10" stroke="#9a9a9a" stroke-width="1" fill="none"/></svg><div class="a " style="left:1675px;top:1002px;width:242px;height:57px;background:#f0f0f0;box-shadow:0 0 0 1px rgba(70,70,70,.5),0 3px 9px 1px rgba(0,0,0,.4)"></div><div class="a " style="left:1675px;top:1002px;width:242px;height:27px;background:#fff"></div><svg class="a" style="left:1678px;top:1007px" width="16" height="16" viewBox="0 0 16 16"><rect width="16" height="16" fill="#ff0"/><path d="M0 4q2-4.500 4 0q2 3 4 0q2-4.500 4 0q2 3 4 0" stroke="#f00" fill="none" stroke-width="1.100"/><path d="M0 9.500h2v-3h4v3h4v-3h4v3h2" stroke="#0c0" fill="none" stroke-width="1.100"/><path d="M0 11l2.500 4l3-4l3 4l3-4l3 4l1.500-2" stroke="#00f" fill="none" stroke-width="1.100"/></svg><span class="t" style="left:1699px;top:1008px;font-size:13px;color:#9a9a9a">Signal Ge<span style="letter-spacing:-1px">...</span></span><svg class="a" style="left:1777px;top:1002px" width="140" height="27" viewBox="1777 1002 140 27"><path d="M1788 1015.500h10" stroke="#9a9a9a" fill="none" shape-rendering="crispEdges"/><rect x="1837.500" y="1010.500" width="9" height="9" stroke="#e4e4e4" fill="none" shape-rendering="crispEdges"/><path d="M1887 1010l10 10M1897 1010l-10 10" stroke="#9a9a9a" fill="none"/></svg><div class="a " style="left:1680px;top:1037px;width:13px;height:13px;background:#fff;border:1px solid;border-color:#696969 #e3e3e3 #e3e3e3 #696969;box-sizing:border-box;box-shadow:-1px -1px 0 #a0a0a0,1px 1px 0 #fff"></div><span class="t " style="left:1699px;top:1036px;font-size:11px;color:#000;line-height:14px;letter-spacing:-.27px">Show Editor</span><div class="a cb" style="left:1761px;top:1034px;width:127px;height:20px"><div class="cbi"><span class="cbt" style="font-size:11px;left:3px;top:1px;line-height:14px">No Loopback</span><div class="cbb"><svg class="a" style="right:4px;top:50%;margin-top:-2px" width="7" height="4" viewBox="0 0 7 4"><path d="M0 0h7l-3.500 4z" fill="#000"/></svg></div></div></div><div class="a " style="left:1890px;top:1033px;width:24px;height:22px;background:#f0f0f0;border:1px solid;border-color:#fff #696969 #696969 #fff;box-sizing:border-box;box-shadow:inset -1px -1px 0 #a0a0a0"><svg class="a" style="left:6px;top:4px" width="11" height="11" viewBox="0 0 11 11"><path d="M0 0l10 5.500L0 11z" fill="#f00"/></svg></div><div class="a " style="left:0px;top:1078px;width:1920px;height:2px;background:#555"></div>
</body></html>
